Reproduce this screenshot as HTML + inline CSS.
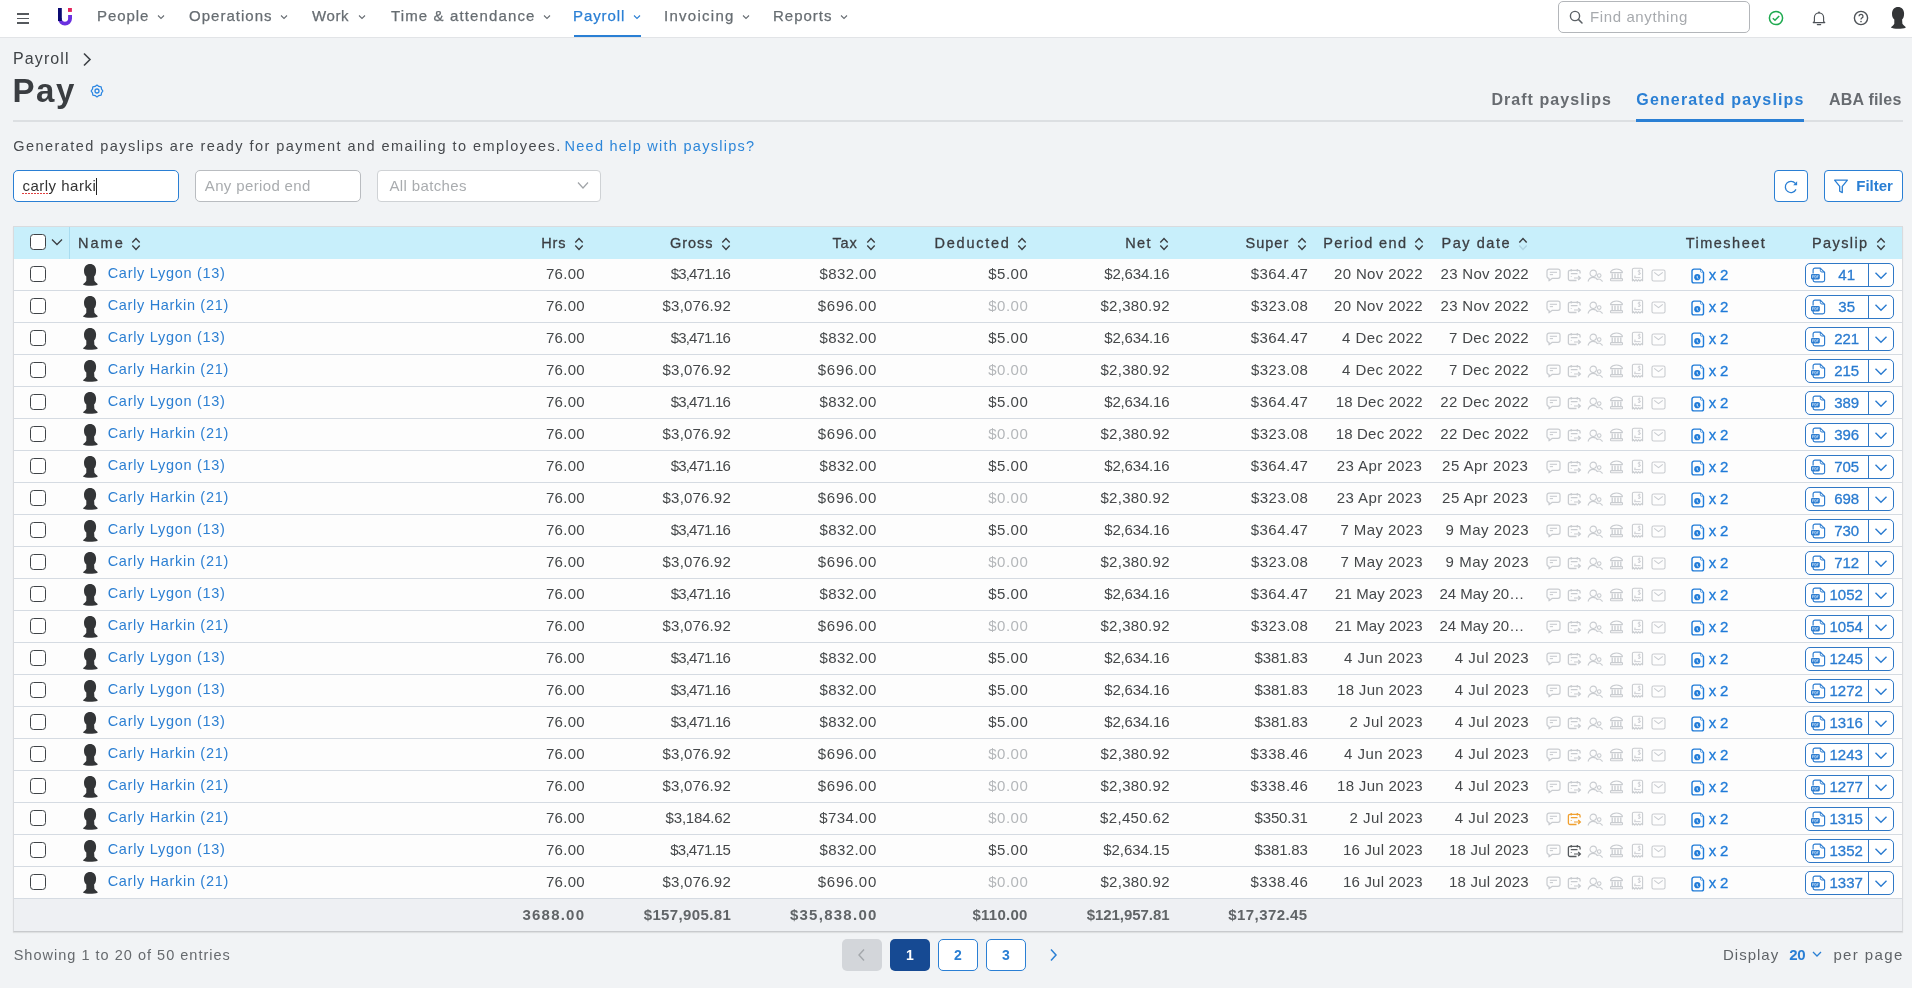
<!DOCTYPE html>
<html><head><meta charset="utf-8"><style>
html,body{margin:0;padding:0;}
body{width:1912px;height:988px;overflow:hidden;position:relative;background:#f1f3f5;font-family:"Liberation Sans", sans-serif;}
.t{position:absolute;white-space:nowrap;}
svg{display:block}
</style></head><body>
<div style="position:absolute;left:0px;top:0px;width:1912px;height:37px;background:#ffffff;border-bottom:1px solid #e2e4e7"></div>
<div style="position:absolute;left:17px;top:13.2px;width:12px;height:1.4px;background:#55595d"></div>
<div style="position:absolute;left:17px;top:17.7px;width:12px;height:1.4px;background:#55595d"></div>
<div style="position:absolute;left:17px;top:22.2px;width:12px;height:1.4px;background:#55595d"></div>
<svg style="position:absolute;left:56px;top:6px;" width="18" height="22" viewBox="0 0 18 22" fill="none">
<path d="M2 12 V12.6 A7 7 0 0 0 16 12.6 V9 H12.1 V12.6 A3.1 3.1 0 0 1 5.8 12.6 V12 Z" fill="#6a30e0"/>
<rect x="2" y="2" width="3.8" height="13" fill="#0b0a72"/>
<rect x="12" y="2" width="3.9" height="3.9" fill="#e4245c"/>
</svg>
<svg style="position:absolute;left:157px;top:14px;" width="8" height="6" viewBox="0 0 8 6" fill="none"><path d="M1 1.5 L4 4.5 L7 1.5" stroke="#676d72" stroke-width="1.1" fill="none"/></svg>
<svg style="position:absolute;left:280px;top:14px;" width="8" height="6" viewBox="0 0 8 6" fill="none"><path d="M1 1.5 L4 4.5 L7 1.5" stroke="#676d72" stroke-width="1.1" fill="none"/></svg>
<svg style="position:absolute;left:358px;top:14px;" width="8" height="6" viewBox="0 0 8 6" fill="none"><path d="M1 1.5 L4 4.5 L7 1.5" stroke="#676d72" stroke-width="1.1" fill="none"/></svg>
<svg style="position:absolute;left:543px;top:14px;" width="8" height="6" viewBox="0 0 8 6" fill="none"><path d="M1 1.5 L4 4.5 L7 1.5" stroke="#676d72" stroke-width="1.1" fill="none"/></svg>
<svg style="position:absolute;left:633px;top:14px;" width="8" height="6" viewBox="0 0 8 6" fill="none"><path d="M1 1.5 L4 4.5 L7 1.5" stroke="#2a7fd4" stroke-width="1.1" fill="none"/></svg>
<svg style="position:absolute;left:742px;top:14px;" width="8" height="6" viewBox="0 0 8 6" fill="none"><path d="M1 1.5 L4 4.5 L7 1.5" stroke="#676d72" stroke-width="1.1" fill="none"/></svg>
<svg style="position:absolute;left:840px;top:14px;" width="8" height="6" viewBox="0 0 8 6" fill="none"><path d="M1 1.5 L4 4.5 L7 1.5" stroke="#676d72" stroke-width="1.1" fill="none"/></svg>
<div style="position:absolute;left:574px;top:35px;width:67px;height:2px;background:#2a7fd4"></div>
<div style="position:absolute;left:1558px;top:1px;width:190px;height:30px;border:1px solid #b3b6ba;border-radius:5px;background:#fff"></div>
<svg style="position:absolute;left:1569px;top:10px;" width="15" height="15" viewBox="0 0 15 15" fill="none"><circle cx="6" cy="6" r="4.6" stroke="#5c6166" stroke-width="1.4"/><path d="M9.4 9.4 L13 13" stroke="#5c6166" stroke-width="1.5" stroke-linecap="round"/></svg>
<svg style="position:absolute;left:1767px;top:9px;" width="18" height="18" viewBox="0 0 18 18" fill="none"><circle cx="9" cy="9" r="6.6" stroke="#1eaa4f" stroke-width="1.5"/><path d="M5.8 9.2 L8 11.3 L12.2 6.9" stroke="#1eaa4f" stroke-width="1.5" fill="none"/></svg>
<svg style="position:absolute;left:1810px;top:9px;" width="18" height="18" viewBox="0 0 18 18" fill="none"><path d="M3.2 13.6 L4.4 12.3 V8.4 A4.6 4.6 0 0 1 13.6 8.4 V12.3 L14.8 13.6 Z" stroke="#4d5257" stroke-width="1.15" stroke-linejoin="round"/><circle cx="9" cy="3.3" r="0.9" fill="#4d5257"/><path d="M7.3 15.6 H10.7" stroke="#4d5257" stroke-width="1.1" stroke-linecap="round"/></svg>
<svg style="position:absolute;left:1852px;top:9px;" width="18" height="18" viewBox="0 0 18 18" fill="none"><circle cx="9" cy="9" r="6.6" stroke="#4d5257" stroke-width="1.4"/><path d="M7 7.3 A2 2 0 1 1 9.6 9.2 C9.1 9.5 9 9.8 9 10.5" stroke="#4d5257" stroke-width="1.3" fill="none"/><circle cx="9" cy="12.6" r="0.8" fill="#4d5257"/></svg>
<svg style="position:absolute;left:80px;top:51px;" width="14" height="16" viewBox="0 0 14 16" fill="none"><path d="M4 2.5 L10 8.5 L4 14.5" stroke="#3e4246" stroke-width="1.6" fill="none"/></svg>
<svg style="position:absolute;left:89px;top:83px;" width="16" height="16" viewBox="0 0 16 16" fill="none"><path d="M8.00 2.10 L9.88 3.47 L12.17 3.83 L12.53 6.12 L13.90 8.00 L12.53 9.88 L12.17 12.17 L9.88 12.53 L8.00 13.90 L6.12 12.53 L3.83 12.17 L3.47 9.88 L2.10 8.00 L3.47 6.12 L3.83 3.83 L6.12 3.47 Z" stroke="#2b86e2" stroke-width="1.25" stroke-linejoin="round" fill="none"/><circle cx="8" cy="8" r="2" stroke="#2b86e2" stroke-width="1.3"/></svg>
<div style="position:absolute;left:13px;top:120px;width:1890px;height:2px;background:#dcdfe2"></div>
<div style="position:absolute;left:1636px;top:119px;width:168px;height:3px;background:#2a7fd4"></div>
<div style="position:absolute;left:13px;top:170px;width:164px;height:30px;border:1px solid #2a7fd4;border-radius:5px;background:#fff"></div>
<div style="position:absolute;left:96px;top:178px;width:1px;height:17px;background:#222"></div>
<div style="position:absolute;left:22px;top:193px;width:1.5px;height:1.2px;background:#e04040"></div>
<div style="position:absolute;left:25px;top:193px;width:1.5px;height:1.2px;background:#e04040"></div>
<div style="position:absolute;left:28px;top:193px;width:1.5px;height:1.2px;background:#e04040"></div>
<div style="position:absolute;left:31px;top:193px;width:1.5px;height:1.2px;background:#e04040"></div>
<div style="position:absolute;left:34px;top:193px;width:1.5px;height:1.2px;background:#e04040"></div>
<div style="position:absolute;left:37px;top:193px;width:1.5px;height:1.2px;background:#e04040"></div>
<div style="position:absolute;left:40px;top:193px;width:1.5px;height:1.2px;background:#e04040"></div>
<div style="position:absolute;left:43px;top:193px;width:1.5px;height:1.2px;background:#e04040"></div>
<div style="position:absolute;left:46px;top:193px;width:1.5px;height:1.2px;background:#e04040"></div>
<div style="position:absolute;left:49px;top:193px;width:1.5px;height:1.2px;background:#e04040"></div>
<div style="position:absolute;left:195px;top:170px;width:164px;height:30px;border:1px solid #b9bcc0;border-radius:5px;background:#fff"></div>
<div style="position:absolute;left:377px;top:170px;width:222px;height:30px;border:1px solid #cfd2d5;border-radius:4px;background:#fff"></div>
<svg style="position:absolute;left:576px;top:180px;" width="14" height="12" viewBox="0 0 14 12" fill="none"><path d="M2 2.5 L7 8 L12 2.5" stroke="#a0a4a8" stroke-width="1.2" fill="none"/></svg>
<div style="position:absolute;left:1774px;top:170px;width:32px;height:30px;border:1px solid #2a7fd4;border-radius:4px;background:#fff"></div>
<svg style="position:absolute;left:1782px;top:178px;" width="18" height="18" viewBox="0 0 18 18" fill="none"><path d="M13.29 5.40 A5.6 5.6 0 1 0 13.98 11.37" stroke="#2a7fd4" stroke-width="1.3" fill="none"/><path d="M15.1 3.3 V7.2 H11.2 Z" fill="#2a7fd4"/></svg>
<div style="position:absolute;left:1824px;top:170px;width:77px;height:30px;border:1px solid #2a7fd4;border-radius:4px;background:#fff"></div>
<svg style="position:absolute;left:1832px;top:178px;" width="18" height="17" viewBox="0 0 18 17" fill="none"><path d="M2.6 2.2 H15.4 L10.3 8.4 V14.6 L7.7 13.2 V8.4 Z" stroke="#2a7fd4" stroke-width="1.3" stroke-linejoin="round" fill="none"/></svg>
<div style="position:absolute;left:13px;top:226px;width:1888px;height:704px;border:1px solid #d9dbde;border-bottom-color:#c8cacd;background:#fdfdfd;box-shadow:0 1px 1px rgba(0,0,0,0.08)"></div>
<div style="position:absolute;left:14px;top:227px;width:1888px;height:32px;background:#c8effb"></div>
<div style="position:absolute;left:69px;top:227px;width:1px;height:32px;background:#a8dcf0"></div>
<div style="position:absolute;left:30px;top:234px;width:13.5px;height:13.5px;border:1.3px solid #3f4347;border-radius:3.5px;background:#fff"></div>
<svg style="position:absolute;left:50px;top:237px;" width="14" height="10" viewBox="0 0 14 10" fill="none"><path d="M2 2.5 L7 7.5 L12 2.5" stroke="#3b3e42" stroke-width="1.3" fill="none"/></svg>
<svg style="position:absolute;left:130.9px;top:237px;" width="10" height="14" viewBox="0 0 10 14" fill="none"><path d="M1.3 5.4 L5 1.6 L8.7 5.4" stroke="#3b3e42" stroke-width="1.4" fill="none"/><path d="M1.3 8.6 L5 12.4 L8.7 8.6" stroke="#3b3e42" stroke-width="1.4" fill="none"/></svg>
<svg style="position:absolute;left:573.9px;top:237px;" width="10" height="14" viewBox="0 0 10 14" fill="none"><path d="M1.3 5.4 L5 1.6 L8.7 5.4" stroke="#3b3e42" stroke-width="1.4" fill="none"/><path d="M1.3 8.6 L5 12.4 L8.7 8.6" stroke="#3b3e42" stroke-width="1.4" fill="none"/></svg>
<svg style="position:absolute;left:720.6px;top:237px;" width="10" height="14" viewBox="0 0 10 14" fill="none"><path d="M1.3 5.4 L5 1.6 L8.7 5.4" stroke="#3b3e42" stroke-width="1.4" fill="none"/><path d="M1.3 8.6 L5 12.4 L8.7 8.6" stroke="#3b3e42" stroke-width="1.4" fill="none"/></svg>
<svg style="position:absolute;left:866px;top:237px;" width="10" height="14" viewBox="0 0 10 14" fill="none"><path d="M1.3 5.4 L5 1.6 L8.7 5.4" stroke="#3b3e42" stroke-width="1.4" fill="none"/><path d="M1.3 8.6 L5 12.4 L8.7 8.6" stroke="#3b3e42" stroke-width="1.4" fill="none"/></svg>
<svg style="position:absolute;left:1017px;top:237px;" width="10" height="14" viewBox="0 0 10 14" fill="none"><path d="M1.3 5.4 L5 1.6 L8.7 5.4" stroke="#3b3e42" stroke-width="1.4" fill="none"/><path d="M1.3 8.6 L5 12.4 L8.7 8.6" stroke="#3b3e42" stroke-width="1.4" fill="none"/></svg>
<svg style="position:absolute;left:1158.9px;top:237px;" width="10" height="14" viewBox="0 0 10 14" fill="none"><path d="M1.3 5.4 L5 1.6 L8.7 5.4" stroke="#3b3e42" stroke-width="1.4" fill="none"/><path d="M1.3 8.6 L5 12.4 L8.7 8.6" stroke="#3b3e42" stroke-width="1.4" fill="none"/></svg>
<svg style="position:absolute;left:1296.6px;top:237px;" width="10" height="14" viewBox="0 0 10 14" fill="none"><path d="M1.3 5.4 L5 1.6 L8.7 5.4" stroke="#3b3e42" stroke-width="1.4" fill="none"/><path d="M1.3 8.6 L5 12.4 L8.7 8.6" stroke="#3b3e42" stroke-width="1.4" fill="none"/></svg>
<svg style="position:absolute;left:1414px;top:237px;" width="10" height="14" viewBox="0 0 10 14" fill="none"><path d="M1.3 5.4 L5 1.6 L8.7 5.4" stroke="#3b3e42" stroke-width="1.4" fill="none"/><path d="M1.3 8.6 L5 12.4 L8.7 8.6" stroke="#3b3e42" stroke-width="1.4" fill="none"/></svg>
<svg style="position:absolute;left:1517.7px;top:237px;" width="10" height="14" viewBox="0 0 10 14" fill="none"><path d="M1.3 5.4 L5 1.6 L8.7 5.4" stroke="#3b3e42" stroke-width="1.4" fill="none"/><path d="M1.3 8.6 L5 12.4 L8.7 8.6" stroke="#aed3e2" stroke-width="1.4" fill="none"/></svg>
<svg style="position:absolute;left:1875.9px;top:237px;" width="10" height="14" viewBox="0 0 10 14" fill="none"><path d="M1.3 5.4 L5 1.6 L8.7 5.4" stroke="#3b3e42" stroke-width="1.4" fill="none"/><path d="M1.3 8.6 L5 12.4 L8.7 8.6" stroke="#3b3e42" stroke-width="1.4" fill="none"/></svg>
<svg style="position:absolute;left:1889.8px;top:5.5px;" width="17" height="25" viewBox="0 0 17 25" fill="none"><path d="M8 1 C4.6 1 2 3.4 2 7.8 C2 10.5 2.8 12.5 4.3 13.6 L4.3 17.8 C3.4 19.4 1.4 20.6 0.9 21.6 C3.5 23.2 12.2 23.4 15.9 21.4 C15.2 20.4 13.3 19.4 12.4 17.8 L12.1 13.4 C13.4 12.4 14.1 10.4 14.1 7.8 C14.1 3.4 11.6 1 8 1 Z" fill="#333537"/></svg>
<div style="position:absolute;left:14px;top:290px;width:1888px;height:1px;background:#d5dbe2"></div>
<div style="position:absolute;left:30px;top:266px;width:13.5px;height:13.5px;border:1.3px solid #3f4347;border-radius:3.5px;background:#fff"></div>
<svg style="position:absolute;left:82px;top:263px;" width="17" height="25" viewBox="0 0 17 25" fill="none"><path d="M8 1 C4.6 1 2 3.4 2 7.8 C2 10.5 2.8 12.5 4.3 13.6 L4.3 17.8 C3.4 19.4 1.4 20.6 0.9 21.6 C3.5 23.2 12.2 23.4 15.9 21.4 C15.2 20.4 13.3 19.4 12.4 17.8 L12.1 13.4 C13.4 12.4 14.1 10.4 14.1 7.8 C14.1 3.4 11.6 1 8 1 Z" fill="#333537"/></svg>
<svg style="position:absolute;left:1545.5px;top:268px;" width="15" height="14" viewBox="0 0 15 14" fill="none"><path d="M3 1.2 H12 A2 2 0 0 1 14 3.2 V8.3 A2 2 0 0 1 12 10.3 H6.3 L3 12.8 V10.3 A2 2 0 0 1 1 8.3 V3.2 A2 2 0 0 1 3 1.2 Z" stroke="#c9ccd0" stroke-width="1.2" stroke-linejoin="round"/><path d="M3.8 4.3 H11" stroke="#c9ccd0" stroke-width="1.1"/><path d="M3.8 6.6 H7" stroke="#c9ccd0" stroke-width="1.1"/></svg>
<svg style="position:absolute;left:1566.5px;top:268px;" width="15" height="14" viewBox="0 0 15 14" fill="none"><path d="M9.5 12.5 H3 A1.6 1.6 0 0 1 1.4 10.9 V3.9 A1.6 1.6 0 0 1 3 2.3 H11.5 A1.6 1.6 0 0 1 13.1 3.9 V5.5" stroke="#c9ccd0" stroke-width="1.3"/><path d="M4.2 1 V3.5 M10.3 1 V3.5" stroke="#c9ccd0" stroke-width="1.2"/><path d="M3.8 5.6 H10.5 M3.8 8.5 H4.6" stroke="#c9ccd0" stroke-width="1.1"/><path d="M7 10 H13.2 M11.2 8 L13.4 10 L11.2 12" stroke="#c9ccd0" stroke-width="1.2" fill="none"/></svg>
<svg style="position:absolute;left:1586.5px;top:268.5px;" width="17" height="14" viewBox="0 0 17 14" fill="none"><circle cx="6.2" cy="4.3" r="3.2" stroke="#c9ccd0" stroke-width="1.05"/><path d="M1 12.5 C2 9.3 4 8.4 6 8.4 C8 8.4 9.8 9.3 10.6 11" stroke="#c9ccd0" stroke-width="1.1"/><circle cx="12.2" cy="6.6" r="1.8" stroke="#c9ccd0" stroke-width="1.1"/><path d="M10.4 10.4 C11.5 9.9 13.2 9.9 14.4 11.4 L15.6 12.5" stroke="#c9ccd0" stroke-width="1.1"/></svg>
<svg style="position:absolute;left:1608.5px;top:268px;" width="15" height="14" viewBox="0 0 15 14" fill="none"><path d="M1.6 3.8 C2.5 2.3 4.6 1 7.5 1 C10.4 1 12.5 2.3 13.4 3.8 V4.6 H1.6 Z" stroke="#c9ccd0" stroke-width="1.1" stroke-linejoin="round"/><path d="M3.2 5.4 V10 M6 5.4 V10 M9 5.4 V10 M11.8 5.4 V10" stroke="#c9ccd0" stroke-width="1.3"/><rect x="1.5" y="10.6" width="12" height="2.1" rx="0.8" stroke="#c9ccd0" stroke-width="1.1"/></svg>
<svg style="position:absolute;left:1630.5px;top:266.5px;" width="13" height="16" viewBox="0 0 13 16" fill="none"><path d="M1.4 13.8 V2.8 A1.6 1.6 0 0 1 3 1.2 H10 A1.6 1.6 0 0 1 11.6 2.8 V13.8 L10.3 12.6 L9 14.2 L7.6 12.6 L6.3 14.2 L5 12.6 L3.6 14.2 L2.5 12.6 Z" stroke="#c9ccd0" stroke-width="1.1" stroke-linejoin="round"/><path d="M9.4 3.7 C8.2 2.9 7.1 3.5 7.2 4.4 C7.4 5.3 9.6 5.4 9.5 6.5 C9.4 7.5 8 7.7 7 7" stroke="#c9ccd0" stroke-width="0.9"/><path d="M8.3 2.6 V8" stroke="#c9ccd0" stroke-width="0.7"/><path d="M3.1 9.2 H4.8 M3.1 10.6 H9.6" stroke="#c9ccd0" stroke-width="0.9"/></svg>
<svg style="position:absolute;left:1650.5px;top:268.5px;" width="15" height="13" viewBox="0 0 15 13" fill="none"><rect x="1" y="1" width="13" height="11" rx="1.6" stroke="#c9ccd0" stroke-width="1.1"/><path d="M3.2 3.4 L7.5 6.6 L11.8 3.4" stroke="#c9ccd0" stroke-width="1.1" fill="none"/></svg>
<svg style="position:absolute;left:1691px;top:268px;" width="14" height="16" viewBox="0 0 14 16" fill="none"><path d="M9 1.1 H3 A2 2 0 0 0 1 3.1 V12.9 A2 2 0 0 0 3 14.9 H10.5 A2 2 0 0 0 12.5 12.9 V4.6 Z" stroke="#1f7bd8" stroke-width="1.4" stroke-linejoin="round"/><circle cx="10.6" cy="3.2" r="1.1" fill="#fff" stroke="#1f7bd8" stroke-width="0.7"/><circle cx="6.3" cy="9.2" r="3.1" fill="#1f7bd8"/><path d="M6.2 7.8 V9.7 L7.4 10.6" stroke="#fff" stroke-width="0.9"/></svg>
<div style="position:absolute;left:1805px;top:263px;width:87px;height:22px;border:1px solid #2f78c6;border-radius:5px;background:#fff"></div>
<div style="position:absolute;left:1868px;top:263px;width:1px;height:24px;background:#2f78c6"></div>
<svg style="position:absolute;left:1810px;top:267px;" width="16" height="16" viewBox="0 0 16 16" fill="none"><path d="M3.1 6.5 V3 A1.9 1.9 0 0 1 5 1.1 H10.3 L14.6 5.3 V12.9 A1.9 1.9 0 0 1 12.7 14.8 H5 A1.9 1.9 0 0 1 3.1 12.9 V12" stroke="#2a7bd0" stroke-width="1.15" stroke-linejoin="round"/><path d="M10.3 1.1 V3.4 A1.6 1.6 0 0 0 11.9 5 H14.6" stroke="#2a7bd0" stroke-width="1"/><rect x="1" y="7" width="8.8" height="5.4" rx="1.3" fill="#2a7bd0"/><path d="M2.5 11 V8.4 H3.6 A0.7 0.7 0 0 1 3.6 9.8 H2.5 M4.9 8.4 V11 H5.5 A1.1 1.3 0 0 0 5.5 8.4 Z M7.3 11 V8.4 H8.6 M7.3 9.6 H8.3" stroke="#dff0ff" stroke-width="0.55" fill="none"/></svg>
<svg style="position:absolute;left:1874px;top:271px;" width="14" height="10" viewBox="0 0 14 10" fill="none"><path d="M1.5 1.8 L7 7.2 L12.5 1.8" stroke="#2a7bd0" stroke-width="1.4" fill="none"/></svg>
<div style="position:absolute;left:14px;top:322px;width:1888px;height:1px;background:#d5dbe2"></div>
<div style="position:absolute;left:30px;top:298px;width:13.5px;height:13.5px;border:1.3px solid #3f4347;border-radius:3.5px;background:#fff"></div>
<svg style="position:absolute;left:82px;top:295px;" width="17" height="25" viewBox="0 0 17 25" fill="none"><path d="M8 1 C4.6 1 2 3.4 2 7.8 C2 10.5 2.8 12.5 4.3 13.6 L4.3 17.8 C3.4 19.4 1.4 20.6 0.9 21.6 C3.5 23.2 12.2 23.4 15.9 21.4 C15.2 20.4 13.3 19.4 12.4 17.8 L12.1 13.4 C13.4 12.4 14.1 10.4 14.1 7.8 C14.1 3.4 11.6 1 8 1 Z" fill="#333537"/></svg>
<svg style="position:absolute;left:1545.5px;top:300px;" width="15" height="14" viewBox="0 0 15 14" fill="none"><path d="M3 1.2 H12 A2 2 0 0 1 14 3.2 V8.3 A2 2 0 0 1 12 10.3 H6.3 L3 12.8 V10.3 A2 2 0 0 1 1 8.3 V3.2 A2 2 0 0 1 3 1.2 Z" stroke="#c9ccd0" stroke-width="1.2" stroke-linejoin="round"/><path d="M3.8 4.3 H11" stroke="#c9ccd0" stroke-width="1.1"/><path d="M3.8 6.6 H7" stroke="#c9ccd0" stroke-width="1.1"/></svg>
<svg style="position:absolute;left:1566.5px;top:300px;" width="15" height="14" viewBox="0 0 15 14" fill="none"><path d="M9.5 12.5 H3 A1.6 1.6 0 0 1 1.4 10.9 V3.9 A1.6 1.6 0 0 1 3 2.3 H11.5 A1.6 1.6 0 0 1 13.1 3.9 V5.5" stroke="#c9ccd0" stroke-width="1.3"/><path d="M4.2 1 V3.5 M10.3 1 V3.5" stroke="#c9ccd0" stroke-width="1.2"/><path d="M3.8 5.6 H10.5 M3.8 8.5 H4.6" stroke="#c9ccd0" stroke-width="1.1"/><path d="M7 10 H13.2 M11.2 8 L13.4 10 L11.2 12" stroke="#c9ccd0" stroke-width="1.2" fill="none"/></svg>
<svg style="position:absolute;left:1586.5px;top:300.5px;" width="17" height="14" viewBox="0 0 17 14" fill="none"><circle cx="6.2" cy="4.3" r="3.2" stroke="#c9ccd0" stroke-width="1.05"/><path d="M1 12.5 C2 9.3 4 8.4 6 8.4 C8 8.4 9.8 9.3 10.6 11" stroke="#c9ccd0" stroke-width="1.1"/><circle cx="12.2" cy="6.6" r="1.8" stroke="#c9ccd0" stroke-width="1.1"/><path d="M10.4 10.4 C11.5 9.9 13.2 9.9 14.4 11.4 L15.6 12.5" stroke="#c9ccd0" stroke-width="1.1"/></svg>
<svg style="position:absolute;left:1608.5px;top:300px;" width="15" height="14" viewBox="0 0 15 14" fill="none"><path d="M1.6 3.8 C2.5 2.3 4.6 1 7.5 1 C10.4 1 12.5 2.3 13.4 3.8 V4.6 H1.6 Z" stroke="#c9ccd0" stroke-width="1.1" stroke-linejoin="round"/><path d="M3.2 5.4 V10 M6 5.4 V10 M9 5.4 V10 M11.8 5.4 V10" stroke="#c9ccd0" stroke-width="1.3"/><rect x="1.5" y="10.6" width="12" height="2.1" rx="0.8" stroke="#c9ccd0" stroke-width="1.1"/></svg>
<svg style="position:absolute;left:1630.5px;top:298.5px;" width="13" height="16" viewBox="0 0 13 16" fill="none"><path d="M1.4 13.8 V2.8 A1.6 1.6 0 0 1 3 1.2 H10 A1.6 1.6 0 0 1 11.6 2.8 V13.8 L10.3 12.6 L9 14.2 L7.6 12.6 L6.3 14.2 L5 12.6 L3.6 14.2 L2.5 12.6 Z" stroke="#c9ccd0" stroke-width="1.1" stroke-linejoin="round"/><path d="M9.4 3.7 C8.2 2.9 7.1 3.5 7.2 4.4 C7.4 5.3 9.6 5.4 9.5 6.5 C9.4 7.5 8 7.7 7 7" stroke="#c9ccd0" stroke-width="0.9"/><path d="M8.3 2.6 V8" stroke="#c9ccd0" stroke-width="0.7"/><path d="M3.1 9.2 H4.8 M3.1 10.6 H9.6" stroke="#c9ccd0" stroke-width="0.9"/></svg>
<svg style="position:absolute;left:1650.5px;top:300.5px;" width="15" height="13" viewBox="0 0 15 13" fill="none"><rect x="1" y="1" width="13" height="11" rx="1.6" stroke="#c9ccd0" stroke-width="1.1"/><path d="M3.2 3.4 L7.5 6.6 L11.8 3.4" stroke="#c9ccd0" stroke-width="1.1" fill="none"/></svg>
<svg style="position:absolute;left:1691px;top:300px;" width="14" height="16" viewBox="0 0 14 16" fill="none"><path d="M9 1.1 H3 A2 2 0 0 0 1 3.1 V12.9 A2 2 0 0 0 3 14.9 H10.5 A2 2 0 0 0 12.5 12.9 V4.6 Z" stroke="#1f7bd8" stroke-width="1.4" stroke-linejoin="round"/><circle cx="10.6" cy="3.2" r="1.1" fill="#fff" stroke="#1f7bd8" stroke-width="0.7"/><circle cx="6.3" cy="9.2" r="3.1" fill="#1f7bd8"/><path d="M6.2 7.8 V9.7 L7.4 10.6" stroke="#fff" stroke-width="0.9"/></svg>
<div style="position:absolute;left:1805px;top:295px;width:87px;height:22px;border:1px solid #2f78c6;border-radius:5px;background:#fff"></div>
<div style="position:absolute;left:1868px;top:295px;width:1px;height:24px;background:#2f78c6"></div>
<svg style="position:absolute;left:1810px;top:299px;" width="16" height="16" viewBox="0 0 16 16" fill="none"><path d="M3.1 6.5 V3 A1.9 1.9 0 0 1 5 1.1 H10.3 L14.6 5.3 V12.9 A1.9 1.9 0 0 1 12.7 14.8 H5 A1.9 1.9 0 0 1 3.1 12.9 V12" stroke="#2a7bd0" stroke-width="1.15" stroke-linejoin="round"/><path d="M10.3 1.1 V3.4 A1.6 1.6 0 0 0 11.9 5 H14.6" stroke="#2a7bd0" stroke-width="1"/><rect x="1" y="7" width="8.8" height="5.4" rx="1.3" fill="#2a7bd0"/><path d="M2.5 11 V8.4 H3.6 A0.7 0.7 0 0 1 3.6 9.8 H2.5 M4.9 8.4 V11 H5.5 A1.1 1.3 0 0 0 5.5 8.4 Z M7.3 11 V8.4 H8.6 M7.3 9.6 H8.3" stroke="#dff0ff" stroke-width="0.55" fill="none"/></svg>
<svg style="position:absolute;left:1874px;top:303px;" width="14" height="10" viewBox="0 0 14 10" fill="none"><path d="M1.5 1.8 L7 7.2 L12.5 1.8" stroke="#2a7bd0" stroke-width="1.4" fill="none"/></svg>
<div style="position:absolute;left:14px;top:354px;width:1888px;height:1px;background:#d5dbe2"></div>
<div style="position:absolute;left:30px;top:330px;width:13.5px;height:13.5px;border:1.3px solid #3f4347;border-radius:3.5px;background:#fff"></div>
<svg style="position:absolute;left:82px;top:327px;" width="17" height="25" viewBox="0 0 17 25" fill="none"><path d="M8 1 C4.6 1 2 3.4 2 7.8 C2 10.5 2.8 12.5 4.3 13.6 L4.3 17.8 C3.4 19.4 1.4 20.6 0.9 21.6 C3.5 23.2 12.2 23.4 15.9 21.4 C15.2 20.4 13.3 19.4 12.4 17.8 L12.1 13.4 C13.4 12.4 14.1 10.4 14.1 7.8 C14.1 3.4 11.6 1 8 1 Z" fill="#333537"/></svg>
<svg style="position:absolute;left:1545.5px;top:332px;" width="15" height="14" viewBox="0 0 15 14" fill="none"><path d="M3 1.2 H12 A2 2 0 0 1 14 3.2 V8.3 A2 2 0 0 1 12 10.3 H6.3 L3 12.8 V10.3 A2 2 0 0 1 1 8.3 V3.2 A2 2 0 0 1 3 1.2 Z" stroke="#c9ccd0" stroke-width="1.2" stroke-linejoin="round"/><path d="M3.8 4.3 H11" stroke="#c9ccd0" stroke-width="1.1"/><path d="M3.8 6.6 H7" stroke="#c9ccd0" stroke-width="1.1"/></svg>
<svg style="position:absolute;left:1566.5px;top:332px;" width="15" height="14" viewBox="0 0 15 14" fill="none"><path d="M9.5 12.5 H3 A1.6 1.6 0 0 1 1.4 10.9 V3.9 A1.6 1.6 0 0 1 3 2.3 H11.5 A1.6 1.6 0 0 1 13.1 3.9 V5.5" stroke="#c9ccd0" stroke-width="1.3"/><path d="M4.2 1 V3.5 M10.3 1 V3.5" stroke="#c9ccd0" stroke-width="1.2"/><path d="M3.8 5.6 H10.5 M3.8 8.5 H4.6" stroke="#c9ccd0" stroke-width="1.1"/><path d="M7 10 H13.2 M11.2 8 L13.4 10 L11.2 12" stroke="#c9ccd0" stroke-width="1.2" fill="none"/></svg>
<svg style="position:absolute;left:1586.5px;top:332.5px;" width="17" height="14" viewBox="0 0 17 14" fill="none"><circle cx="6.2" cy="4.3" r="3.2" stroke="#c9ccd0" stroke-width="1.05"/><path d="M1 12.5 C2 9.3 4 8.4 6 8.4 C8 8.4 9.8 9.3 10.6 11" stroke="#c9ccd0" stroke-width="1.1"/><circle cx="12.2" cy="6.6" r="1.8" stroke="#c9ccd0" stroke-width="1.1"/><path d="M10.4 10.4 C11.5 9.9 13.2 9.9 14.4 11.4 L15.6 12.5" stroke="#c9ccd0" stroke-width="1.1"/></svg>
<svg style="position:absolute;left:1608.5px;top:332px;" width="15" height="14" viewBox="0 0 15 14" fill="none"><path d="M1.6 3.8 C2.5 2.3 4.6 1 7.5 1 C10.4 1 12.5 2.3 13.4 3.8 V4.6 H1.6 Z" stroke="#c9ccd0" stroke-width="1.1" stroke-linejoin="round"/><path d="M3.2 5.4 V10 M6 5.4 V10 M9 5.4 V10 M11.8 5.4 V10" stroke="#c9ccd0" stroke-width="1.3"/><rect x="1.5" y="10.6" width="12" height="2.1" rx="0.8" stroke="#c9ccd0" stroke-width="1.1"/></svg>
<svg style="position:absolute;left:1630.5px;top:330.5px;" width="13" height="16" viewBox="0 0 13 16" fill="none"><path d="M1.4 13.8 V2.8 A1.6 1.6 0 0 1 3 1.2 H10 A1.6 1.6 0 0 1 11.6 2.8 V13.8 L10.3 12.6 L9 14.2 L7.6 12.6 L6.3 14.2 L5 12.6 L3.6 14.2 L2.5 12.6 Z" stroke="#c9ccd0" stroke-width="1.1" stroke-linejoin="round"/><path d="M9.4 3.7 C8.2 2.9 7.1 3.5 7.2 4.4 C7.4 5.3 9.6 5.4 9.5 6.5 C9.4 7.5 8 7.7 7 7" stroke="#c9ccd0" stroke-width="0.9"/><path d="M8.3 2.6 V8" stroke="#c9ccd0" stroke-width="0.7"/><path d="M3.1 9.2 H4.8 M3.1 10.6 H9.6" stroke="#c9ccd0" stroke-width="0.9"/></svg>
<svg style="position:absolute;left:1650.5px;top:332.5px;" width="15" height="13" viewBox="0 0 15 13" fill="none"><rect x="1" y="1" width="13" height="11" rx="1.6" stroke="#c9ccd0" stroke-width="1.1"/><path d="M3.2 3.4 L7.5 6.6 L11.8 3.4" stroke="#c9ccd0" stroke-width="1.1" fill="none"/></svg>
<svg style="position:absolute;left:1691px;top:332px;" width="14" height="16" viewBox="0 0 14 16" fill="none"><path d="M9 1.1 H3 A2 2 0 0 0 1 3.1 V12.9 A2 2 0 0 0 3 14.9 H10.5 A2 2 0 0 0 12.5 12.9 V4.6 Z" stroke="#1f7bd8" stroke-width="1.4" stroke-linejoin="round"/><circle cx="10.6" cy="3.2" r="1.1" fill="#fff" stroke="#1f7bd8" stroke-width="0.7"/><circle cx="6.3" cy="9.2" r="3.1" fill="#1f7bd8"/><path d="M6.2 7.8 V9.7 L7.4 10.6" stroke="#fff" stroke-width="0.9"/></svg>
<div style="position:absolute;left:1805px;top:327px;width:87px;height:22px;border:1px solid #2f78c6;border-radius:5px;background:#fff"></div>
<div style="position:absolute;left:1868px;top:327px;width:1px;height:24px;background:#2f78c6"></div>
<svg style="position:absolute;left:1810px;top:331px;" width="16" height="16" viewBox="0 0 16 16" fill="none"><path d="M3.1 6.5 V3 A1.9 1.9 0 0 1 5 1.1 H10.3 L14.6 5.3 V12.9 A1.9 1.9 0 0 1 12.7 14.8 H5 A1.9 1.9 0 0 1 3.1 12.9 V12" stroke="#2a7bd0" stroke-width="1.15" stroke-linejoin="round"/><path d="M10.3 1.1 V3.4 A1.6 1.6 0 0 0 11.9 5 H14.6" stroke="#2a7bd0" stroke-width="1"/><rect x="1" y="7" width="8.8" height="5.4" rx="1.3" fill="#2a7bd0"/><path d="M2.5 11 V8.4 H3.6 A0.7 0.7 0 0 1 3.6 9.8 H2.5 M4.9 8.4 V11 H5.5 A1.1 1.3 0 0 0 5.5 8.4 Z M7.3 11 V8.4 H8.6 M7.3 9.6 H8.3" stroke="#dff0ff" stroke-width="0.55" fill="none"/></svg>
<svg style="position:absolute;left:1874px;top:335px;" width="14" height="10" viewBox="0 0 14 10" fill="none"><path d="M1.5 1.8 L7 7.2 L12.5 1.8" stroke="#2a7bd0" stroke-width="1.4" fill="none"/></svg>
<div style="position:absolute;left:14px;top:386px;width:1888px;height:1px;background:#d5dbe2"></div>
<div style="position:absolute;left:30px;top:362px;width:13.5px;height:13.5px;border:1.3px solid #3f4347;border-radius:3.5px;background:#fff"></div>
<svg style="position:absolute;left:82px;top:359px;" width="17" height="25" viewBox="0 0 17 25" fill="none"><path d="M8 1 C4.6 1 2 3.4 2 7.8 C2 10.5 2.8 12.5 4.3 13.6 L4.3 17.8 C3.4 19.4 1.4 20.6 0.9 21.6 C3.5 23.2 12.2 23.4 15.9 21.4 C15.2 20.4 13.3 19.4 12.4 17.8 L12.1 13.4 C13.4 12.4 14.1 10.4 14.1 7.8 C14.1 3.4 11.6 1 8 1 Z" fill="#333537"/></svg>
<svg style="position:absolute;left:1545.5px;top:364px;" width="15" height="14" viewBox="0 0 15 14" fill="none"><path d="M3 1.2 H12 A2 2 0 0 1 14 3.2 V8.3 A2 2 0 0 1 12 10.3 H6.3 L3 12.8 V10.3 A2 2 0 0 1 1 8.3 V3.2 A2 2 0 0 1 3 1.2 Z" stroke="#c9ccd0" stroke-width="1.2" stroke-linejoin="round"/><path d="M3.8 4.3 H11" stroke="#c9ccd0" stroke-width="1.1"/><path d="M3.8 6.6 H7" stroke="#c9ccd0" stroke-width="1.1"/></svg>
<svg style="position:absolute;left:1566.5px;top:364px;" width="15" height="14" viewBox="0 0 15 14" fill="none"><path d="M9.5 12.5 H3 A1.6 1.6 0 0 1 1.4 10.9 V3.9 A1.6 1.6 0 0 1 3 2.3 H11.5 A1.6 1.6 0 0 1 13.1 3.9 V5.5" stroke="#c9ccd0" stroke-width="1.3"/><path d="M4.2 1 V3.5 M10.3 1 V3.5" stroke="#c9ccd0" stroke-width="1.2"/><path d="M3.8 5.6 H10.5 M3.8 8.5 H4.6" stroke="#c9ccd0" stroke-width="1.1"/><path d="M7 10 H13.2 M11.2 8 L13.4 10 L11.2 12" stroke="#c9ccd0" stroke-width="1.2" fill="none"/></svg>
<svg style="position:absolute;left:1586.5px;top:364.5px;" width="17" height="14" viewBox="0 0 17 14" fill="none"><circle cx="6.2" cy="4.3" r="3.2" stroke="#c9ccd0" stroke-width="1.05"/><path d="M1 12.5 C2 9.3 4 8.4 6 8.4 C8 8.4 9.8 9.3 10.6 11" stroke="#c9ccd0" stroke-width="1.1"/><circle cx="12.2" cy="6.6" r="1.8" stroke="#c9ccd0" stroke-width="1.1"/><path d="M10.4 10.4 C11.5 9.9 13.2 9.9 14.4 11.4 L15.6 12.5" stroke="#c9ccd0" stroke-width="1.1"/></svg>
<svg style="position:absolute;left:1608.5px;top:364px;" width="15" height="14" viewBox="0 0 15 14" fill="none"><path d="M1.6 3.8 C2.5 2.3 4.6 1 7.5 1 C10.4 1 12.5 2.3 13.4 3.8 V4.6 H1.6 Z" stroke="#c9ccd0" stroke-width="1.1" stroke-linejoin="round"/><path d="M3.2 5.4 V10 M6 5.4 V10 M9 5.4 V10 M11.8 5.4 V10" stroke="#c9ccd0" stroke-width="1.3"/><rect x="1.5" y="10.6" width="12" height="2.1" rx="0.8" stroke="#c9ccd0" stroke-width="1.1"/></svg>
<svg style="position:absolute;left:1630.5px;top:362.5px;" width="13" height="16" viewBox="0 0 13 16" fill="none"><path d="M1.4 13.8 V2.8 A1.6 1.6 0 0 1 3 1.2 H10 A1.6 1.6 0 0 1 11.6 2.8 V13.8 L10.3 12.6 L9 14.2 L7.6 12.6 L6.3 14.2 L5 12.6 L3.6 14.2 L2.5 12.6 Z" stroke="#c9ccd0" stroke-width="1.1" stroke-linejoin="round"/><path d="M9.4 3.7 C8.2 2.9 7.1 3.5 7.2 4.4 C7.4 5.3 9.6 5.4 9.5 6.5 C9.4 7.5 8 7.7 7 7" stroke="#c9ccd0" stroke-width="0.9"/><path d="M8.3 2.6 V8" stroke="#c9ccd0" stroke-width="0.7"/><path d="M3.1 9.2 H4.8 M3.1 10.6 H9.6" stroke="#c9ccd0" stroke-width="0.9"/></svg>
<svg style="position:absolute;left:1650.5px;top:364.5px;" width="15" height="13" viewBox="0 0 15 13" fill="none"><rect x="1" y="1" width="13" height="11" rx="1.6" stroke="#c9ccd0" stroke-width="1.1"/><path d="M3.2 3.4 L7.5 6.6 L11.8 3.4" stroke="#c9ccd0" stroke-width="1.1" fill="none"/></svg>
<svg style="position:absolute;left:1691px;top:364px;" width="14" height="16" viewBox="0 0 14 16" fill="none"><path d="M9 1.1 H3 A2 2 0 0 0 1 3.1 V12.9 A2 2 0 0 0 3 14.9 H10.5 A2 2 0 0 0 12.5 12.9 V4.6 Z" stroke="#1f7bd8" stroke-width="1.4" stroke-linejoin="round"/><circle cx="10.6" cy="3.2" r="1.1" fill="#fff" stroke="#1f7bd8" stroke-width="0.7"/><circle cx="6.3" cy="9.2" r="3.1" fill="#1f7bd8"/><path d="M6.2 7.8 V9.7 L7.4 10.6" stroke="#fff" stroke-width="0.9"/></svg>
<div style="position:absolute;left:1805px;top:359px;width:87px;height:22px;border:1px solid #2f78c6;border-radius:5px;background:#fff"></div>
<div style="position:absolute;left:1868px;top:359px;width:1px;height:24px;background:#2f78c6"></div>
<svg style="position:absolute;left:1810px;top:363px;" width="16" height="16" viewBox="0 0 16 16" fill="none"><path d="M3.1 6.5 V3 A1.9 1.9 0 0 1 5 1.1 H10.3 L14.6 5.3 V12.9 A1.9 1.9 0 0 1 12.7 14.8 H5 A1.9 1.9 0 0 1 3.1 12.9 V12" stroke="#2a7bd0" stroke-width="1.15" stroke-linejoin="round"/><path d="M10.3 1.1 V3.4 A1.6 1.6 0 0 0 11.9 5 H14.6" stroke="#2a7bd0" stroke-width="1"/><rect x="1" y="7" width="8.8" height="5.4" rx="1.3" fill="#2a7bd0"/><path d="M2.5 11 V8.4 H3.6 A0.7 0.7 0 0 1 3.6 9.8 H2.5 M4.9 8.4 V11 H5.5 A1.1 1.3 0 0 0 5.5 8.4 Z M7.3 11 V8.4 H8.6 M7.3 9.6 H8.3" stroke="#dff0ff" stroke-width="0.55" fill="none"/></svg>
<svg style="position:absolute;left:1874px;top:367px;" width="14" height="10" viewBox="0 0 14 10" fill="none"><path d="M1.5 1.8 L7 7.2 L12.5 1.8" stroke="#2a7bd0" stroke-width="1.4" fill="none"/></svg>
<div style="position:absolute;left:14px;top:418px;width:1888px;height:1px;background:#d5dbe2"></div>
<div style="position:absolute;left:30px;top:394px;width:13.5px;height:13.5px;border:1.3px solid #3f4347;border-radius:3.5px;background:#fff"></div>
<svg style="position:absolute;left:82px;top:391px;" width="17" height="25" viewBox="0 0 17 25" fill="none"><path d="M8 1 C4.6 1 2 3.4 2 7.8 C2 10.5 2.8 12.5 4.3 13.6 L4.3 17.8 C3.4 19.4 1.4 20.6 0.9 21.6 C3.5 23.2 12.2 23.4 15.9 21.4 C15.2 20.4 13.3 19.4 12.4 17.8 L12.1 13.4 C13.4 12.4 14.1 10.4 14.1 7.8 C14.1 3.4 11.6 1 8 1 Z" fill="#333537"/></svg>
<svg style="position:absolute;left:1545.5px;top:396px;" width="15" height="14" viewBox="0 0 15 14" fill="none"><path d="M3 1.2 H12 A2 2 0 0 1 14 3.2 V8.3 A2 2 0 0 1 12 10.3 H6.3 L3 12.8 V10.3 A2 2 0 0 1 1 8.3 V3.2 A2 2 0 0 1 3 1.2 Z" stroke="#c9ccd0" stroke-width="1.2" stroke-linejoin="round"/><path d="M3.8 4.3 H11" stroke="#c9ccd0" stroke-width="1.1"/><path d="M3.8 6.6 H7" stroke="#c9ccd0" stroke-width="1.1"/></svg>
<svg style="position:absolute;left:1566.5px;top:396px;" width="15" height="14" viewBox="0 0 15 14" fill="none"><path d="M9.5 12.5 H3 A1.6 1.6 0 0 1 1.4 10.9 V3.9 A1.6 1.6 0 0 1 3 2.3 H11.5 A1.6 1.6 0 0 1 13.1 3.9 V5.5" stroke="#c9ccd0" stroke-width="1.3"/><path d="M4.2 1 V3.5 M10.3 1 V3.5" stroke="#c9ccd0" stroke-width="1.2"/><path d="M3.8 5.6 H10.5 M3.8 8.5 H4.6" stroke="#c9ccd0" stroke-width="1.1"/><path d="M7 10 H13.2 M11.2 8 L13.4 10 L11.2 12" stroke="#c9ccd0" stroke-width="1.2" fill="none"/></svg>
<svg style="position:absolute;left:1586.5px;top:396.5px;" width="17" height="14" viewBox="0 0 17 14" fill="none"><circle cx="6.2" cy="4.3" r="3.2" stroke="#c9ccd0" stroke-width="1.05"/><path d="M1 12.5 C2 9.3 4 8.4 6 8.4 C8 8.4 9.8 9.3 10.6 11" stroke="#c9ccd0" stroke-width="1.1"/><circle cx="12.2" cy="6.6" r="1.8" stroke="#c9ccd0" stroke-width="1.1"/><path d="M10.4 10.4 C11.5 9.9 13.2 9.9 14.4 11.4 L15.6 12.5" stroke="#c9ccd0" stroke-width="1.1"/></svg>
<svg style="position:absolute;left:1608.5px;top:396px;" width="15" height="14" viewBox="0 0 15 14" fill="none"><path d="M1.6 3.8 C2.5 2.3 4.6 1 7.5 1 C10.4 1 12.5 2.3 13.4 3.8 V4.6 H1.6 Z" stroke="#c9ccd0" stroke-width="1.1" stroke-linejoin="round"/><path d="M3.2 5.4 V10 M6 5.4 V10 M9 5.4 V10 M11.8 5.4 V10" stroke="#c9ccd0" stroke-width="1.3"/><rect x="1.5" y="10.6" width="12" height="2.1" rx="0.8" stroke="#c9ccd0" stroke-width="1.1"/></svg>
<svg style="position:absolute;left:1630.5px;top:394.5px;" width="13" height="16" viewBox="0 0 13 16" fill="none"><path d="M1.4 13.8 V2.8 A1.6 1.6 0 0 1 3 1.2 H10 A1.6 1.6 0 0 1 11.6 2.8 V13.8 L10.3 12.6 L9 14.2 L7.6 12.6 L6.3 14.2 L5 12.6 L3.6 14.2 L2.5 12.6 Z" stroke="#c9ccd0" stroke-width="1.1" stroke-linejoin="round"/><path d="M9.4 3.7 C8.2 2.9 7.1 3.5 7.2 4.4 C7.4 5.3 9.6 5.4 9.5 6.5 C9.4 7.5 8 7.7 7 7" stroke="#c9ccd0" stroke-width="0.9"/><path d="M8.3 2.6 V8" stroke="#c9ccd0" stroke-width="0.7"/><path d="M3.1 9.2 H4.8 M3.1 10.6 H9.6" stroke="#c9ccd0" stroke-width="0.9"/></svg>
<svg style="position:absolute;left:1650.5px;top:396.5px;" width="15" height="13" viewBox="0 0 15 13" fill="none"><rect x="1" y="1" width="13" height="11" rx="1.6" stroke="#c9ccd0" stroke-width="1.1"/><path d="M3.2 3.4 L7.5 6.6 L11.8 3.4" stroke="#c9ccd0" stroke-width="1.1" fill="none"/></svg>
<svg style="position:absolute;left:1691px;top:396px;" width="14" height="16" viewBox="0 0 14 16" fill="none"><path d="M9 1.1 H3 A2 2 0 0 0 1 3.1 V12.9 A2 2 0 0 0 3 14.9 H10.5 A2 2 0 0 0 12.5 12.9 V4.6 Z" stroke="#1f7bd8" stroke-width="1.4" stroke-linejoin="round"/><circle cx="10.6" cy="3.2" r="1.1" fill="#fff" stroke="#1f7bd8" stroke-width="0.7"/><circle cx="6.3" cy="9.2" r="3.1" fill="#1f7bd8"/><path d="M6.2 7.8 V9.7 L7.4 10.6" stroke="#fff" stroke-width="0.9"/></svg>
<div style="position:absolute;left:1805px;top:391px;width:87px;height:22px;border:1px solid #2f78c6;border-radius:5px;background:#fff"></div>
<div style="position:absolute;left:1868px;top:391px;width:1px;height:24px;background:#2f78c6"></div>
<svg style="position:absolute;left:1810px;top:395px;" width="16" height="16" viewBox="0 0 16 16" fill="none"><path d="M3.1 6.5 V3 A1.9 1.9 0 0 1 5 1.1 H10.3 L14.6 5.3 V12.9 A1.9 1.9 0 0 1 12.7 14.8 H5 A1.9 1.9 0 0 1 3.1 12.9 V12" stroke="#2a7bd0" stroke-width="1.15" stroke-linejoin="round"/><path d="M10.3 1.1 V3.4 A1.6 1.6 0 0 0 11.9 5 H14.6" stroke="#2a7bd0" stroke-width="1"/><rect x="1" y="7" width="8.8" height="5.4" rx="1.3" fill="#2a7bd0"/><path d="M2.5 11 V8.4 H3.6 A0.7 0.7 0 0 1 3.6 9.8 H2.5 M4.9 8.4 V11 H5.5 A1.1 1.3 0 0 0 5.5 8.4 Z M7.3 11 V8.4 H8.6 M7.3 9.6 H8.3" stroke="#dff0ff" stroke-width="0.55" fill="none"/></svg>
<svg style="position:absolute;left:1874px;top:399px;" width="14" height="10" viewBox="0 0 14 10" fill="none"><path d="M1.5 1.8 L7 7.2 L12.5 1.8" stroke="#2a7bd0" stroke-width="1.4" fill="none"/></svg>
<div style="position:absolute;left:14px;top:450px;width:1888px;height:1px;background:#d5dbe2"></div>
<div style="position:absolute;left:30px;top:426px;width:13.5px;height:13.5px;border:1.3px solid #3f4347;border-radius:3.5px;background:#fff"></div>
<svg style="position:absolute;left:82px;top:423px;" width="17" height="25" viewBox="0 0 17 25" fill="none"><path d="M8 1 C4.6 1 2 3.4 2 7.8 C2 10.5 2.8 12.5 4.3 13.6 L4.3 17.8 C3.4 19.4 1.4 20.6 0.9 21.6 C3.5 23.2 12.2 23.4 15.9 21.4 C15.2 20.4 13.3 19.4 12.4 17.8 L12.1 13.4 C13.4 12.4 14.1 10.4 14.1 7.8 C14.1 3.4 11.6 1 8 1 Z" fill="#333537"/></svg>
<svg style="position:absolute;left:1545.5px;top:428px;" width="15" height="14" viewBox="0 0 15 14" fill="none"><path d="M3 1.2 H12 A2 2 0 0 1 14 3.2 V8.3 A2 2 0 0 1 12 10.3 H6.3 L3 12.8 V10.3 A2 2 0 0 1 1 8.3 V3.2 A2 2 0 0 1 3 1.2 Z" stroke="#c9ccd0" stroke-width="1.2" stroke-linejoin="round"/><path d="M3.8 4.3 H11" stroke="#c9ccd0" stroke-width="1.1"/><path d="M3.8 6.6 H7" stroke="#c9ccd0" stroke-width="1.1"/></svg>
<svg style="position:absolute;left:1566.5px;top:428px;" width="15" height="14" viewBox="0 0 15 14" fill="none"><path d="M9.5 12.5 H3 A1.6 1.6 0 0 1 1.4 10.9 V3.9 A1.6 1.6 0 0 1 3 2.3 H11.5 A1.6 1.6 0 0 1 13.1 3.9 V5.5" stroke="#c9ccd0" stroke-width="1.3"/><path d="M4.2 1 V3.5 M10.3 1 V3.5" stroke="#c9ccd0" stroke-width="1.2"/><path d="M3.8 5.6 H10.5 M3.8 8.5 H4.6" stroke="#c9ccd0" stroke-width="1.1"/><path d="M7 10 H13.2 M11.2 8 L13.4 10 L11.2 12" stroke="#c9ccd0" stroke-width="1.2" fill="none"/></svg>
<svg style="position:absolute;left:1586.5px;top:428.5px;" width="17" height="14" viewBox="0 0 17 14" fill="none"><circle cx="6.2" cy="4.3" r="3.2" stroke="#c9ccd0" stroke-width="1.05"/><path d="M1 12.5 C2 9.3 4 8.4 6 8.4 C8 8.4 9.8 9.3 10.6 11" stroke="#c9ccd0" stroke-width="1.1"/><circle cx="12.2" cy="6.6" r="1.8" stroke="#c9ccd0" stroke-width="1.1"/><path d="M10.4 10.4 C11.5 9.9 13.2 9.9 14.4 11.4 L15.6 12.5" stroke="#c9ccd0" stroke-width="1.1"/></svg>
<svg style="position:absolute;left:1608.5px;top:428px;" width="15" height="14" viewBox="0 0 15 14" fill="none"><path d="M1.6 3.8 C2.5 2.3 4.6 1 7.5 1 C10.4 1 12.5 2.3 13.4 3.8 V4.6 H1.6 Z" stroke="#c9ccd0" stroke-width="1.1" stroke-linejoin="round"/><path d="M3.2 5.4 V10 M6 5.4 V10 M9 5.4 V10 M11.8 5.4 V10" stroke="#c9ccd0" stroke-width="1.3"/><rect x="1.5" y="10.6" width="12" height="2.1" rx="0.8" stroke="#c9ccd0" stroke-width="1.1"/></svg>
<svg style="position:absolute;left:1630.5px;top:426.5px;" width="13" height="16" viewBox="0 0 13 16" fill="none"><path d="M1.4 13.8 V2.8 A1.6 1.6 0 0 1 3 1.2 H10 A1.6 1.6 0 0 1 11.6 2.8 V13.8 L10.3 12.6 L9 14.2 L7.6 12.6 L6.3 14.2 L5 12.6 L3.6 14.2 L2.5 12.6 Z" stroke="#c9ccd0" stroke-width="1.1" stroke-linejoin="round"/><path d="M9.4 3.7 C8.2 2.9 7.1 3.5 7.2 4.4 C7.4 5.3 9.6 5.4 9.5 6.5 C9.4 7.5 8 7.7 7 7" stroke="#c9ccd0" stroke-width="0.9"/><path d="M8.3 2.6 V8" stroke="#c9ccd0" stroke-width="0.7"/><path d="M3.1 9.2 H4.8 M3.1 10.6 H9.6" stroke="#c9ccd0" stroke-width="0.9"/></svg>
<svg style="position:absolute;left:1650.5px;top:428.5px;" width="15" height="13" viewBox="0 0 15 13" fill="none"><rect x="1" y="1" width="13" height="11" rx="1.6" stroke="#c9ccd0" stroke-width="1.1"/><path d="M3.2 3.4 L7.5 6.6 L11.8 3.4" stroke="#c9ccd0" stroke-width="1.1" fill="none"/></svg>
<svg style="position:absolute;left:1691px;top:428px;" width="14" height="16" viewBox="0 0 14 16" fill="none"><path d="M9 1.1 H3 A2 2 0 0 0 1 3.1 V12.9 A2 2 0 0 0 3 14.9 H10.5 A2 2 0 0 0 12.5 12.9 V4.6 Z" stroke="#1f7bd8" stroke-width="1.4" stroke-linejoin="round"/><circle cx="10.6" cy="3.2" r="1.1" fill="#fff" stroke="#1f7bd8" stroke-width="0.7"/><circle cx="6.3" cy="9.2" r="3.1" fill="#1f7bd8"/><path d="M6.2 7.8 V9.7 L7.4 10.6" stroke="#fff" stroke-width="0.9"/></svg>
<div style="position:absolute;left:1805px;top:423px;width:87px;height:22px;border:1px solid #2f78c6;border-radius:5px;background:#fff"></div>
<div style="position:absolute;left:1868px;top:423px;width:1px;height:24px;background:#2f78c6"></div>
<svg style="position:absolute;left:1810px;top:427px;" width="16" height="16" viewBox="0 0 16 16" fill="none"><path d="M3.1 6.5 V3 A1.9 1.9 0 0 1 5 1.1 H10.3 L14.6 5.3 V12.9 A1.9 1.9 0 0 1 12.7 14.8 H5 A1.9 1.9 0 0 1 3.1 12.9 V12" stroke="#2a7bd0" stroke-width="1.15" stroke-linejoin="round"/><path d="M10.3 1.1 V3.4 A1.6 1.6 0 0 0 11.9 5 H14.6" stroke="#2a7bd0" stroke-width="1"/><rect x="1" y="7" width="8.8" height="5.4" rx="1.3" fill="#2a7bd0"/><path d="M2.5 11 V8.4 H3.6 A0.7 0.7 0 0 1 3.6 9.8 H2.5 M4.9 8.4 V11 H5.5 A1.1 1.3 0 0 0 5.5 8.4 Z M7.3 11 V8.4 H8.6 M7.3 9.6 H8.3" stroke="#dff0ff" stroke-width="0.55" fill="none"/></svg>
<svg style="position:absolute;left:1874px;top:431px;" width="14" height="10" viewBox="0 0 14 10" fill="none"><path d="M1.5 1.8 L7 7.2 L12.5 1.8" stroke="#2a7bd0" stroke-width="1.4" fill="none"/></svg>
<div style="position:absolute;left:14px;top:482px;width:1888px;height:1px;background:#d5dbe2"></div>
<div style="position:absolute;left:30px;top:458px;width:13.5px;height:13.5px;border:1.3px solid #3f4347;border-radius:3.5px;background:#fff"></div>
<svg style="position:absolute;left:82px;top:455px;" width="17" height="25" viewBox="0 0 17 25" fill="none"><path d="M8 1 C4.6 1 2 3.4 2 7.8 C2 10.5 2.8 12.5 4.3 13.6 L4.3 17.8 C3.4 19.4 1.4 20.6 0.9 21.6 C3.5 23.2 12.2 23.4 15.9 21.4 C15.2 20.4 13.3 19.4 12.4 17.8 L12.1 13.4 C13.4 12.4 14.1 10.4 14.1 7.8 C14.1 3.4 11.6 1 8 1 Z" fill="#333537"/></svg>
<svg style="position:absolute;left:1545.5px;top:460px;" width="15" height="14" viewBox="0 0 15 14" fill="none"><path d="M3 1.2 H12 A2 2 0 0 1 14 3.2 V8.3 A2 2 0 0 1 12 10.3 H6.3 L3 12.8 V10.3 A2 2 0 0 1 1 8.3 V3.2 A2 2 0 0 1 3 1.2 Z" stroke="#c9ccd0" stroke-width="1.2" stroke-linejoin="round"/><path d="M3.8 4.3 H11" stroke="#c9ccd0" stroke-width="1.1"/><path d="M3.8 6.6 H7" stroke="#c9ccd0" stroke-width="1.1"/></svg>
<svg style="position:absolute;left:1566.5px;top:460px;" width="15" height="14" viewBox="0 0 15 14" fill="none"><path d="M9.5 12.5 H3 A1.6 1.6 0 0 1 1.4 10.9 V3.9 A1.6 1.6 0 0 1 3 2.3 H11.5 A1.6 1.6 0 0 1 13.1 3.9 V5.5" stroke="#c9ccd0" stroke-width="1.3"/><path d="M4.2 1 V3.5 M10.3 1 V3.5" stroke="#c9ccd0" stroke-width="1.2"/><path d="M3.8 5.6 H10.5 M3.8 8.5 H4.6" stroke="#c9ccd0" stroke-width="1.1"/><path d="M7 10 H13.2 M11.2 8 L13.4 10 L11.2 12" stroke="#c9ccd0" stroke-width="1.2" fill="none"/></svg>
<svg style="position:absolute;left:1586.5px;top:460.5px;" width="17" height="14" viewBox="0 0 17 14" fill="none"><circle cx="6.2" cy="4.3" r="3.2" stroke="#c9ccd0" stroke-width="1.05"/><path d="M1 12.5 C2 9.3 4 8.4 6 8.4 C8 8.4 9.8 9.3 10.6 11" stroke="#c9ccd0" stroke-width="1.1"/><circle cx="12.2" cy="6.6" r="1.8" stroke="#c9ccd0" stroke-width="1.1"/><path d="M10.4 10.4 C11.5 9.9 13.2 9.9 14.4 11.4 L15.6 12.5" stroke="#c9ccd0" stroke-width="1.1"/></svg>
<svg style="position:absolute;left:1608.5px;top:460px;" width="15" height="14" viewBox="0 0 15 14" fill="none"><path d="M1.6 3.8 C2.5 2.3 4.6 1 7.5 1 C10.4 1 12.5 2.3 13.4 3.8 V4.6 H1.6 Z" stroke="#c9ccd0" stroke-width="1.1" stroke-linejoin="round"/><path d="M3.2 5.4 V10 M6 5.4 V10 M9 5.4 V10 M11.8 5.4 V10" stroke="#c9ccd0" stroke-width="1.3"/><rect x="1.5" y="10.6" width="12" height="2.1" rx="0.8" stroke="#c9ccd0" stroke-width="1.1"/></svg>
<svg style="position:absolute;left:1630.5px;top:458.5px;" width="13" height="16" viewBox="0 0 13 16" fill="none"><path d="M1.4 13.8 V2.8 A1.6 1.6 0 0 1 3 1.2 H10 A1.6 1.6 0 0 1 11.6 2.8 V13.8 L10.3 12.6 L9 14.2 L7.6 12.6 L6.3 14.2 L5 12.6 L3.6 14.2 L2.5 12.6 Z" stroke="#c9ccd0" stroke-width="1.1" stroke-linejoin="round"/><path d="M9.4 3.7 C8.2 2.9 7.1 3.5 7.2 4.4 C7.4 5.3 9.6 5.4 9.5 6.5 C9.4 7.5 8 7.7 7 7" stroke="#c9ccd0" stroke-width="0.9"/><path d="M8.3 2.6 V8" stroke="#c9ccd0" stroke-width="0.7"/><path d="M3.1 9.2 H4.8 M3.1 10.6 H9.6" stroke="#c9ccd0" stroke-width="0.9"/></svg>
<svg style="position:absolute;left:1650.5px;top:460.5px;" width="15" height="13" viewBox="0 0 15 13" fill="none"><rect x="1" y="1" width="13" height="11" rx="1.6" stroke="#c9ccd0" stroke-width="1.1"/><path d="M3.2 3.4 L7.5 6.6 L11.8 3.4" stroke="#c9ccd0" stroke-width="1.1" fill="none"/></svg>
<svg style="position:absolute;left:1691px;top:460px;" width="14" height="16" viewBox="0 0 14 16" fill="none"><path d="M9 1.1 H3 A2 2 0 0 0 1 3.1 V12.9 A2 2 0 0 0 3 14.9 H10.5 A2 2 0 0 0 12.5 12.9 V4.6 Z" stroke="#1f7bd8" stroke-width="1.4" stroke-linejoin="round"/><circle cx="10.6" cy="3.2" r="1.1" fill="#fff" stroke="#1f7bd8" stroke-width="0.7"/><circle cx="6.3" cy="9.2" r="3.1" fill="#1f7bd8"/><path d="M6.2 7.8 V9.7 L7.4 10.6" stroke="#fff" stroke-width="0.9"/></svg>
<div style="position:absolute;left:1805px;top:455px;width:87px;height:22px;border:1px solid #2f78c6;border-radius:5px;background:#fff"></div>
<div style="position:absolute;left:1868px;top:455px;width:1px;height:24px;background:#2f78c6"></div>
<svg style="position:absolute;left:1810px;top:459px;" width="16" height="16" viewBox="0 0 16 16" fill="none"><path d="M3.1 6.5 V3 A1.9 1.9 0 0 1 5 1.1 H10.3 L14.6 5.3 V12.9 A1.9 1.9 0 0 1 12.7 14.8 H5 A1.9 1.9 0 0 1 3.1 12.9 V12" stroke="#2a7bd0" stroke-width="1.15" stroke-linejoin="round"/><path d="M10.3 1.1 V3.4 A1.6 1.6 0 0 0 11.9 5 H14.6" stroke="#2a7bd0" stroke-width="1"/><rect x="1" y="7" width="8.8" height="5.4" rx="1.3" fill="#2a7bd0"/><path d="M2.5 11 V8.4 H3.6 A0.7 0.7 0 0 1 3.6 9.8 H2.5 M4.9 8.4 V11 H5.5 A1.1 1.3 0 0 0 5.5 8.4 Z M7.3 11 V8.4 H8.6 M7.3 9.6 H8.3" stroke="#dff0ff" stroke-width="0.55" fill="none"/></svg>
<svg style="position:absolute;left:1874px;top:463px;" width="14" height="10" viewBox="0 0 14 10" fill="none"><path d="M1.5 1.8 L7 7.2 L12.5 1.8" stroke="#2a7bd0" stroke-width="1.4" fill="none"/></svg>
<div style="position:absolute;left:14px;top:514px;width:1888px;height:1px;background:#d5dbe2"></div>
<div style="position:absolute;left:30px;top:490px;width:13.5px;height:13.5px;border:1.3px solid #3f4347;border-radius:3.5px;background:#fff"></div>
<svg style="position:absolute;left:82px;top:487px;" width="17" height="25" viewBox="0 0 17 25" fill="none"><path d="M8 1 C4.6 1 2 3.4 2 7.8 C2 10.5 2.8 12.5 4.3 13.6 L4.3 17.8 C3.4 19.4 1.4 20.6 0.9 21.6 C3.5 23.2 12.2 23.4 15.9 21.4 C15.2 20.4 13.3 19.4 12.4 17.8 L12.1 13.4 C13.4 12.4 14.1 10.4 14.1 7.8 C14.1 3.4 11.6 1 8 1 Z" fill="#333537"/></svg>
<svg style="position:absolute;left:1545.5px;top:492px;" width="15" height="14" viewBox="0 0 15 14" fill="none"><path d="M3 1.2 H12 A2 2 0 0 1 14 3.2 V8.3 A2 2 0 0 1 12 10.3 H6.3 L3 12.8 V10.3 A2 2 0 0 1 1 8.3 V3.2 A2 2 0 0 1 3 1.2 Z" stroke="#c9ccd0" stroke-width="1.2" stroke-linejoin="round"/><path d="M3.8 4.3 H11" stroke="#c9ccd0" stroke-width="1.1"/><path d="M3.8 6.6 H7" stroke="#c9ccd0" stroke-width="1.1"/></svg>
<svg style="position:absolute;left:1566.5px;top:492px;" width="15" height="14" viewBox="0 0 15 14" fill="none"><path d="M9.5 12.5 H3 A1.6 1.6 0 0 1 1.4 10.9 V3.9 A1.6 1.6 0 0 1 3 2.3 H11.5 A1.6 1.6 0 0 1 13.1 3.9 V5.5" stroke="#c9ccd0" stroke-width="1.3"/><path d="M4.2 1 V3.5 M10.3 1 V3.5" stroke="#c9ccd0" stroke-width="1.2"/><path d="M3.8 5.6 H10.5 M3.8 8.5 H4.6" stroke="#c9ccd0" stroke-width="1.1"/><path d="M7 10 H13.2 M11.2 8 L13.4 10 L11.2 12" stroke="#c9ccd0" stroke-width="1.2" fill="none"/></svg>
<svg style="position:absolute;left:1586.5px;top:492.5px;" width="17" height="14" viewBox="0 0 17 14" fill="none"><circle cx="6.2" cy="4.3" r="3.2" stroke="#c9ccd0" stroke-width="1.05"/><path d="M1 12.5 C2 9.3 4 8.4 6 8.4 C8 8.4 9.8 9.3 10.6 11" stroke="#c9ccd0" stroke-width="1.1"/><circle cx="12.2" cy="6.6" r="1.8" stroke="#c9ccd0" stroke-width="1.1"/><path d="M10.4 10.4 C11.5 9.9 13.2 9.9 14.4 11.4 L15.6 12.5" stroke="#c9ccd0" stroke-width="1.1"/></svg>
<svg style="position:absolute;left:1608.5px;top:492px;" width="15" height="14" viewBox="0 0 15 14" fill="none"><path d="M1.6 3.8 C2.5 2.3 4.6 1 7.5 1 C10.4 1 12.5 2.3 13.4 3.8 V4.6 H1.6 Z" stroke="#c9ccd0" stroke-width="1.1" stroke-linejoin="round"/><path d="M3.2 5.4 V10 M6 5.4 V10 M9 5.4 V10 M11.8 5.4 V10" stroke="#c9ccd0" stroke-width="1.3"/><rect x="1.5" y="10.6" width="12" height="2.1" rx="0.8" stroke="#c9ccd0" stroke-width="1.1"/></svg>
<svg style="position:absolute;left:1630.5px;top:490.5px;" width="13" height="16" viewBox="0 0 13 16" fill="none"><path d="M1.4 13.8 V2.8 A1.6 1.6 0 0 1 3 1.2 H10 A1.6 1.6 0 0 1 11.6 2.8 V13.8 L10.3 12.6 L9 14.2 L7.6 12.6 L6.3 14.2 L5 12.6 L3.6 14.2 L2.5 12.6 Z" stroke="#c9ccd0" stroke-width="1.1" stroke-linejoin="round"/><path d="M9.4 3.7 C8.2 2.9 7.1 3.5 7.2 4.4 C7.4 5.3 9.6 5.4 9.5 6.5 C9.4 7.5 8 7.7 7 7" stroke="#c9ccd0" stroke-width="0.9"/><path d="M8.3 2.6 V8" stroke="#c9ccd0" stroke-width="0.7"/><path d="M3.1 9.2 H4.8 M3.1 10.6 H9.6" stroke="#c9ccd0" stroke-width="0.9"/></svg>
<svg style="position:absolute;left:1650.5px;top:492.5px;" width="15" height="13" viewBox="0 0 15 13" fill="none"><rect x="1" y="1" width="13" height="11" rx="1.6" stroke="#c9ccd0" stroke-width="1.1"/><path d="M3.2 3.4 L7.5 6.6 L11.8 3.4" stroke="#c9ccd0" stroke-width="1.1" fill="none"/></svg>
<svg style="position:absolute;left:1691px;top:492px;" width="14" height="16" viewBox="0 0 14 16" fill="none"><path d="M9 1.1 H3 A2 2 0 0 0 1 3.1 V12.9 A2 2 0 0 0 3 14.9 H10.5 A2 2 0 0 0 12.5 12.9 V4.6 Z" stroke="#1f7bd8" stroke-width="1.4" stroke-linejoin="round"/><circle cx="10.6" cy="3.2" r="1.1" fill="#fff" stroke="#1f7bd8" stroke-width="0.7"/><circle cx="6.3" cy="9.2" r="3.1" fill="#1f7bd8"/><path d="M6.2 7.8 V9.7 L7.4 10.6" stroke="#fff" stroke-width="0.9"/></svg>
<div style="position:absolute;left:1805px;top:487px;width:87px;height:22px;border:1px solid #2f78c6;border-radius:5px;background:#fff"></div>
<div style="position:absolute;left:1868px;top:487px;width:1px;height:24px;background:#2f78c6"></div>
<svg style="position:absolute;left:1810px;top:491px;" width="16" height="16" viewBox="0 0 16 16" fill="none"><path d="M3.1 6.5 V3 A1.9 1.9 0 0 1 5 1.1 H10.3 L14.6 5.3 V12.9 A1.9 1.9 0 0 1 12.7 14.8 H5 A1.9 1.9 0 0 1 3.1 12.9 V12" stroke="#2a7bd0" stroke-width="1.15" stroke-linejoin="round"/><path d="M10.3 1.1 V3.4 A1.6 1.6 0 0 0 11.9 5 H14.6" stroke="#2a7bd0" stroke-width="1"/><rect x="1" y="7" width="8.8" height="5.4" rx="1.3" fill="#2a7bd0"/><path d="M2.5 11 V8.4 H3.6 A0.7 0.7 0 0 1 3.6 9.8 H2.5 M4.9 8.4 V11 H5.5 A1.1 1.3 0 0 0 5.5 8.4 Z M7.3 11 V8.4 H8.6 M7.3 9.6 H8.3" stroke="#dff0ff" stroke-width="0.55" fill="none"/></svg>
<svg style="position:absolute;left:1874px;top:495px;" width="14" height="10" viewBox="0 0 14 10" fill="none"><path d="M1.5 1.8 L7 7.2 L12.5 1.8" stroke="#2a7bd0" stroke-width="1.4" fill="none"/></svg>
<div style="position:absolute;left:14px;top:546px;width:1888px;height:1px;background:#d5dbe2"></div>
<div style="position:absolute;left:30px;top:522px;width:13.5px;height:13.5px;border:1.3px solid #3f4347;border-radius:3.5px;background:#fff"></div>
<svg style="position:absolute;left:82px;top:519px;" width="17" height="25" viewBox="0 0 17 25" fill="none"><path d="M8 1 C4.6 1 2 3.4 2 7.8 C2 10.5 2.8 12.5 4.3 13.6 L4.3 17.8 C3.4 19.4 1.4 20.6 0.9 21.6 C3.5 23.2 12.2 23.4 15.9 21.4 C15.2 20.4 13.3 19.4 12.4 17.8 L12.1 13.4 C13.4 12.4 14.1 10.4 14.1 7.8 C14.1 3.4 11.6 1 8 1 Z" fill="#333537"/></svg>
<svg style="position:absolute;left:1545.5px;top:524px;" width="15" height="14" viewBox="0 0 15 14" fill="none"><path d="M3 1.2 H12 A2 2 0 0 1 14 3.2 V8.3 A2 2 0 0 1 12 10.3 H6.3 L3 12.8 V10.3 A2 2 0 0 1 1 8.3 V3.2 A2 2 0 0 1 3 1.2 Z" stroke="#c9ccd0" stroke-width="1.2" stroke-linejoin="round"/><path d="M3.8 4.3 H11" stroke="#c9ccd0" stroke-width="1.1"/><path d="M3.8 6.6 H7" stroke="#c9ccd0" stroke-width="1.1"/></svg>
<svg style="position:absolute;left:1566.5px;top:524px;" width="15" height="14" viewBox="0 0 15 14" fill="none"><path d="M9.5 12.5 H3 A1.6 1.6 0 0 1 1.4 10.9 V3.9 A1.6 1.6 0 0 1 3 2.3 H11.5 A1.6 1.6 0 0 1 13.1 3.9 V5.5" stroke="#c9ccd0" stroke-width="1.3"/><path d="M4.2 1 V3.5 M10.3 1 V3.5" stroke="#c9ccd0" stroke-width="1.2"/><path d="M3.8 5.6 H10.5 M3.8 8.5 H4.6" stroke="#c9ccd0" stroke-width="1.1"/><path d="M7 10 H13.2 M11.2 8 L13.4 10 L11.2 12" stroke="#c9ccd0" stroke-width="1.2" fill="none"/></svg>
<svg style="position:absolute;left:1586.5px;top:524.5px;" width="17" height="14" viewBox="0 0 17 14" fill="none"><circle cx="6.2" cy="4.3" r="3.2" stroke="#c9ccd0" stroke-width="1.05"/><path d="M1 12.5 C2 9.3 4 8.4 6 8.4 C8 8.4 9.8 9.3 10.6 11" stroke="#c9ccd0" stroke-width="1.1"/><circle cx="12.2" cy="6.6" r="1.8" stroke="#c9ccd0" stroke-width="1.1"/><path d="M10.4 10.4 C11.5 9.9 13.2 9.9 14.4 11.4 L15.6 12.5" stroke="#c9ccd0" stroke-width="1.1"/></svg>
<svg style="position:absolute;left:1608.5px;top:524px;" width="15" height="14" viewBox="0 0 15 14" fill="none"><path d="M1.6 3.8 C2.5 2.3 4.6 1 7.5 1 C10.4 1 12.5 2.3 13.4 3.8 V4.6 H1.6 Z" stroke="#c9ccd0" stroke-width="1.1" stroke-linejoin="round"/><path d="M3.2 5.4 V10 M6 5.4 V10 M9 5.4 V10 M11.8 5.4 V10" stroke="#c9ccd0" stroke-width="1.3"/><rect x="1.5" y="10.6" width="12" height="2.1" rx="0.8" stroke="#c9ccd0" stroke-width="1.1"/></svg>
<svg style="position:absolute;left:1630.5px;top:522.5px;" width="13" height="16" viewBox="0 0 13 16" fill="none"><path d="M1.4 13.8 V2.8 A1.6 1.6 0 0 1 3 1.2 H10 A1.6 1.6 0 0 1 11.6 2.8 V13.8 L10.3 12.6 L9 14.2 L7.6 12.6 L6.3 14.2 L5 12.6 L3.6 14.2 L2.5 12.6 Z" stroke="#c9ccd0" stroke-width="1.1" stroke-linejoin="round"/><path d="M9.4 3.7 C8.2 2.9 7.1 3.5 7.2 4.4 C7.4 5.3 9.6 5.4 9.5 6.5 C9.4 7.5 8 7.7 7 7" stroke="#c9ccd0" stroke-width="0.9"/><path d="M8.3 2.6 V8" stroke="#c9ccd0" stroke-width="0.7"/><path d="M3.1 9.2 H4.8 M3.1 10.6 H9.6" stroke="#c9ccd0" stroke-width="0.9"/></svg>
<svg style="position:absolute;left:1650.5px;top:524.5px;" width="15" height="13" viewBox="0 0 15 13" fill="none"><rect x="1" y="1" width="13" height="11" rx="1.6" stroke="#c9ccd0" stroke-width="1.1"/><path d="M3.2 3.4 L7.5 6.6 L11.8 3.4" stroke="#c9ccd0" stroke-width="1.1" fill="none"/></svg>
<svg style="position:absolute;left:1691px;top:524px;" width="14" height="16" viewBox="0 0 14 16" fill="none"><path d="M9 1.1 H3 A2 2 0 0 0 1 3.1 V12.9 A2 2 0 0 0 3 14.9 H10.5 A2 2 0 0 0 12.5 12.9 V4.6 Z" stroke="#1f7bd8" stroke-width="1.4" stroke-linejoin="round"/><circle cx="10.6" cy="3.2" r="1.1" fill="#fff" stroke="#1f7bd8" stroke-width="0.7"/><circle cx="6.3" cy="9.2" r="3.1" fill="#1f7bd8"/><path d="M6.2 7.8 V9.7 L7.4 10.6" stroke="#fff" stroke-width="0.9"/></svg>
<div style="position:absolute;left:1805px;top:519px;width:87px;height:22px;border:1px solid #2f78c6;border-radius:5px;background:#fff"></div>
<div style="position:absolute;left:1868px;top:519px;width:1px;height:24px;background:#2f78c6"></div>
<svg style="position:absolute;left:1810px;top:523px;" width="16" height="16" viewBox="0 0 16 16" fill="none"><path d="M3.1 6.5 V3 A1.9 1.9 0 0 1 5 1.1 H10.3 L14.6 5.3 V12.9 A1.9 1.9 0 0 1 12.7 14.8 H5 A1.9 1.9 0 0 1 3.1 12.9 V12" stroke="#2a7bd0" stroke-width="1.15" stroke-linejoin="round"/><path d="M10.3 1.1 V3.4 A1.6 1.6 0 0 0 11.9 5 H14.6" stroke="#2a7bd0" stroke-width="1"/><rect x="1" y="7" width="8.8" height="5.4" rx="1.3" fill="#2a7bd0"/><path d="M2.5 11 V8.4 H3.6 A0.7 0.7 0 0 1 3.6 9.8 H2.5 M4.9 8.4 V11 H5.5 A1.1 1.3 0 0 0 5.5 8.4 Z M7.3 11 V8.4 H8.6 M7.3 9.6 H8.3" stroke="#dff0ff" stroke-width="0.55" fill="none"/></svg>
<svg style="position:absolute;left:1874px;top:527px;" width="14" height="10" viewBox="0 0 14 10" fill="none"><path d="M1.5 1.8 L7 7.2 L12.5 1.8" stroke="#2a7bd0" stroke-width="1.4" fill="none"/></svg>
<div style="position:absolute;left:14px;top:578px;width:1888px;height:1px;background:#d5dbe2"></div>
<div style="position:absolute;left:30px;top:554px;width:13.5px;height:13.5px;border:1.3px solid #3f4347;border-radius:3.5px;background:#fff"></div>
<svg style="position:absolute;left:82px;top:551px;" width="17" height="25" viewBox="0 0 17 25" fill="none"><path d="M8 1 C4.6 1 2 3.4 2 7.8 C2 10.5 2.8 12.5 4.3 13.6 L4.3 17.8 C3.4 19.4 1.4 20.6 0.9 21.6 C3.5 23.2 12.2 23.4 15.9 21.4 C15.2 20.4 13.3 19.4 12.4 17.8 L12.1 13.4 C13.4 12.4 14.1 10.4 14.1 7.8 C14.1 3.4 11.6 1 8 1 Z" fill="#333537"/></svg>
<svg style="position:absolute;left:1545.5px;top:556px;" width="15" height="14" viewBox="0 0 15 14" fill="none"><path d="M3 1.2 H12 A2 2 0 0 1 14 3.2 V8.3 A2 2 0 0 1 12 10.3 H6.3 L3 12.8 V10.3 A2 2 0 0 1 1 8.3 V3.2 A2 2 0 0 1 3 1.2 Z" stroke="#c9ccd0" stroke-width="1.2" stroke-linejoin="round"/><path d="M3.8 4.3 H11" stroke="#c9ccd0" stroke-width="1.1"/><path d="M3.8 6.6 H7" stroke="#c9ccd0" stroke-width="1.1"/></svg>
<svg style="position:absolute;left:1566.5px;top:556px;" width="15" height="14" viewBox="0 0 15 14" fill="none"><path d="M9.5 12.5 H3 A1.6 1.6 0 0 1 1.4 10.9 V3.9 A1.6 1.6 0 0 1 3 2.3 H11.5 A1.6 1.6 0 0 1 13.1 3.9 V5.5" stroke="#c9ccd0" stroke-width="1.3"/><path d="M4.2 1 V3.5 M10.3 1 V3.5" stroke="#c9ccd0" stroke-width="1.2"/><path d="M3.8 5.6 H10.5 M3.8 8.5 H4.6" stroke="#c9ccd0" stroke-width="1.1"/><path d="M7 10 H13.2 M11.2 8 L13.4 10 L11.2 12" stroke="#c9ccd0" stroke-width="1.2" fill="none"/></svg>
<svg style="position:absolute;left:1586.5px;top:556.5px;" width="17" height="14" viewBox="0 0 17 14" fill="none"><circle cx="6.2" cy="4.3" r="3.2" stroke="#c9ccd0" stroke-width="1.05"/><path d="M1 12.5 C2 9.3 4 8.4 6 8.4 C8 8.4 9.8 9.3 10.6 11" stroke="#c9ccd0" stroke-width="1.1"/><circle cx="12.2" cy="6.6" r="1.8" stroke="#c9ccd0" stroke-width="1.1"/><path d="M10.4 10.4 C11.5 9.9 13.2 9.9 14.4 11.4 L15.6 12.5" stroke="#c9ccd0" stroke-width="1.1"/></svg>
<svg style="position:absolute;left:1608.5px;top:556px;" width="15" height="14" viewBox="0 0 15 14" fill="none"><path d="M1.6 3.8 C2.5 2.3 4.6 1 7.5 1 C10.4 1 12.5 2.3 13.4 3.8 V4.6 H1.6 Z" stroke="#c9ccd0" stroke-width="1.1" stroke-linejoin="round"/><path d="M3.2 5.4 V10 M6 5.4 V10 M9 5.4 V10 M11.8 5.4 V10" stroke="#c9ccd0" stroke-width="1.3"/><rect x="1.5" y="10.6" width="12" height="2.1" rx="0.8" stroke="#c9ccd0" stroke-width="1.1"/></svg>
<svg style="position:absolute;left:1630.5px;top:554.5px;" width="13" height="16" viewBox="0 0 13 16" fill="none"><path d="M1.4 13.8 V2.8 A1.6 1.6 0 0 1 3 1.2 H10 A1.6 1.6 0 0 1 11.6 2.8 V13.8 L10.3 12.6 L9 14.2 L7.6 12.6 L6.3 14.2 L5 12.6 L3.6 14.2 L2.5 12.6 Z" stroke="#c9ccd0" stroke-width="1.1" stroke-linejoin="round"/><path d="M9.4 3.7 C8.2 2.9 7.1 3.5 7.2 4.4 C7.4 5.3 9.6 5.4 9.5 6.5 C9.4 7.5 8 7.7 7 7" stroke="#c9ccd0" stroke-width="0.9"/><path d="M8.3 2.6 V8" stroke="#c9ccd0" stroke-width="0.7"/><path d="M3.1 9.2 H4.8 M3.1 10.6 H9.6" stroke="#c9ccd0" stroke-width="0.9"/></svg>
<svg style="position:absolute;left:1650.5px;top:556.5px;" width="15" height="13" viewBox="0 0 15 13" fill="none"><rect x="1" y="1" width="13" height="11" rx="1.6" stroke="#c9ccd0" stroke-width="1.1"/><path d="M3.2 3.4 L7.5 6.6 L11.8 3.4" stroke="#c9ccd0" stroke-width="1.1" fill="none"/></svg>
<svg style="position:absolute;left:1691px;top:556px;" width="14" height="16" viewBox="0 0 14 16" fill="none"><path d="M9 1.1 H3 A2 2 0 0 0 1 3.1 V12.9 A2 2 0 0 0 3 14.9 H10.5 A2 2 0 0 0 12.5 12.9 V4.6 Z" stroke="#1f7bd8" stroke-width="1.4" stroke-linejoin="round"/><circle cx="10.6" cy="3.2" r="1.1" fill="#fff" stroke="#1f7bd8" stroke-width="0.7"/><circle cx="6.3" cy="9.2" r="3.1" fill="#1f7bd8"/><path d="M6.2 7.8 V9.7 L7.4 10.6" stroke="#fff" stroke-width="0.9"/></svg>
<div style="position:absolute;left:1805px;top:551px;width:87px;height:22px;border:1px solid #2f78c6;border-radius:5px;background:#fff"></div>
<div style="position:absolute;left:1868px;top:551px;width:1px;height:24px;background:#2f78c6"></div>
<svg style="position:absolute;left:1810px;top:555px;" width="16" height="16" viewBox="0 0 16 16" fill="none"><path d="M3.1 6.5 V3 A1.9 1.9 0 0 1 5 1.1 H10.3 L14.6 5.3 V12.9 A1.9 1.9 0 0 1 12.7 14.8 H5 A1.9 1.9 0 0 1 3.1 12.9 V12" stroke="#2a7bd0" stroke-width="1.15" stroke-linejoin="round"/><path d="M10.3 1.1 V3.4 A1.6 1.6 0 0 0 11.9 5 H14.6" stroke="#2a7bd0" stroke-width="1"/><rect x="1" y="7" width="8.8" height="5.4" rx="1.3" fill="#2a7bd0"/><path d="M2.5 11 V8.4 H3.6 A0.7 0.7 0 0 1 3.6 9.8 H2.5 M4.9 8.4 V11 H5.5 A1.1 1.3 0 0 0 5.5 8.4 Z M7.3 11 V8.4 H8.6 M7.3 9.6 H8.3" stroke="#dff0ff" stroke-width="0.55" fill="none"/></svg>
<svg style="position:absolute;left:1874px;top:559px;" width="14" height="10" viewBox="0 0 14 10" fill="none"><path d="M1.5 1.8 L7 7.2 L12.5 1.8" stroke="#2a7bd0" stroke-width="1.4" fill="none"/></svg>
<div style="position:absolute;left:14px;top:610px;width:1888px;height:1px;background:#d5dbe2"></div>
<div style="position:absolute;left:30px;top:586px;width:13.5px;height:13.5px;border:1.3px solid #3f4347;border-radius:3.5px;background:#fff"></div>
<svg style="position:absolute;left:82px;top:583px;" width="17" height="25" viewBox="0 0 17 25" fill="none"><path d="M8 1 C4.6 1 2 3.4 2 7.8 C2 10.5 2.8 12.5 4.3 13.6 L4.3 17.8 C3.4 19.4 1.4 20.6 0.9 21.6 C3.5 23.2 12.2 23.4 15.9 21.4 C15.2 20.4 13.3 19.4 12.4 17.8 L12.1 13.4 C13.4 12.4 14.1 10.4 14.1 7.8 C14.1 3.4 11.6 1 8 1 Z" fill="#333537"/></svg>
<svg style="position:absolute;left:1545.5px;top:588px;" width="15" height="14" viewBox="0 0 15 14" fill="none"><path d="M3 1.2 H12 A2 2 0 0 1 14 3.2 V8.3 A2 2 0 0 1 12 10.3 H6.3 L3 12.8 V10.3 A2 2 0 0 1 1 8.3 V3.2 A2 2 0 0 1 3 1.2 Z" stroke="#c9ccd0" stroke-width="1.2" stroke-linejoin="round"/><path d="M3.8 4.3 H11" stroke="#c9ccd0" stroke-width="1.1"/><path d="M3.8 6.6 H7" stroke="#c9ccd0" stroke-width="1.1"/></svg>
<svg style="position:absolute;left:1566.5px;top:588px;" width="15" height="14" viewBox="0 0 15 14" fill="none"><path d="M9.5 12.5 H3 A1.6 1.6 0 0 1 1.4 10.9 V3.9 A1.6 1.6 0 0 1 3 2.3 H11.5 A1.6 1.6 0 0 1 13.1 3.9 V5.5" stroke="#c9ccd0" stroke-width="1.3"/><path d="M4.2 1 V3.5 M10.3 1 V3.5" stroke="#c9ccd0" stroke-width="1.2"/><path d="M3.8 5.6 H10.5 M3.8 8.5 H4.6" stroke="#c9ccd0" stroke-width="1.1"/><path d="M7 10 H13.2 M11.2 8 L13.4 10 L11.2 12" stroke="#c9ccd0" stroke-width="1.2" fill="none"/></svg>
<svg style="position:absolute;left:1586.5px;top:588.5px;" width="17" height="14" viewBox="0 0 17 14" fill="none"><circle cx="6.2" cy="4.3" r="3.2" stroke="#c9ccd0" stroke-width="1.05"/><path d="M1 12.5 C2 9.3 4 8.4 6 8.4 C8 8.4 9.8 9.3 10.6 11" stroke="#c9ccd0" stroke-width="1.1"/><circle cx="12.2" cy="6.6" r="1.8" stroke="#c9ccd0" stroke-width="1.1"/><path d="M10.4 10.4 C11.5 9.9 13.2 9.9 14.4 11.4 L15.6 12.5" stroke="#c9ccd0" stroke-width="1.1"/></svg>
<svg style="position:absolute;left:1608.5px;top:588px;" width="15" height="14" viewBox="0 0 15 14" fill="none"><path d="M1.6 3.8 C2.5 2.3 4.6 1 7.5 1 C10.4 1 12.5 2.3 13.4 3.8 V4.6 H1.6 Z" stroke="#c9ccd0" stroke-width="1.1" stroke-linejoin="round"/><path d="M3.2 5.4 V10 M6 5.4 V10 M9 5.4 V10 M11.8 5.4 V10" stroke="#c9ccd0" stroke-width="1.3"/><rect x="1.5" y="10.6" width="12" height="2.1" rx="0.8" stroke="#c9ccd0" stroke-width="1.1"/></svg>
<svg style="position:absolute;left:1630.5px;top:586.5px;" width="13" height="16" viewBox="0 0 13 16" fill="none"><path d="M1.4 13.8 V2.8 A1.6 1.6 0 0 1 3 1.2 H10 A1.6 1.6 0 0 1 11.6 2.8 V13.8 L10.3 12.6 L9 14.2 L7.6 12.6 L6.3 14.2 L5 12.6 L3.6 14.2 L2.5 12.6 Z" stroke="#c9ccd0" stroke-width="1.1" stroke-linejoin="round"/><path d="M9.4 3.7 C8.2 2.9 7.1 3.5 7.2 4.4 C7.4 5.3 9.6 5.4 9.5 6.5 C9.4 7.5 8 7.7 7 7" stroke="#c9ccd0" stroke-width="0.9"/><path d="M8.3 2.6 V8" stroke="#c9ccd0" stroke-width="0.7"/><path d="M3.1 9.2 H4.8 M3.1 10.6 H9.6" stroke="#c9ccd0" stroke-width="0.9"/></svg>
<svg style="position:absolute;left:1650.5px;top:588.5px;" width="15" height="13" viewBox="0 0 15 13" fill="none"><rect x="1" y="1" width="13" height="11" rx="1.6" stroke="#c9ccd0" stroke-width="1.1"/><path d="M3.2 3.4 L7.5 6.6 L11.8 3.4" stroke="#c9ccd0" stroke-width="1.1" fill="none"/></svg>
<svg style="position:absolute;left:1691px;top:588px;" width="14" height="16" viewBox="0 0 14 16" fill="none"><path d="M9 1.1 H3 A2 2 0 0 0 1 3.1 V12.9 A2 2 0 0 0 3 14.9 H10.5 A2 2 0 0 0 12.5 12.9 V4.6 Z" stroke="#1f7bd8" stroke-width="1.4" stroke-linejoin="round"/><circle cx="10.6" cy="3.2" r="1.1" fill="#fff" stroke="#1f7bd8" stroke-width="0.7"/><circle cx="6.3" cy="9.2" r="3.1" fill="#1f7bd8"/><path d="M6.2 7.8 V9.7 L7.4 10.6" stroke="#fff" stroke-width="0.9"/></svg>
<div style="position:absolute;left:1805px;top:583px;width:87px;height:22px;border:1px solid #2f78c6;border-radius:5px;background:#fff"></div>
<div style="position:absolute;left:1868px;top:583px;width:1px;height:24px;background:#2f78c6"></div>
<svg style="position:absolute;left:1810px;top:587px;" width="16" height="16" viewBox="0 0 16 16" fill="none"><path d="M3.1 6.5 V3 A1.9 1.9 0 0 1 5 1.1 H10.3 L14.6 5.3 V12.9 A1.9 1.9 0 0 1 12.7 14.8 H5 A1.9 1.9 0 0 1 3.1 12.9 V12" stroke="#2a7bd0" stroke-width="1.15" stroke-linejoin="round"/><path d="M10.3 1.1 V3.4 A1.6 1.6 0 0 0 11.9 5 H14.6" stroke="#2a7bd0" stroke-width="1"/><rect x="1" y="7" width="8.8" height="5.4" rx="1.3" fill="#2a7bd0"/><path d="M2.5 11 V8.4 H3.6 A0.7 0.7 0 0 1 3.6 9.8 H2.5 M4.9 8.4 V11 H5.5 A1.1 1.3 0 0 0 5.5 8.4 Z M7.3 11 V8.4 H8.6 M7.3 9.6 H8.3" stroke="#dff0ff" stroke-width="0.55" fill="none"/></svg>
<svg style="position:absolute;left:1874px;top:591px;" width="14" height="10" viewBox="0 0 14 10" fill="none"><path d="M1.5 1.8 L7 7.2 L12.5 1.8" stroke="#2a7bd0" stroke-width="1.4" fill="none"/></svg>
<div style="position:absolute;left:14px;top:642px;width:1888px;height:1px;background:#d5dbe2"></div>
<div style="position:absolute;left:30px;top:618px;width:13.5px;height:13.5px;border:1.3px solid #3f4347;border-radius:3.5px;background:#fff"></div>
<svg style="position:absolute;left:82px;top:615px;" width="17" height="25" viewBox="0 0 17 25" fill="none"><path d="M8 1 C4.6 1 2 3.4 2 7.8 C2 10.5 2.8 12.5 4.3 13.6 L4.3 17.8 C3.4 19.4 1.4 20.6 0.9 21.6 C3.5 23.2 12.2 23.4 15.9 21.4 C15.2 20.4 13.3 19.4 12.4 17.8 L12.1 13.4 C13.4 12.4 14.1 10.4 14.1 7.8 C14.1 3.4 11.6 1 8 1 Z" fill="#333537"/></svg>
<svg style="position:absolute;left:1545.5px;top:620px;" width="15" height="14" viewBox="0 0 15 14" fill="none"><path d="M3 1.2 H12 A2 2 0 0 1 14 3.2 V8.3 A2 2 0 0 1 12 10.3 H6.3 L3 12.8 V10.3 A2 2 0 0 1 1 8.3 V3.2 A2 2 0 0 1 3 1.2 Z" stroke="#c9ccd0" stroke-width="1.2" stroke-linejoin="round"/><path d="M3.8 4.3 H11" stroke="#c9ccd0" stroke-width="1.1"/><path d="M3.8 6.6 H7" stroke="#c9ccd0" stroke-width="1.1"/></svg>
<svg style="position:absolute;left:1566.5px;top:620px;" width="15" height="14" viewBox="0 0 15 14" fill="none"><path d="M9.5 12.5 H3 A1.6 1.6 0 0 1 1.4 10.9 V3.9 A1.6 1.6 0 0 1 3 2.3 H11.5 A1.6 1.6 0 0 1 13.1 3.9 V5.5" stroke="#c9ccd0" stroke-width="1.3"/><path d="M4.2 1 V3.5 M10.3 1 V3.5" stroke="#c9ccd0" stroke-width="1.2"/><path d="M3.8 5.6 H10.5 M3.8 8.5 H4.6" stroke="#c9ccd0" stroke-width="1.1"/><path d="M7 10 H13.2 M11.2 8 L13.4 10 L11.2 12" stroke="#c9ccd0" stroke-width="1.2" fill="none"/></svg>
<svg style="position:absolute;left:1586.5px;top:620.5px;" width="17" height="14" viewBox="0 0 17 14" fill="none"><circle cx="6.2" cy="4.3" r="3.2" stroke="#c9ccd0" stroke-width="1.05"/><path d="M1 12.5 C2 9.3 4 8.4 6 8.4 C8 8.4 9.8 9.3 10.6 11" stroke="#c9ccd0" stroke-width="1.1"/><circle cx="12.2" cy="6.6" r="1.8" stroke="#c9ccd0" stroke-width="1.1"/><path d="M10.4 10.4 C11.5 9.9 13.2 9.9 14.4 11.4 L15.6 12.5" stroke="#c9ccd0" stroke-width="1.1"/></svg>
<svg style="position:absolute;left:1608.5px;top:620px;" width="15" height="14" viewBox="0 0 15 14" fill="none"><path d="M1.6 3.8 C2.5 2.3 4.6 1 7.5 1 C10.4 1 12.5 2.3 13.4 3.8 V4.6 H1.6 Z" stroke="#c9ccd0" stroke-width="1.1" stroke-linejoin="round"/><path d="M3.2 5.4 V10 M6 5.4 V10 M9 5.4 V10 M11.8 5.4 V10" stroke="#c9ccd0" stroke-width="1.3"/><rect x="1.5" y="10.6" width="12" height="2.1" rx="0.8" stroke="#c9ccd0" stroke-width="1.1"/></svg>
<svg style="position:absolute;left:1630.5px;top:618.5px;" width="13" height="16" viewBox="0 0 13 16" fill="none"><path d="M1.4 13.8 V2.8 A1.6 1.6 0 0 1 3 1.2 H10 A1.6 1.6 0 0 1 11.6 2.8 V13.8 L10.3 12.6 L9 14.2 L7.6 12.6 L6.3 14.2 L5 12.6 L3.6 14.2 L2.5 12.6 Z" stroke="#c9ccd0" stroke-width="1.1" stroke-linejoin="round"/><path d="M9.4 3.7 C8.2 2.9 7.1 3.5 7.2 4.4 C7.4 5.3 9.6 5.4 9.5 6.5 C9.4 7.5 8 7.7 7 7" stroke="#c9ccd0" stroke-width="0.9"/><path d="M8.3 2.6 V8" stroke="#c9ccd0" stroke-width="0.7"/><path d="M3.1 9.2 H4.8 M3.1 10.6 H9.6" stroke="#c9ccd0" stroke-width="0.9"/></svg>
<svg style="position:absolute;left:1650.5px;top:620.5px;" width="15" height="13" viewBox="0 0 15 13" fill="none"><rect x="1" y="1" width="13" height="11" rx="1.6" stroke="#c9ccd0" stroke-width="1.1"/><path d="M3.2 3.4 L7.5 6.6 L11.8 3.4" stroke="#c9ccd0" stroke-width="1.1" fill="none"/></svg>
<svg style="position:absolute;left:1691px;top:620px;" width="14" height="16" viewBox="0 0 14 16" fill="none"><path d="M9 1.1 H3 A2 2 0 0 0 1 3.1 V12.9 A2 2 0 0 0 3 14.9 H10.5 A2 2 0 0 0 12.5 12.9 V4.6 Z" stroke="#1f7bd8" stroke-width="1.4" stroke-linejoin="round"/><circle cx="10.6" cy="3.2" r="1.1" fill="#fff" stroke="#1f7bd8" stroke-width="0.7"/><circle cx="6.3" cy="9.2" r="3.1" fill="#1f7bd8"/><path d="M6.2 7.8 V9.7 L7.4 10.6" stroke="#fff" stroke-width="0.9"/></svg>
<div style="position:absolute;left:1805px;top:615px;width:87px;height:22px;border:1px solid #2f78c6;border-radius:5px;background:#fff"></div>
<div style="position:absolute;left:1868px;top:615px;width:1px;height:24px;background:#2f78c6"></div>
<svg style="position:absolute;left:1810px;top:619px;" width="16" height="16" viewBox="0 0 16 16" fill="none"><path d="M3.1 6.5 V3 A1.9 1.9 0 0 1 5 1.1 H10.3 L14.6 5.3 V12.9 A1.9 1.9 0 0 1 12.7 14.8 H5 A1.9 1.9 0 0 1 3.1 12.9 V12" stroke="#2a7bd0" stroke-width="1.15" stroke-linejoin="round"/><path d="M10.3 1.1 V3.4 A1.6 1.6 0 0 0 11.9 5 H14.6" stroke="#2a7bd0" stroke-width="1"/><rect x="1" y="7" width="8.8" height="5.4" rx="1.3" fill="#2a7bd0"/><path d="M2.5 11 V8.4 H3.6 A0.7 0.7 0 0 1 3.6 9.8 H2.5 M4.9 8.4 V11 H5.5 A1.1 1.3 0 0 0 5.5 8.4 Z M7.3 11 V8.4 H8.6 M7.3 9.6 H8.3" stroke="#dff0ff" stroke-width="0.55" fill="none"/></svg>
<svg style="position:absolute;left:1874px;top:623px;" width="14" height="10" viewBox="0 0 14 10" fill="none"><path d="M1.5 1.8 L7 7.2 L12.5 1.8" stroke="#2a7bd0" stroke-width="1.4" fill="none"/></svg>
<div style="position:absolute;left:14px;top:674px;width:1888px;height:1px;background:#d5dbe2"></div>
<div style="position:absolute;left:30px;top:650px;width:13.5px;height:13.5px;border:1.3px solid #3f4347;border-radius:3.5px;background:#fff"></div>
<svg style="position:absolute;left:82px;top:647px;" width="17" height="25" viewBox="0 0 17 25" fill="none"><path d="M8 1 C4.6 1 2 3.4 2 7.8 C2 10.5 2.8 12.5 4.3 13.6 L4.3 17.8 C3.4 19.4 1.4 20.6 0.9 21.6 C3.5 23.2 12.2 23.4 15.9 21.4 C15.2 20.4 13.3 19.4 12.4 17.8 L12.1 13.4 C13.4 12.4 14.1 10.4 14.1 7.8 C14.1 3.4 11.6 1 8 1 Z" fill="#333537"/></svg>
<svg style="position:absolute;left:1545.5px;top:652px;" width="15" height="14" viewBox="0 0 15 14" fill="none"><path d="M3 1.2 H12 A2 2 0 0 1 14 3.2 V8.3 A2 2 0 0 1 12 10.3 H6.3 L3 12.8 V10.3 A2 2 0 0 1 1 8.3 V3.2 A2 2 0 0 1 3 1.2 Z" stroke="#c9ccd0" stroke-width="1.2" stroke-linejoin="round"/><path d="M3.8 4.3 H11" stroke="#c9ccd0" stroke-width="1.1"/><path d="M3.8 6.6 H7" stroke="#c9ccd0" stroke-width="1.1"/></svg>
<svg style="position:absolute;left:1566.5px;top:652px;" width="15" height="14" viewBox="0 0 15 14" fill="none"><path d="M9.5 12.5 H3 A1.6 1.6 0 0 1 1.4 10.9 V3.9 A1.6 1.6 0 0 1 3 2.3 H11.5 A1.6 1.6 0 0 1 13.1 3.9 V5.5" stroke="#c9ccd0" stroke-width="1.3"/><path d="M4.2 1 V3.5 M10.3 1 V3.5" stroke="#c9ccd0" stroke-width="1.2"/><path d="M3.8 5.6 H10.5 M3.8 8.5 H4.6" stroke="#c9ccd0" stroke-width="1.1"/><path d="M7 10 H13.2 M11.2 8 L13.4 10 L11.2 12" stroke="#c9ccd0" stroke-width="1.2" fill="none"/></svg>
<svg style="position:absolute;left:1586.5px;top:652.5px;" width="17" height="14" viewBox="0 0 17 14" fill="none"><circle cx="6.2" cy="4.3" r="3.2" stroke="#c9ccd0" stroke-width="1.05"/><path d="M1 12.5 C2 9.3 4 8.4 6 8.4 C8 8.4 9.8 9.3 10.6 11" stroke="#c9ccd0" stroke-width="1.1"/><circle cx="12.2" cy="6.6" r="1.8" stroke="#c9ccd0" stroke-width="1.1"/><path d="M10.4 10.4 C11.5 9.9 13.2 9.9 14.4 11.4 L15.6 12.5" stroke="#c9ccd0" stroke-width="1.1"/></svg>
<svg style="position:absolute;left:1608.5px;top:652px;" width="15" height="14" viewBox="0 0 15 14" fill="none"><path d="M1.6 3.8 C2.5 2.3 4.6 1 7.5 1 C10.4 1 12.5 2.3 13.4 3.8 V4.6 H1.6 Z" stroke="#c9ccd0" stroke-width="1.1" stroke-linejoin="round"/><path d="M3.2 5.4 V10 M6 5.4 V10 M9 5.4 V10 M11.8 5.4 V10" stroke="#c9ccd0" stroke-width="1.3"/><rect x="1.5" y="10.6" width="12" height="2.1" rx="0.8" stroke="#c9ccd0" stroke-width="1.1"/></svg>
<svg style="position:absolute;left:1630.5px;top:650.5px;" width="13" height="16" viewBox="0 0 13 16" fill="none"><path d="M1.4 13.8 V2.8 A1.6 1.6 0 0 1 3 1.2 H10 A1.6 1.6 0 0 1 11.6 2.8 V13.8 L10.3 12.6 L9 14.2 L7.6 12.6 L6.3 14.2 L5 12.6 L3.6 14.2 L2.5 12.6 Z" stroke="#c9ccd0" stroke-width="1.1" stroke-linejoin="round"/><path d="M9.4 3.7 C8.2 2.9 7.1 3.5 7.2 4.4 C7.4 5.3 9.6 5.4 9.5 6.5 C9.4 7.5 8 7.7 7 7" stroke="#c9ccd0" stroke-width="0.9"/><path d="M8.3 2.6 V8" stroke="#c9ccd0" stroke-width="0.7"/><path d="M3.1 9.2 H4.8 M3.1 10.6 H9.6" stroke="#c9ccd0" stroke-width="0.9"/></svg>
<svg style="position:absolute;left:1650.5px;top:652.5px;" width="15" height="13" viewBox="0 0 15 13" fill="none"><rect x="1" y="1" width="13" height="11" rx="1.6" stroke="#c9ccd0" stroke-width="1.1"/><path d="M3.2 3.4 L7.5 6.6 L11.8 3.4" stroke="#c9ccd0" stroke-width="1.1" fill="none"/></svg>
<svg style="position:absolute;left:1691px;top:652px;" width="14" height="16" viewBox="0 0 14 16" fill="none"><path d="M9 1.1 H3 A2 2 0 0 0 1 3.1 V12.9 A2 2 0 0 0 3 14.9 H10.5 A2 2 0 0 0 12.5 12.9 V4.6 Z" stroke="#1f7bd8" stroke-width="1.4" stroke-linejoin="round"/><circle cx="10.6" cy="3.2" r="1.1" fill="#fff" stroke="#1f7bd8" stroke-width="0.7"/><circle cx="6.3" cy="9.2" r="3.1" fill="#1f7bd8"/><path d="M6.2 7.8 V9.7 L7.4 10.6" stroke="#fff" stroke-width="0.9"/></svg>
<div style="position:absolute;left:1805px;top:647px;width:87px;height:22px;border:1px solid #2f78c6;border-radius:5px;background:#fff"></div>
<div style="position:absolute;left:1868px;top:647px;width:1px;height:24px;background:#2f78c6"></div>
<svg style="position:absolute;left:1810px;top:651px;" width="16" height="16" viewBox="0 0 16 16" fill="none"><path d="M3.1 6.5 V3 A1.9 1.9 0 0 1 5 1.1 H10.3 L14.6 5.3 V12.9 A1.9 1.9 0 0 1 12.7 14.8 H5 A1.9 1.9 0 0 1 3.1 12.9 V12" stroke="#2a7bd0" stroke-width="1.15" stroke-linejoin="round"/><path d="M10.3 1.1 V3.4 A1.6 1.6 0 0 0 11.9 5 H14.6" stroke="#2a7bd0" stroke-width="1"/><rect x="1" y="7" width="8.8" height="5.4" rx="1.3" fill="#2a7bd0"/><path d="M2.5 11 V8.4 H3.6 A0.7 0.7 0 0 1 3.6 9.8 H2.5 M4.9 8.4 V11 H5.5 A1.1 1.3 0 0 0 5.5 8.4 Z M7.3 11 V8.4 H8.6 M7.3 9.6 H8.3" stroke="#dff0ff" stroke-width="0.55" fill="none"/></svg>
<svg style="position:absolute;left:1874px;top:655px;" width="14" height="10" viewBox="0 0 14 10" fill="none"><path d="M1.5 1.8 L7 7.2 L12.5 1.8" stroke="#2a7bd0" stroke-width="1.4" fill="none"/></svg>
<div style="position:absolute;left:14px;top:706px;width:1888px;height:1px;background:#d5dbe2"></div>
<div style="position:absolute;left:30px;top:682px;width:13.5px;height:13.5px;border:1.3px solid #3f4347;border-radius:3.5px;background:#fff"></div>
<svg style="position:absolute;left:82px;top:679px;" width="17" height="25" viewBox="0 0 17 25" fill="none"><path d="M8 1 C4.6 1 2 3.4 2 7.8 C2 10.5 2.8 12.5 4.3 13.6 L4.3 17.8 C3.4 19.4 1.4 20.6 0.9 21.6 C3.5 23.2 12.2 23.4 15.9 21.4 C15.2 20.4 13.3 19.4 12.4 17.8 L12.1 13.4 C13.4 12.4 14.1 10.4 14.1 7.8 C14.1 3.4 11.6 1 8 1 Z" fill="#333537"/></svg>
<svg style="position:absolute;left:1545.5px;top:684px;" width="15" height="14" viewBox="0 0 15 14" fill="none"><path d="M3 1.2 H12 A2 2 0 0 1 14 3.2 V8.3 A2 2 0 0 1 12 10.3 H6.3 L3 12.8 V10.3 A2 2 0 0 1 1 8.3 V3.2 A2 2 0 0 1 3 1.2 Z" stroke="#c9ccd0" stroke-width="1.2" stroke-linejoin="round"/><path d="M3.8 4.3 H11" stroke="#c9ccd0" stroke-width="1.1"/><path d="M3.8 6.6 H7" stroke="#c9ccd0" stroke-width="1.1"/></svg>
<svg style="position:absolute;left:1566.5px;top:684px;" width="15" height="14" viewBox="0 0 15 14" fill="none"><path d="M9.5 12.5 H3 A1.6 1.6 0 0 1 1.4 10.9 V3.9 A1.6 1.6 0 0 1 3 2.3 H11.5 A1.6 1.6 0 0 1 13.1 3.9 V5.5" stroke="#c9ccd0" stroke-width="1.3"/><path d="M4.2 1 V3.5 M10.3 1 V3.5" stroke="#c9ccd0" stroke-width="1.2"/><path d="M3.8 5.6 H10.5 M3.8 8.5 H4.6" stroke="#c9ccd0" stroke-width="1.1"/><path d="M7 10 H13.2 M11.2 8 L13.4 10 L11.2 12" stroke="#c9ccd0" stroke-width="1.2" fill="none"/></svg>
<svg style="position:absolute;left:1586.5px;top:684.5px;" width="17" height="14" viewBox="0 0 17 14" fill="none"><circle cx="6.2" cy="4.3" r="3.2" stroke="#c9ccd0" stroke-width="1.05"/><path d="M1 12.5 C2 9.3 4 8.4 6 8.4 C8 8.4 9.8 9.3 10.6 11" stroke="#c9ccd0" stroke-width="1.1"/><circle cx="12.2" cy="6.6" r="1.8" stroke="#c9ccd0" stroke-width="1.1"/><path d="M10.4 10.4 C11.5 9.9 13.2 9.9 14.4 11.4 L15.6 12.5" stroke="#c9ccd0" stroke-width="1.1"/></svg>
<svg style="position:absolute;left:1608.5px;top:684px;" width="15" height="14" viewBox="0 0 15 14" fill="none"><path d="M1.6 3.8 C2.5 2.3 4.6 1 7.5 1 C10.4 1 12.5 2.3 13.4 3.8 V4.6 H1.6 Z" stroke="#c9ccd0" stroke-width="1.1" stroke-linejoin="round"/><path d="M3.2 5.4 V10 M6 5.4 V10 M9 5.4 V10 M11.8 5.4 V10" stroke="#c9ccd0" stroke-width="1.3"/><rect x="1.5" y="10.6" width="12" height="2.1" rx="0.8" stroke="#c9ccd0" stroke-width="1.1"/></svg>
<svg style="position:absolute;left:1630.5px;top:682.5px;" width="13" height="16" viewBox="0 0 13 16" fill="none"><path d="M1.4 13.8 V2.8 A1.6 1.6 0 0 1 3 1.2 H10 A1.6 1.6 0 0 1 11.6 2.8 V13.8 L10.3 12.6 L9 14.2 L7.6 12.6 L6.3 14.2 L5 12.6 L3.6 14.2 L2.5 12.6 Z" stroke="#c9ccd0" stroke-width="1.1" stroke-linejoin="round"/><path d="M9.4 3.7 C8.2 2.9 7.1 3.5 7.2 4.4 C7.4 5.3 9.6 5.4 9.5 6.5 C9.4 7.5 8 7.7 7 7" stroke="#c9ccd0" stroke-width="0.9"/><path d="M8.3 2.6 V8" stroke="#c9ccd0" stroke-width="0.7"/><path d="M3.1 9.2 H4.8 M3.1 10.6 H9.6" stroke="#c9ccd0" stroke-width="0.9"/></svg>
<svg style="position:absolute;left:1650.5px;top:684.5px;" width="15" height="13" viewBox="0 0 15 13" fill="none"><rect x="1" y="1" width="13" height="11" rx="1.6" stroke="#c9ccd0" stroke-width="1.1"/><path d="M3.2 3.4 L7.5 6.6 L11.8 3.4" stroke="#c9ccd0" stroke-width="1.1" fill="none"/></svg>
<svg style="position:absolute;left:1691px;top:684px;" width="14" height="16" viewBox="0 0 14 16" fill="none"><path d="M9 1.1 H3 A2 2 0 0 0 1 3.1 V12.9 A2 2 0 0 0 3 14.9 H10.5 A2 2 0 0 0 12.5 12.9 V4.6 Z" stroke="#1f7bd8" stroke-width="1.4" stroke-linejoin="round"/><circle cx="10.6" cy="3.2" r="1.1" fill="#fff" stroke="#1f7bd8" stroke-width="0.7"/><circle cx="6.3" cy="9.2" r="3.1" fill="#1f7bd8"/><path d="M6.2 7.8 V9.7 L7.4 10.6" stroke="#fff" stroke-width="0.9"/></svg>
<div style="position:absolute;left:1805px;top:679px;width:87px;height:22px;border:1px solid #2f78c6;border-radius:5px;background:#fff"></div>
<div style="position:absolute;left:1868px;top:679px;width:1px;height:24px;background:#2f78c6"></div>
<svg style="position:absolute;left:1810px;top:683px;" width="16" height="16" viewBox="0 0 16 16" fill="none"><path d="M3.1 6.5 V3 A1.9 1.9 0 0 1 5 1.1 H10.3 L14.6 5.3 V12.9 A1.9 1.9 0 0 1 12.7 14.8 H5 A1.9 1.9 0 0 1 3.1 12.9 V12" stroke="#2a7bd0" stroke-width="1.15" stroke-linejoin="round"/><path d="M10.3 1.1 V3.4 A1.6 1.6 0 0 0 11.9 5 H14.6" stroke="#2a7bd0" stroke-width="1"/><rect x="1" y="7" width="8.8" height="5.4" rx="1.3" fill="#2a7bd0"/><path d="M2.5 11 V8.4 H3.6 A0.7 0.7 0 0 1 3.6 9.8 H2.5 M4.9 8.4 V11 H5.5 A1.1 1.3 0 0 0 5.5 8.4 Z M7.3 11 V8.4 H8.6 M7.3 9.6 H8.3" stroke="#dff0ff" stroke-width="0.55" fill="none"/></svg>
<svg style="position:absolute;left:1874px;top:687px;" width="14" height="10" viewBox="0 0 14 10" fill="none"><path d="M1.5 1.8 L7 7.2 L12.5 1.8" stroke="#2a7bd0" stroke-width="1.4" fill="none"/></svg>
<div style="position:absolute;left:14px;top:738px;width:1888px;height:1px;background:#d5dbe2"></div>
<div style="position:absolute;left:30px;top:714px;width:13.5px;height:13.5px;border:1.3px solid #3f4347;border-radius:3.5px;background:#fff"></div>
<svg style="position:absolute;left:82px;top:711px;" width="17" height="25" viewBox="0 0 17 25" fill="none"><path d="M8 1 C4.6 1 2 3.4 2 7.8 C2 10.5 2.8 12.5 4.3 13.6 L4.3 17.8 C3.4 19.4 1.4 20.6 0.9 21.6 C3.5 23.2 12.2 23.4 15.9 21.4 C15.2 20.4 13.3 19.4 12.4 17.8 L12.1 13.4 C13.4 12.4 14.1 10.4 14.1 7.8 C14.1 3.4 11.6 1 8 1 Z" fill="#333537"/></svg>
<svg style="position:absolute;left:1545.5px;top:716px;" width="15" height="14" viewBox="0 0 15 14" fill="none"><path d="M3 1.2 H12 A2 2 0 0 1 14 3.2 V8.3 A2 2 0 0 1 12 10.3 H6.3 L3 12.8 V10.3 A2 2 0 0 1 1 8.3 V3.2 A2 2 0 0 1 3 1.2 Z" stroke="#c9ccd0" stroke-width="1.2" stroke-linejoin="round"/><path d="M3.8 4.3 H11" stroke="#c9ccd0" stroke-width="1.1"/><path d="M3.8 6.6 H7" stroke="#c9ccd0" stroke-width="1.1"/></svg>
<svg style="position:absolute;left:1566.5px;top:716px;" width="15" height="14" viewBox="0 0 15 14" fill="none"><path d="M9.5 12.5 H3 A1.6 1.6 0 0 1 1.4 10.9 V3.9 A1.6 1.6 0 0 1 3 2.3 H11.5 A1.6 1.6 0 0 1 13.1 3.9 V5.5" stroke="#c9ccd0" stroke-width="1.3"/><path d="M4.2 1 V3.5 M10.3 1 V3.5" stroke="#c9ccd0" stroke-width="1.2"/><path d="M3.8 5.6 H10.5 M3.8 8.5 H4.6" stroke="#c9ccd0" stroke-width="1.1"/><path d="M7 10 H13.2 M11.2 8 L13.4 10 L11.2 12" stroke="#c9ccd0" stroke-width="1.2" fill="none"/></svg>
<svg style="position:absolute;left:1586.5px;top:716.5px;" width="17" height="14" viewBox="0 0 17 14" fill="none"><circle cx="6.2" cy="4.3" r="3.2" stroke="#c9ccd0" stroke-width="1.05"/><path d="M1 12.5 C2 9.3 4 8.4 6 8.4 C8 8.4 9.8 9.3 10.6 11" stroke="#c9ccd0" stroke-width="1.1"/><circle cx="12.2" cy="6.6" r="1.8" stroke="#c9ccd0" stroke-width="1.1"/><path d="M10.4 10.4 C11.5 9.9 13.2 9.9 14.4 11.4 L15.6 12.5" stroke="#c9ccd0" stroke-width="1.1"/></svg>
<svg style="position:absolute;left:1608.5px;top:716px;" width="15" height="14" viewBox="0 0 15 14" fill="none"><path d="M1.6 3.8 C2.5 2.3 4.6 1 7.5 1 C10.4 1 12.5 2.3 13.4 3.8 V4.6 H1.6 Z" stroke="#c9ccd0" stroke-width="1.1" stroke-linejoin="round"/><path d="M3.2 5.4 V10 M6 5.4 V10 M9 5.4 V10 M11.8 5.4 V10" stroke="#c9ccd0" stroke-width="1.3"/><rect x="1.5" y="10.6" width="12" height="2.1" rx="0.8" stroke="#c9ccd0" stroke-width="1.1"/></svg>
<svg style="position:absolute;left:1630.5px;top:714.5px;" width="13" height="16" viewBox="0 0 13 16" fill="none"><path d="M1.4 13.8 V2.8 A1.6 1.6 0 0 1 3 1.2 H10 A1.6 1.6 0 0 1 11.6 2.8 V13.8 L10.3 12.6 L9 14.2 L7.6 12.6 L6.3 14.2 L5 12.6 L3.6 14.2 L2.5 12.6 Z" stroke="#c9ccd0" stroke-width="1.1" stroke-linejoin="round"/><path d="M9.4 3.7 C8.2 2.9 7.1 3.5 7.2 4.4 C7.4 5.3 9.6 5.4 9.5 6.5 C9.4 7.5 8 7.7 7 7" stroke="#c9ccd0" stroke-width="0.9"/><path d="M8.3 2.6 V8" stroke="#c9ccd0" stroke-width="0.7"/><path d="M3.1 9.2 H4.8 M3.1 10.6 H9.6" stroke="#c9ccd0" stroke-width="0.9"/></svg>
<svg style="position:absolute;left:1650.5px;top:716.5px;" width="15" height="13" viewBox="0 0 15 13" fill="none"><rect x="1" y="1" width="13" height="11" rx="1.6" stroke="#c9ccd0" stroke-width="1.1"/><path d="M3.2 3.4 L7.5 6.6 L11.8 3.4" stroke="#c9ccd0" stroke-width="1.1" fill="none"/></svg>
<svg style="position:absolute;left:1691px;top:716px;" width="14" height="16" viewBox="0 0 14 16" fill="none"><path d="M9 1.1 H3 A2 2 0 0 0 1 3.1 V12.9 A2 2 0 0 0 3 14.9 H10.5 A2 2 0 0 0 12.5 12.9 V4.6 Z" stroke="#1f7bd8" stroke-width="1.4" stroke-linejoin="round"/><circle cx="10.6" cy="3.2" r="1.1" fill="#fff" stroke="#1f7bd8" stroke-width="0.7"/><circle cx="6.3" cy="9.2" r="3.1" fill="#1f7bd8"/><path d="M6.2 7.8 V9.7 L7.4 10.6" stroke="#fff" stroke-width="0.9"/></svg>
<div style="position:absolute;left:1805px;top:711px;width:87px;height:22px;border:1px solid #2f78c6;border-radius:5px;background:#fff"></div>
<div style="position:absolute;left:1868px;top:711px;width:1px;height:24px;background:#2f78c6"></div>
<svg style="position:absolute;left:1810px;top:715px;" width="16" height="16" viewBox="0 0 16 16" fill="none"><path d="M3.1 6.5 V3 A1.9 1.9 0 0 1 5 1.1 H10.3 L14.6 5.3 V12.9 A1.9 1.9 0 0 1 12.7 14.8 H5 A1.9 1.9 0 0 1 3.1 12.9 V12" stroke="#2a7bd0" stroke-width="1.15" stroke-linejoin="round"/><path d="M10.3 1.1 V3.4 A1.6 1.6 0 0 0 11.9 5 H14.6" stroke="#2a7bd0" stroke-width="1"/><rect x="1" y="7" width="8.8" height="5.4" rx="1.3" fill="#2a7bd0"/><path d="M2.5 11 V8.4 H3.6 A0.7 0.7 0 0 1 3.6 9.8 H2.5 M4.9 8.4 V11 H5.5 A1.1 1.3 0 0 0 5.5 8.4 Z M7.3 11 V8.4 H8.6 M7.3 9.6 H8.3" stroke="#dff0ff" stroke-width="0.55" fill="none"/></svg>
<svg style="position:absolute;left:1874px;top:719px;" width="14" height="10" viewBox="0 0 14 10" fill="none"><path d="M1.5 1.8 L7 7.2 L12.5 1.8" stroke="#2a7bd0" stroke-width="1.4" fill="none"/></svg>
<div style="position:absolute;left:14px;top:770px;width:1888px;height:1px;background:#d5dbe2"></div>
<div style="position:absolute;left:30px;top:746px;width:13.5px;height:13.5px;border:1.3px solid #3f4347;border-radius:3.5px;background:#fff"></div>
<svg style="position:absolute;left:82px;top:743px;" width="17" height="25" viewBox="0 0 17 25" fill="none"><path d="M8 1 C4.6 1 2 3.4 2 7.8 C2 10.5 2.8 12.5 4.3 13.6 L4.3 17.8 C3.4 19.4 1.4 20.6 0.9 21.6 C3.5 23.2 12.2 23.4 15.9 21.4 C15.2 20.4 13.3 19.4 12.4 17.8 L12.1 13.4 C13.4 12.4 14.1 10.4 14.1 7.8 C14.1 3.4 11.6 1 8 1 Z" fill="#333537"/></svg>
<svg style="position:absolute;left:1545.5px;top:748px;" width="15" height="14" viewBox="0 0 15 14" fill="none"><path d="M3 1.2 H12 A2 2 0 0 1 14 3.2 V8.3 A2 2 0 0 1 12 10.3 H6.3 L3 12.8 V10.3 A2 2 0 0 1 1 8.3 V3.2 A2 2 0 0 1 3 1.2 Z" stroke="#c9ccd0" stroke-width="1.2" stroke-linejoin="round"/><path d="M3.8 4.3 H11" stroke="#c9ccd0" stroke-width="1.1"/><path d="M3.8 6.6 H7" stroke="#c9ccd0" stroke-width="1.1"/></svg>
<svg style="position:absolute;left:1566.5px;top:748px;" width="15" height="14" viewBox="0 0 15 14" fill="none"><path d="M9.5 12.5 H3 A1.6 1.6 0 0 1 1.4 10.9 V3.9 A1.6 1.6 0 0 1 3 2.3 H11.5 A1.6 1.6 0 0 1 13.1 3.9 V5.5" stroke="#c9ccd0" stroke-width="1.3"/><path d="M4.2 1 V3.5 M10.3 1 V3.5" stroke="#c9ccd0" stroke-width="1.2"/><path d="M3.8 5.6 H10.5 M3.8 8.5 H4.6" stroke="#c9ccd0" stroke-width="1.1"/><path d="M7 10 H13.2 M11.2 8 L13.4 10 L11.2 12" stroke="#c9ccd0" stroke-width="1.2" fill="none"/></svg>
<svg style="position:absolute;left:1586.5px;top:748.5px;" width="17" height="14" viewBox="0 0 17 14" fill="none"><circle cx="6.2" cy="4.3" r="3.2" stroke="#c9ccd0" stroke-width="1.05"/><path d="M1 12.5 C2 9.3 4 8.4 6 8.4 C8 8.4 9.8 9.3 10.6 11" stroke="#c9ccd0" stroke-width="1.1"/><circle cx="12.2" cy="6.6" r="1.8" stroke="#c9ccd0" stroke-width="1.1"/><path d="M10.4 10.4 C11.5 9.9 13.2 9.9 14.4 11.4 L15.6 12.5" stroke="#c9ccd0" stroke-width="1.1"/></svg>
<svg style="position:absolute;left:1608.5px;top:748px;" width="15" height="14" viewBox="0 0 15 14" fill="none"><path d="M1.6 3.8 C2.5 2.3 4.6 1 7.5 1 C10.4 1 12.5 2.3 13.4 3.8 V4.6 H1.6 Z" stroke="#c9ccd0" stroke-width="1.1" stroke-linejoin="round"/><path d="M3.2 5.4 V10 M6 5.4 V10 M9 5.4 V10 M11.8 5.4 V10" stroke="#c9ccd0" stroke-width="1.3"/><rect x="1.5" y="10.6" width="12" height="2.1" rx="0.8" stroke="#c9ccd0" stroke-width="1.1"/></svg>
<svg style="position:absolute;left:1630.5px;top:746.5px;" width="13" height="16" viewBox="0 0 13 16" fill="none"><path d="M1.4 13.8 V2.8 A1.6 1.6 0 0 1 3 1.2 H10 A1.6 1.6 0 0 1 11.6 2.8 V13.8 L10.3 12.6 L9 14.2 L7.6 12.6 L6.3 14.2 L5 12.6 L3.6 14.2 L2.5 12.6 Z" stroke="#c9ccd0" stroke-width="1.1" stroke-linejoin="round"/><path d="M9.4 3.7 C8.2 2.9 7.1 3.5 7.2 4.4 C7.4 5.3 9.6 5.4 9.5 6.5 C9.4 7.5 8 7.7 7 7" stroke="#c9ccd0" stroke-width="0.9"/><path d="M8.3 2.6 V8" stroke="#c9ccd0" stroke-width="0.7"/><path d="M3.1 9.2 H4.8 M3.1 10.6 H9.6" stroke="#c9ccd0" stroke-width="0.9"/></svg>
<svg style="position:absolute;left:1650.5px;top:748.5px;" width="15" height="13" viewBox="0 0 15 13" fill="none"><rect x="1" y="1" width="13" height="11" rx="1.6" stroke="#c9ccd0" stroke-width="1.1"/><path d="M3.2 3.4 L7.5 6.6 L11.8 3.4" stroke="#c9ccd0" stroke-width="1.1" fill="none"/></svg>
<svg style="position:absolute;left:1691px;top:748px;" width="14" height="16" viewBox="0 0 14 16" fill="none"><path d="M9 1.1 H3 A2 2 0 0 0 1 3.1 V12.9 A2 2 0 0 0 3 14.9 H10.5 A2 2 0 0 0 12.5 12.9 V4.6 Z" stroke="#1f7bd8" stroke-width="1.4" stroke-linejoin="round"/><circle cx="10.6" cy="3.2" r="1.1" fill="#fff" stroke="#1f7bd8" stroke-width="0.7"/><circle cx="6.3" cy="9.2" r="3.1" fill="#1f7bd8"/><path d="M6.2 7.8 V9.7 L7.4 10.6" stroke="#fff" stroke-width="0.9"/></svg>
<div style="position:absolute;left:1805px;top:743px;width:87px;height:22px;border:1px solid #2f78c6;border-radius:5px;background:#fff"></div>
<div style="position:absolute;left:1868px;top:743px;width:1px;height:24px;background:#2f78c6"></div>
<svg style="position:absolute;left:1810px;top:747px;" width="16" height="16" viewBox="0 0 16 16" fill="none"><path d="M3.1 6.5 V3 A1.9 1.9 0 0 1 5 1.1 H10.3 L14.6 5.3 V12.9 A1.9 1.9 0 0 1 12.7 14.8 H5 A1.9 1.9 0 0 1 3.1 12.9 V12" stroke="#2a7bd0" stroke-width="1.15" stroke-linejoin="round"/><path d="M10.3 1.1 V3.4 A1.6 1.6 0 0 0 11.9 5 H14.6" stroke="#2a7bd0" stroke-width="1"/><rect x="1" y="7" width="8.8" height="5.4" rx="1.3" fill="#2a7bd0"/><path d="M2.5 11 V8.4 H3.6 A0.7 0.7 0 0 1 3.6 9.8 H2.5 M4.9 8.4 V11 H5.5 A1.1 1.3 0 0 0 5.5 8.4 Z M7.3 11 V8.4 H8.6 M7.3 9.6 H8.3" stroke="#dff0ff" stroke-width="0.55" fill="none"/></svg>
<svg style="position:absolute;left:1874px;top:751px;" width="14" height="10" viewBox="0 0 14 10" fill="none"><path d="M1.5 1.8 L7 7.2 L12.5 1.8" stroke="#2a7bd0" stroke-width="1.4" fill="none"/></svg>
<div style="position:absolute;left:14px;top:802px;width:1888px;height:1px;background:#d5dbe2"></div>
<div style="position:absolute;left:30px;top:778px;width:13.5px;height:13.5px;border:1.3px solid #3f4347;border-radius:3.5px;background:#fff"></div>
<svg style="position:absolute;left:82px;top:775px;" width="17" height="25" viewBox="0 0 17 25" fill="none"><path d="M8 1 C4.6 1 2 3.4 2 7.8 C2 10.5 2.8 12.5 4.3 13.6 L4.3 17.8 C3.4 19.4 1.4 20.6 0.9 21.6 C3.5 23.2 12.2 23.4 15.9 21.4 C15.2 20.4 13.3 19.4 12.4 17.8 L12.1 13.4 C13.4 12.4 14.1 10.4 14.1 7.8 C14.1 3.4 11.6 1 8 1 Z" fill="#333537"/></svg>
<svg style="position:absolute;left:1545.5px;top:780px;" width="15" height="14" viewBox="0 0 15 14" fill="none"><path d="M3 1.2 H12 A2 2 0 0 1 14 3.2 V8.3 A2 2 0 0 1 12 10.3 H6.3 L3 12.8 V10.3 A2 2 0 0 1 1 8.3 V3.2 A2 2 0 0 1 3 1.2 Z" stroke="#c9ccd0" stroke-width="1.2" stroke-linejoin="round"/><path d="M3.8 4.3 H11" stroke="#c9ccd0" stroke-width="1.1"/><path d="M3.8 6.6 H7" stroke="#c9ccd0" stroke-width="1.1"/></svg>
<svg style="position:absolute;left:1566.5px;top:780px;" width="15" height="14" viewBox="0 0 15 14" fill="none"><path d="M9.5 12.5 H3 A1.6 1.6 0 0 1 1.4 10.9 V3.9 A1.6 1.6 0 0 1 3 2.3 H11.5 A1.6 1.6 0 0 1 13.1 3.9 V5.5" stroke="#c9ccd0" stroke-width="1.3"/><path d="M4.2 1 V3.5 M10.3 1 V3.5" stroke="#c9ccd0" stroke-width="1.2"/><path d="M3.8 5.6 H10.5 M3.8 8.5 H4.6" stroke="#c9ccd0" stroke-width="1.1"/><path d="M7 10 H13.2 M11.2 8 L13.4 10 L11.2 12" stroke="#c9ccd0" stroke-width="1.2" fill="none"/></svg>
<svg style="position:absolute;left:1586.5px;top:780.5px;" width="17" height="14" viewBox="0 0 17 14" fill="none"><circle cx="6.2" cy="4.3" r="3.2" stroke="#c9ccd0" stroke-width="1.05"/><path d="M1 12.5 C2 9.3 4 8.4 6 8.4 C8 8.4 9.8 9.3 10.6 11" stroke="#c9ccd0" stroke-width="1.1"/><circle cx="12.2" cy="6.6" r="1.8" stroke="#c9ccd0" stroke-width="1.1"/><path d="M10.4 10.4 C11.5 9.9 13.2 9.9 14.4 11.4 L15.6 12.5" stroke="#c9ccd0" stroke-width="1.1"/></svg>
<svg style="position:absolute;left:1608.5px;top:780px;" width="15" height="14" viewBox="0 0 15 14" fill="none"><path d="M1.6 3.8 C2.5 2.3 4.6 1 7.5 1 C10.4 1 12.5 2.3 13.4 3.8 V4.6 H1.6 Z" stroke="#c9ccd0" stroke-width="1.1" stroke-linejoin="round"/><path d="M3.2 5.4 V10 M6 5.4 V10 M9 5.4 V10 M11.8 5.4 V10" stroke="#c9ccd0" stroke-width="1.3"/><rect x="1.5" y="10.6" width="12" height="2.1" rx="0.8" stroke="#c9ccd0" stroke-width="1.1"/></svg>
<svg style="position:absolute;left:1630.5px;top:778.5px;" width="13" height="16" viewBox="0 0 13 16" fill="none"><path d="M1.4 13.8 V2.8 A1.6 1.6 0 0 1 3 1.2 H10 A1.6 1.6 0 0 1 11.6 2.8 V13.8 L10.3 12.6 L9 14.2 L7.6 12.6 L6.3 14.2 L5 12.6 L3.6 14.2 L2.5 12.6 Z" stroke="#c9ccd0" stroke-width="1.1" stroke-linejoin="round"/><path d="M9.4 3.7 C8.2 2.9 7.1 3.5 7.2 4.4 C7.4 5.3 9.6 5.4 9.5 6.5 C9.4 7.5 8 7.7 7 7" stroke="#c9ccd0" stroke-width="0.9"/><path d="M8.3 2.6 V8" stroke="#c9ccd0" stroke-width="0.7"/><path d="M3.1 9.2 H4.8 M3.1 10.6 H9.6" stroke="#c9ccd0" stroke-width="0.9"/></svg>
<svg style="position:absolute;left:1650.5px;top:780.5px;" width="15" height="13" viewBox="0 0 15 13" fill="none"><rect x="1" y="1" width="13" height="11" rx="1.6" stroke="#c9ccd0" stroke-width="1.1"/><path d="M3.2 3.4 L7.5 6.6 L11.8 3.4" stroke="#c9ccd0" stroke-width="1.1" fill="none"/></svg>
<svg style="position:absolute;left:1691px;top:780px;" width="14" height="16" viewBox="0 0 14 16" fill="none"><path d="M9 1.1 H3 A2 2 0 0 0 1 3.1 V12.9 A2 2 0 0 0 3 14.9 H10.5 A2 2 0 0 0 12.5 12.9 V4.6 Z" stroke="#1f7bd8" stroke-width="1.4" stroke-linejoin="round"/><circle cx="10.6" cy="3.2" r="1.1" fill="#fff" stroke="#1f7bd8" stroke-width="0.7"/><circle cx="6.3" cy="9.2" r="3.1" fill="#1f7bd8"/><path d="M6.2 7.8 V9.7 L7.4 10.6" stroke="#fff" stroke-width="0.9"/></svg>
<div style="position:absolute;left:1805px;top:775px;width:87px;height:22px;border:1px solid #2f78c6;border-radius:5px;background:#fff"></div>
<div style="position:absolute;left:1868px;top:775px;width:1px;height:24px;background:#2f78c6"></div>
<svg style="position:absolute;left:1810px;top:779px;" width="16" height="16" viewBox="0 0 16 16" fill="none"><path d="M3.1 6.5 V3 A1.9 1.9 0 0 1 5 1.1 H10.3 L14.6 5.3 V12.9 A1.9 1.9 0 0 1 12.7 14.8 H5 A1.9 1.9 0 0 1 3.1 12.9 V12" stroke="#2a7bd0" stroke-width="1.15" stroke-linejoin="round"/><path d="M10.3 1.1 V3.4 A1.6 1.6 0 0 0 11.9 5 H14.6" stroke="#2a7bd0" stroke-width="1"/><rect x="1" y="7" width="8.8" height="5.4" rx="1.3" fill="#2a7bd0"/><path d="M2.5 11 V8.4 H3.6 A0.7 0.7 0 0 1 3.6 9.8 H2.5 M4.9 8.4 V11 H5.5 A1.1 1.3 0 0 0 5.5 8.4 Z M7.3 11 V8.4 H8.6 M7.3 9.6 H8.3" stroke="#dff0ff" stroke-width="0.55" fill="none"/></svg>
<svg style="position:absolute;left:1874px;top:783px;" width="14" height="10" viewBox="0 0 14 10" fill="none"><path d="M1.5 1.8 L7 7.2 L12.5 1.8" stroke="#2a7bd0" stroke-width="1.4" fill="none"/></svg>
<div style="position:absolute;left:14px;top:834px;width:1888px;height:1px;background:#d5dbe2"></div>
<div style="position:absolute;left:30px;top:810px;width:13.5px;height:13.5px;border:1.3px solid #3f4347;border-radius:3.5px;background:#fff"></div>
<svg style="position:absolute;left:82px;top:807px;" width="17" height="25" viewBox="0 0 17 25" fill="none"><path d="M8 1 C4.6 1 2 3.4 2 7.8 C2 10.5 2.8 12.5 4.3 13.6 L4.3 17.8 C3.4 19.4 1.4 20.6 0.9 21.6 C3.5 23.2 12.2 23.4 15.9 21.4 C15.2 20.4 13.3 19.4 12.4 17.8 L12.1 13.4 C13.4 12.4 14.1 10.4 14.1 7.8 C14.1 3.4 11.6 1 8 1 Z" fill="#333537"/></svg>
<svg style="position:absolute;left:1545.5px;top:812px;" width="15" height="14" viewBox="0 0 15 14" fill="none"><path d="M3 1.2 H12 A2 2 0 0 1 14 3.2 V8.3 A2 2 0 0 1 12 10.3 H6.3 L3 12.8 V10.3 A2 2 0 0 1 1 8.3 V3.2 A2 2 0 0 1 3 1.2 Z" stroke="#c9ccd0" stroke-width="1.2" stroke-linejoin="round"/><path d="M3.8 4.3 H11" stroke="#c9ccd0" stroke-width="1.1"/><path d="M3.8 6.6 H7" stroke="#c9ccd0" stroke-width="1.1"/></svg>
<svg style="position:absolute;left:1566.5px;top:812px;" width="15" height="14" viewBox="0 0 15 14" fill="none"><path d="M9.5 12.5 H3 A1.6 1.6 0 0 1 1.4 10.9 V3.9 A1.6 1.6 0 0 1 3 2.3 H11.5 A1.6 1.6 0 0 1 13.1 3.9 V5.5" stroke="#f0a030" stroke-width="1.3"/><path d="M4.2 1 V3.5 M10.3 1 V3.5" stroke="#f0a030" stroke-width="1.2"/><path d="M3.8 5.6 H10.5 M3.8 8.5 H4.6" stroke="#f0a030" stroke-width="1.1"/><path d="M7 10 H13.2 M11.2 8 L13.4 10 L11.2 12" stroke="#f0a030" stroke-width="1.2" fill="none"/></svg>
<svg style="position:absolute;left:1586.5px;top:812.5px;" width="17" height="14" viewBox="0 0 17 14" fill="none"><circle cx="6.2" cy="4.3" r="3.2" stroke="#c9ccd0" stroke-width="1.05"/><path d="M1 12.5 C2 9.3 4 8.4 6 8.4 C8 8.4 9.8 9.3 10.6 11" stroke="#c9ccd0" stroke-width="1.1"/><circle cx="12.2" cy="6.6" r="1.8" stroke="#c9ccd0" stroke-width="1.1"/><path d="M10.4 10.4 C11.5 9.9 13.2 9.9 14.4 11.4 L15.6 12.5" stroke="#c9ccd0" stroke-width="1.1"/></svg>
<svg style="position:absolute;left:1608.5px;top:812px;" width="15" height="14" viewBox="0 0 15 14" fill="none"><path d="M1.6 3.8 C2.5 2.3 4.6 1 7.5 1 C10.4 1 12.5 2.3 13.4 3.8 V4.6 H1.6 Z" stroke="#c9ccd0" stroke-width="1.1" stroke-linejoin="round"/><path d="M3.2 5.4 V10 M6 5.4 V10 M9 5.4 V10 M11.8 5.4 V10" stroke="#c9ccd0" stroke-width="1.3"/><rect x="1.5" y="10.6" width="12" height="2.1" rx="0.8" stroke="#c9ccd0" stroke-width="1.1"/></svg>
<svg style="position:absolute;left:1630.5px;top:810.5px;" width="13" height="16" viewBox="0 0 13 16" fill="none"><path d="M1.4 13.8 V2.8 A1.6 1.6 0 0 1 3 1.2 H10 A1.6 1.6 0 0 1 11.6 2.8 V13.8 L10.3 12.6 L9 14.2 L7.6 12.6 L6.3 14.2 L5 12.6 L3.6 14.2 L2.5 12.6 Z" stroke="#c9ccd0" stroke-width="1.1" stroke-linejoin="round"/><path d="M9.4 3.7 C8.2 2.9 7.1 3.5 7.2 4.4 C7.4 5.3 9.6 5.4 9.5 6.5 C9.4 7.5 8 7.7 7 7" stroke="#c9ccd0" stroke-width="0.9"/><path d="M8.3 2.6 V8" stroke="#c9ccd0" stroke-width="0.7"/><path d="M3.1 9.2 H4.8 M3.1 10.6 H9.6" stroke="#c9ccd0" stroke-width="0.9"/></svg>
<svg style="position:absolute;left:1650.5px;top:812.5px;" width="15" height="13" viewBox="0 0 15 13" fill="none"><rect x="1" y="1" width="13" height="11" rx="1.6" stroke="#c9ccd0" stroke-width="1.1"/><path d="M3.2 3.4 L7.5 6.6 L11.8 3.4" stroke="#c9ccd0" stroke-width="1.1" fill="none"/></svg>
<svg style="position:absolute;left:1691px;top:812px;" width="14" height="16" viewBox="0 0 14 16" fill="none"><path d="M9 1.1 H3 A2 2 0 0 0 1 3.1 V12.9 A2 2 0 0 0 3 14.9 H10.5 A2 2 0 0 0 12.5 12.9 V4.6 Z" stroke="#1f7bd8" stroke-width="1.4" stroke-linejoin="round"/><circle cx="10.6" cy="3.2" r="1.1" fill="#fff" stroke="#1f7bd8" stroke-width="0.7"/><circle cx="6.3" cy="9.2" r="3.1" fill="#1f7bd8"/><path d="M6.2 7.8 V9.7 L7.4 10.6" stroke="#fff" stroke-width="0.9"/></svg>
<div style="position:absolute;left:1805px;top:807px;width:87px;height:22px;border:1px solid #2f78c6;border-radius:5px;background:#fff"></div>
<div style="position:absolute;left:1868px;top:807px;width:1px;height:24px;background:#2f78c6"></div>
<svg style="position:absolute;left:1810px;top:811px;" width="16" height="16" viewBox="0 0 16 16" fill="none"><path d="M3.1 6.5 V3 A1.9 1.9 0 0 1 5 1.1 H10.3 L14.6 5.3 V12.9 A1.9 1.9 0 0 1 12.7 14.8 H5 A1.9 1.9 0 0 1 3.1 12.9 V12" stroke="#2a7bd0" stroke-width="1.15" stroke-linejoin="round"/><path d="M10.3 1.1 V3.4 A1.6 1.6 0 0 0 11.9 5 H14.6" stroke="#2a7bd0" stroke-width="1"/><rect x="1" y="7" width="8.8" height="5.4" rx="1.3" fill="#2a7bd0"/><path d="M2.5 11 V8.4 H3.6 A0.7 0.7 0 0 1 3.6 9.8 H2.5 M4.9 8.4 V11 H5.5 A1.1 1.3 0 0 0 5.5 8.4 Z M7.3 11 V8.4 H8.6 M7.3 9.6 H8.3" stroke="#dff0ff" stroke-width="0.55" fill="none"/></svg>
<svg style="position:absolute;left:1874px;top:815px;" width="14" height="10" viewBox="0 0 14 10" fill="none"><path d="M1.5 1.8 L7 7.2 L12.5 1.8" stroke="#2a7bd0" stroke-width="1.4" fill="none"/></svg>
<div style="position:absolute;left:14px;top:866px;width:1888px;height:1px;background:#d5dbe2"></div>
<div style="position:absolute;left:30px;top:842px;width:13.5px;height:13.5px;border:1.3px solid #3f4347;border-radius:3.5px;background:#fff"></div>
<svg style="position:absolute;left:82px;top:839px;" width="17" height="25" viewBox="0 0 17 25" fill="none"><path d="M8 1 C4.6 1 2 3.4 2 7.8 C2 10.5 2.8 12.5 4.3 13.6 L4.3 17.8 C3.4 19.4 1.4 20.6 0.9 21.6 C3.5 23.2 12.2 23.4 15.9 21.4 C15.2 20.4 13.3 19.4 12.4 17.8 L12.1 13.4 C13.4 12.4 14.1 10.4 14.1 7.8 C14.1 3.4 11.6 1 8 1 Z" fill="#333537"/></svg>
<svg style="position:absolute;left:1545.5px;top:844px;" width="15" height="14" viewBox="0 0 15 14" fill="none"><path d="M3 1.2 H12 A2 2 0 0 1 14 3.2 V8.3 A2 2 0 0 1 12 10.3 H6.3 L3 12.8 V10.3 A2 2 0 0 1 1 8.3 V3.2 A2 2 0 0 1 3 1.2 Z" stroke="#c9ccd0" stroke-width="1.2" stroke-linejoin="round"/><path d="M3.8 4.3 H11" stroke="#c9ccd0" stroke-width="1.1"/><path d="M3.8 6.6 H7" stroke="#c9ccd0" stroke-width="1.1"/></svg>
<svg style="position:absolute;left:1566.5px;top:844px;" width="15" height="14" viewBox="0 0 15 14" fill="none"><path d="M9.5 12.5 H3 A1.6 1.6 0 0 1 1.4 10.9 V3.9 A1.6 1.6 0 0 1 3 2.3 H11.5 A1.6 1.6 0 0 1 13.1 3.9 V5.5" stroke="#55595d" stroke-width="1.3"/><path d="M4.2 1 V3.5 M10.3 1 V3.5" stroke="#55595d" stroke-width="1.2"/><path d="M3.8 5.6 H10.5 M3.8 8.5 H4.6" stroke="#55595d" stroke-width="1.1"/><path d="M7 10 H13.2 M11.2 8 L13.4 10 L11.2 12" stroke="#55595d" stroke-width="1.2" fill="none"/></svg>
<svg style="position:absolute;left:1586.5px;top:844.5px;" width="17" height="14" viewBox="0 0 17 14" fill="none"><circle cx="6.2" cy="4.3" r="3.2" stroke="#c9ccd0" stroke-width="1.05"/><path d="M1 12.5 C2 9.3 4 8.4 6 8.4 C8 8.4 9.8 9.3 10.6 11" stroke="#c9ccd0" stroke-width="1.1"/><circle cx="12.2" cy="6.6" r="1.8" stroke="#c9ccd0" stroke-width="1.1"/><path d="M10.4 10.4 C11.5 9.9 13.2 9.9 14.4 11.4 L15.6 12.5" stroke="#c9ccd0" stroke-width="1.1"/></svg>
<svg style="position:absolute;left:1608.5px;top:844px;" width="15" height="14" viewBox="0 0 15 14" fill="none"><path d="M1.6 3.8 C2.5 2.3 4.6 1 7.5 1 C10.4 1 12.5 2.3 13.4 3.8 V4.6 H1.6 Z" stroke="#c9ccd0" stroke-width="1.1" stroke-linejoin="round"/><path d="M3.2 5.4 V10 M6 5.4 V10 M9 5.4 V10 M11.8 5.4 V10" stroke="#c9ccd0" stroke-width="1.3"/><rect x="1.5" y="10.6" width="12" height="2.1" rx="0.8" stroke="#c9ccd0" stroke-width="1.1"/></svg>
<svg style="position:absolute;left:1630.5px;top:842.5px;" width="13" height="16" viewBox="0 0 13 16" fill="none"><path d="M1.4 13.8 V2.8 A1.6 1.6 0 0 1 3 1.2 H10 A1.6 1.6 0 0 1 11.6 2.8 V13.8 L10.3 12.6 L9 14.2 L7.6 12.6 L6.3 14.2 L5 12.6 L3.6 14.2 L2.5 12.6 Z" stroke="#c9ccd0" stroke-width="1.1" stroke-linejoin="round"/><path d="M9.4 3.7 C8.2 2.9 7.1 3.5 7.2 4.4 C7.4 5.3 9.6 5.4 9.5 6.5 C9.4 7.5 8 7.7 7 7" stroke="#c9ccd0" stroke-width="0.9"/><path d="M8.3 2.6 V8" stroke="#c9ccd0" stroke-width="0.7"/><path d="M3.1 9.2 H4.8 M3.1 10.6 H9.6" stroke="#c9ccd0" stroke-width="0.9"/></svg>
<svg style="position:absolute;left:1650.5px;top:844.5px;" width="15" height="13" viewBox="0 0 15 13" fill="none"><rect x="1" y="1" width="13" height="11" rx="1.6" stroke="#c9ccd0" stroke-width="1.1"/><path d="M3.2 3.4 L7.5 6.6 L11.8 3.4" stroke="#c9ccd0" stroke-width="1.1" fill="none"/></svg>
<svg style="position:absolute;left:1691px;top:844px;" width="14" height="16" viewBox="0 0 14 16" fill="none"><path d="M9 1.1 H3 A2 2 0 0 0 1 3.1 V12.9 A2 2 0 0 0 3 14.9 H10.5 A2 2 0 0 0 12.5 12.9 V4.6 Z" stroke="#1f7bd8" stroke-width="1.4" stroke-linejoin="round"/><circle cx="10.6" cy="3.2" r="1.1" fill="#fff" stroke="#1f7bd8" stroke-width="0.7"/><circle cx="6.3" cy="9.2" r="3.1" fill="#1f7bd8"/><path d="M6.2 7.8 V9.7 L7.4 10.6" stroke="#fff" stroke-width="0.9"/></svg>
<div style="position:absolute;left:1805px;top:839px;width:87px;height:22px;border:1px solid #2f78c6;border-radius:5px;background:#fff"></div>
<div style="position:absolute;left:1868px;top:839px;width:1px;height:24px;background:#2f78c6"></div>
<svg style="position:absolute;left:1810px;top:843px;" width="16" height="16" viewBox="0 0 16 16" fill="none"><path d="M3.1 6.5 V3 A1.9 1.9 0 0 1 5 1.1 H10.3 L14.6 5.3 V12.9 A1.9 1.9 0 0 1 12.7 14.8 H5 A1.9 1.9 0 0 1 3.1 12.9 V12" stroke="#2a7bd0" stroke-width="1.15" stroke-linejoin="round"/><path d="M10.3 1.1 V3.4 A1.6 1.6 0 0 0 11.9 5 H14.6" stroke="#2a7bd0" stroke-width="1"/><rect x="1" y="7" width="8.8" height="5.4" rx="1.3" fill="#2a7bd0"/><path d="M2.5 11 V8.4 H3.6 A0.7 0.7 0 0 1 3.6 9.8 H2.5 M4.9 8.4 V11 H5.5 A1.1 1.3 0 0 0 5.5 8.4 Z M7.3 11 V8.4 H8.6 M7.3 9.6 H8.3" stroke="#dff0ff" stroke-width="0.55" fill="none"/></svg>
<svg style="position:absolute;left:1874px;top:847px;" width="14" height="10" viewBox="0 0 14 10" fill="none"><path d="M1.5 1.8 L7 7.2 L12.5 1.8" stroke="#2a7bd0" stroke-width="1.4" fill="none"/></svg>
<div style="position:absolute;left:14px;top:898px;width:1888px;height:1px;background:#d5dbe2"></div>
<div style="position:absolute;left:30px;top:874px;width:13.5px;height:13.5px;border:1.3px solid #3f4347;border-radius:3.5px;background:#fff"></div>
<svg style="position:absolute;left:82px;top:871px;" width="17" height="25" viewBox="0 0 17 25" fill="none"><path d="M8 1 C4.6 1 2 3.4 2 7.8 C2 10.5 2.8 12.5 4.3 13.6 L4.3 17.8 C3.4 19.4 1.4 20.6 0.9 21.6 C3.5 23.2 12.2 23.4 15.9 21.4 C15.2 20.4 13.3 19.4 12.4 17.8 L12.1 13.4 C13.4 12.4 14.1 10.4 14.1 7.8 C14.1 3.4 11.6 1 8 1 Z" fill="#333537"/></svg>
<svg style="position:absolute;left:1545.5px;top:876px;" width="15" height="14" viewBox="0 0 15 14" fill="none"><path d="M3 1.2 H12 A2 2 0 0 1 14 3.2 V8.3 A2 2 0 0 1 12 10.3 H6.3 L3 12.8 V10.3 A2 2 0 0 1 1 8.3 V3.2 A2 2 0 0 1 3 1.2 Z" stroke="#c9ccd0" stroke-width="1.2" stroke-linejoin="round"/><path d="M3.8 4.3 H11" stroke="#c9ccd0" stroke-width="1.1"/><path d="M3.8 6.6 H7" stroke="#c9ccd0" stroke-width="1.1"/></svg>
<svg style="position:absolute;left:1566.5px;top:876px;" width="15" height="14" viewBox="0 0 15 14" fill="none"><path d="M9.5 12.5 H3 A1.6 1.6 0 0 1 1.4 10.9 V3.9 A1.6 1.6 0 0 1 3 2.3 H11.5 A1.6 1.6 0 0 1 13.1 3.9 V5.5" stroke="#c9ccd0" stroke-width="1.3"/><path d="M4.2 1 V3.5 M10.3 1 V3.5" stroke="#c9ccd0" stroke-width="1.2"/><path d="M3.8 5.6 H10.5 M3.8 8.5 H4.6" stroke="#c9ccd0" stroke-width="1.1"/><path d="M7 10 H13.2 M11.2 8 L13.4 10 L11.2 12" stroke="#c9ccd0" stroke-width="1.2" fill="none"/></svg>
<svg style="position:absolute;left:1586.5px;top:876.5px;" width="17" height="14" viewBox="0 0 17 14" fill="none"><circle cx="6.2" cy="4.3" r="3.2" stroke="#c9ccd0" stroke-width="1.05"/><path d="M1 12.5 C2 9.3 4 8.4 6 8.4 C8 8.4 9.8 9.3 10.6 11" stroke="#c9ccd0" stroke-width="1.1"/><circle cx="12.2" cy="6.6" r="1.8" stroke="#c9ccd0" stroke-width="1.1"/><path d="M10.4 10.4 C11.5 9.9 13.2 9.9 14.4 11.4 L15.6 12.5" stroke="#c9ccd0" stroke-width="1.1"/></svg>
<svg style="position:absolute;left:1608.5px;top:876px;" width="15" height="14" viewBox="0 0 15 14" fill="none"><path d="M1.6 3.8 C2.5 2.3 4.6 1 7.5 1 C10.4 1 12.5 2.3 13.4 3.8 V4.6 H1.6 Z" stroke="#c9ccd0" stroke-width="1.1" stroke-linejoin="round"/><path d="M3.2 5.4 V10 M6 5.4 V10 M9 5.4 V10 M11.8 5.4 V10" stroke="#c9ccd0" stroke-width="1.3"/><rect x="1.5" y="10.6" width="12" height="2.1" rx="0.8" stroke="#c9ccd0" stroke-width="1.1"/></svg>
<svg style="position:absolute;left:1630.5px;top:874.5px;" width="13" height="16" viewBox="0 0 13 16" fill="none"><path d="M1.4 13.8 V2.8 A1.6 1.6 0 0 1 3 1.2 H10 A1.6 1.6 0 0 1 11.6 2.8 V13.8 L10.3 12.6 L9 14.2 L7.6 12.6 L6.3 14.2 L5 12.6 L3.6 14.2 L2.5 12.6 Z" stroke="#c9ccd0" stroke-width="1.1" stroke-linejoin="round"/><path d="M9.4 3.7 C8.2 2.9 7.1 3.5 7.2 4.4 C7.4 5.3 9.6 5.4 9.5 6.5 C9.4 7.5 8 7.7 7 7" stroke="#c9ccd0" stroke-width="0.9"/><path d="M8.3 2.6 V8" stroke="#c9ccd0" stroke-width="0.7"/><path d="M3.1 9.2 H4.8 M3.1 10.6 H9.6" stroke="#c9ccd0" stroke-width="0.9"/></svg>
<svg style="position:absolute;left:1650.5px;top:876.5px;" width="15" height="13" viewBox="0 0 15 13" fill="none"><rect x="1" y="1" width="13" height="11" rx="1.6" stroke="#c9ccd0" stroke-width="1.1"/><path d="M3.2 3.4 L7.5 6.6 L11.8 3.4" stroke="#c9ccd0" stroke-width="1.1" fill="none"/></svg>
<svg style="position:absolute;left:1691px;top:876px;" width="14" height="16" viewBox="0 0 14 16" fill="none"><path d="M9 1.1 H3 A2 2 0 0 0 1 3.1 V12.9 A2 2 0 0 0 3 14.9 H10.5 A2 2 0 0 0 12.5 12.9 V4.6 Z" stroke="#1f7bd8" stroke-width="1.4" stroke-linejoin="round"/><circle cx="10.6" cy="3.2" r="1.1" fill="#fff" stroke="#1f7bd8" stroke-width="0.7"/><circle cx="6.3" cy="9.2" r="3.1" fill="#1f7bd8"/><path d="M6.2 7.8 V9.7 L7.4 10.6" stroke="#fff" stroke-width="0.9"/></svg>
<div style="position:absolute;left:1805px;top:871px;width:87px;height:22px;border:1px solid #2f78c6;border-radius:5px;background:#fff"></div>
<div style="position:absolute;left:1868px;top:871px;width:1px;height:24px;background:#2f78c6"></div>
<svg style="position:absolute;left:1810px;top:875px;" width="16" height="16" viewBox="0 0 16 16" fill="none"><path d="M3.1 6.5 V3 A1.9 1.9 0 0 1 5 1.1 H10.3 L14.6 5.3 V12.9 A1.9 1.9 0 0 1 12.7 14.8 H5 A1.9 1.9 0 0 1 3.1 12.9 V12" stroke="#2a7bd0" stroke-width="1.15" stroke-linejoin="round"/><path d="M10.3 1.1 V3.4 A1.6 1.6 0 0 0 11.9 5 H14.6" stroke="#2a7bd0" stroke-width="1"/><rect x="1" y="7" width="8.8" height="5.4" rx="1.3" fill="#2a7bd0"/><path d="M2.5 11 V8.4 H3.6 A0.7 0.7 0 0 1 3.6 9.8 H2.5 M4.9 8.4 V11 H5.5 A1.1 1.3 0 0 0 5.5 8.4 Z M7.3 11 V8.4 H8.6 M7.3 9.6 H8.3" stroke="#dff0ff" stroke-width="0.55" fill="none"/></svg>
<svg style="position:absolute;left:1874px;top:879px;" width="14" height="10" viewBox="0 0 14 10" fill="none"><path d="M1.5 1.8 L7 7.2 L12.5 1.8" stroke="#2a7bd0" stroke-width="1.4" fill="none"/></svg>
<div style="position:absolute;left:14px;top:899px;width:1888px;height:32px;background:#eef0f3"></div>
<div style="position:absolute;left:842px;top:939px;width:40px;height:32px;background:#d3d6da;border-radius:5px"></div>
<svg style="position:absolute;left:855px;top:947px;" width="14" height="16" viewBox="0 0 14 16" fill="none"><path d="M9 2.5 L4 8 L9 13.5" stroke="#a3a7ab" stroke-width="1.4" fill="none"/></svg>
<div style="position:absolute;left:890px;top:939px;width:40px;height:32px;background:#164a93;border-radius:5px"></div>
<div style="position:absolute;left:938px;top:939px;width:38px;height:30px;border:1px solid #2a7fd4;border-radius:5px;background:#fff"></div>
<div style="position:absolute;left:986px;top:939px;width:38px;height:30px;border:1px solid #2a7fd4;border-radius:5px;background:#fff"></div>
<svg style="position:absolute;left:1047px;top:947px;" width="14" height="16" viewBox="0 0 14 16" fill="none"><path d="M4 2.5 L9 8 L4 13.5" stroke="#2a7fd4" stroke-width="1.5" fill="none"/></svg>
<svg style="position:absolute;left:1811px;top:950px;" width="12" height="8" viewBox="0 0 12 8" fill="none"><path d="M2 2 L6 6 L10 2" stroke="#2a7fd4" stroke-width="1.3" fill="none"/></svg>
<div style="position:absolute;left:0;top:0;width:1912px;height:988px;will-change:transform">
<div class="t" style="left:97.00px;top:8.00px;font-size:15px;line-height:15px;font-weight:400;color:#676d72;letter-spacing:0.927px;-webkit-text-stroke:0.25px #676d72">People</div>
<div class="t" style="left:189.00px;top:8.00px;font-size:15px;line-height:15px;font-weight:400;color:#676d72;letter-spacing:1.014px;-webkit-text-stroke:0.25px #676d72">Operations</div>
<div class="t" style="left:312.00px;top:8.00px;font-size:15px;line-height:15px;font-weight:400;color:#676d72;letter-spacing:0.592px;-webkit-text-stroke:0.25px #676d72">Work</div>
<div class="t" style="left:391.00px;top:8.00px;font-size:15px;line-height:15px;font-weight:400;color:#676d72;letter-spacing:1.125px;-webkit-text-stroke:0.25px #676d72">Time &amp; attendance</div>
<div class="t" style="left:573.00px;top:8.00px;font-size:15px;line-height:15px;font-weight:400;color:#2a7fd4;letter-spacing:0.914px;-webkit-text-stroke:0.25px #2a7fd4">Payroll</div>
<div class="t" style="left:664.00px;top:8.00px;font-size:15px;line-height:15px;font-weight:400;color:#676d72;letter-spacing:1.268px;-webkit-text-stroke:0.25px #676d72">Invoicing</div>
<div class="t" style="left:773.00px;top:8.00px;font-size:15px;line-height:15px;font-weight:400;color:#676d72;letter-spacing:0.996px;-webkit-text-stroke:0.25px #676d72">Reports</div>
<div class="t" style="left:1590.00px;top:9.00px;font-size:15px;line-height:15px;font-weight:400;color:#a7aaae;letter-spacing:0.607px;">Find anything</div>
<div class="t" style="left:13.00px;top:51.00px;font-size:16px;line-height:16px;font-weight:400;color:#3e4246;letter-spacing:1.108px;">Payroll</div>
<div class="t" style="left:12.60px;top:74.00px;font-size:33px;line-height:33px;font-weight:700;color:#3a3d41;letter-spacing:1.518px;">Pay</div>
<div class="t" style="left:1491.40px;top:92.00px;font-size:16px;line-height:16px;font-weight:700;color:#676b70;letter-spacing:1.053px;">Draft payslips</div>
<div class="t" style="left:1636.30px;top:92.00px;font-size:16px;line-height:16px;font-weight:700;color:#2a7fd4;letter-spacing:1.146px;">Generated payslips</div>
<div class="t" style="left:1829.00px;top:92.00px;font-size:16px;line-height:16px;font-weight:700;color:#676b70;letter-spacing:0.222px;">ABA files</div>
<div class="t" style="left:13.20px;top:139.00px;font-size:14.5px;line-height:14.5px;font-weight:400;color:#46494d;letter-spacing:1.449px;">Generated payslips are ready for payment and emailing to employees.</div>
<div class="t" style="left:564.50px;top:139.00px;font-size:14.5px;line-height:14.5px;font-weight:400;color:#2d86d9;letter-spacing:1.268px;">Need help with payslips?</div>
<div class="t" style="left:22.50px;top:178.00px;font-size:15px;line-height:15px;font-weight:400;color:#333;letter-spacing:0.488px;">carly harki</div>
<div class="t" style="left:204.80px;top:178.00px;font-size:15px;line-height:15px;font-weight:400;color:#a9acaf;letter-spacing:0.357px;">Any period end</div>
<div class="t" style="left:389.40px;top:178.00px;font-size:15px;line-height:15px;font-weight:400;color:#a9acaf;letter-spacing:0.373px;">All batches</div>
<div class="t" style="left:1856.30px;top:178.00px;font-size:15px;line-height:15px;font-weight:700;color:#2a7fd4;letter-spacing:-0.027px;">Filter</div>
<div class="t" style="left:77.90px;top:236.00px;font-size:14.5px;line-height:14.5px;font-weight:400;color:#3b3e42;letter-spacing:2.062px;-webkit-text-stroke:0.3px #3b3e42">Name</div>
<div class="t" style="left:541.20px;top:236.00px;font-size:14.5px;line-height:14.5px;font-weight:400;color:#3b3e42;letter-spacing:0.850px;-webkit-text-stroke:0.3px #3b3e42">Hrs</div>
<div class="t" style="left:670.00px;top:236.00px;font-size:14.5px;line-height:14.5px;font-weight:400;color:#3b3e42;letter-spacing:0.945px;-webkit-text-stroke:0.3px #3b3e42">Gross</div>
<div class="t" style="left:832.60px;top:236.00px;font-size:14.5px;line-height:14.5px;font-weight:400;color:#3b3e42;letter-spacing:0.743px;-webkit-text-stroke:0.3px #3b3e42">Tax</div>
<div class="t" style="left:934.60px;top:236.00px;font-size:14.5px;line-height:14.5px;font-weight:400;color:#3b3e42;letter-spacing:1.728px;-webkit-text-stroke:0.3px #3b3e42">Deducted</div>
<div class="t" style="left:1125.30px;top:236.00px;font-size:14.5px;line-height:14.5px;font-weight:400;color:#3b3e42;letter-spacing:1.282px;-webkit-text-stroke:0.3px #3b3e42">Net</div>
<div class="t" style="left:1245.60px;top:236.00px;font-size:14.5px;line-height:14.5px;font-weight:400;color:#3b3e42;letter-spacing:0.984px;-webkit-text-stroke:0.3px #3b3e42">Super</div>
<div class="t" style="left:1323.30px;top:236.00px;font-size:14.5px;line-height:14.5px;font-weight:400;color:#3b3e42;letter-spacing:1.403px;-webkit-text-stroke:0.3px #3b3e42">Period end</div>
<div class="t" style="left:1441.50px;top:236.00px;font-size:14.5px;line-height:14.5px;font-weight:400;color:#3b3e42;letter-spacing:1.547px;-webkit-text-stroke:0.3px #3b3e42">Pay date</div>
<div class="t" style="left:1685.70px;top:236.00px;font-size:14.5px;line-height:14.5px;font-weight:400;color:#3b3e42;letter-spacing:1.497px;-webkit-text-stroke:0.3px #3b3e42">Timesheet</div>
<div class="t" style="left:1812.00px;top:236.00px;font-size:14.5px;line-height:14.5px;font-weight:400;color:#3b3e42;letter-spacing:1.387px;-webkit-text-stroke:0.3px #3b3e42">Payslip</div>
<div class="t" style="left:107.70px;top:266.00px;font-size:14.5px;line-height:14.5px;font-weight:400;color:#2c7fd2;letter-spacing:0.705px;">Carly Lygon (13)</div>
<div class="t" style="left:545.90px;top:266.00px;font-size:15px;line-height:15px;font-weight:400;color:#444749;letter-spacing:0.301px;">76.00</div>
<div class="t" style="left:670.80px;top:266.00px;font-size:15px;line-height:15px;font-weight:400;color:#444749;letter-spacing:-0.849px;">$3,471.16</div>
<div class="t" style="left:819.40px;top:266.00px;font-size:15px;line-height:15px;font-weight:400;color:#444749;letter-spacing:0.437px;">$832.00</div>
<div class="t" style="left:988.30px;top:266.00px;font-size:15px;line-height:15px;font-weight:400;color:#444749;letter-spacing:0.476px;">$5.00</div>
<div class="t" style="left:1104.30px;top:266.00px;font-size:15px;line-height:15px;font-weight:400;color:#444749;letter-spacing:-0.186px;">$2,634.16</div>
<div class="t" style="left:1250.70px;top:266.00px;font-size:15px;line-height:15px;font-weight:400;color:#444749;letter-spacing:0.487px;">$364.47</div>
<div class="t" style="left:1334.00px;top:266.00px;font-size:15px;line-height:15px;font-weight:400;color:#444749;letter-spacing:0.358px;">20 Nov 2022</div>
<div class="t" style="left:1440.50px;top:266.00px;font-size:15px;line-height:15px;font-weight:400;color:#444749;letter-spacing:0.308px;">23 Nov 2022</div>
<div class="t" style="left:1708.70px;top:267.00px;font-size:15px;line-height:15px;font-weight:400;color:#1f7bd8;letter-spacing:-0.234px;-webkit-text-stroke:0.3px #1f7bd8">x 2</div>
<div class="t" style="left:1838.33px;top:267.00px;font-size:15px;line-height:15px;font-weight:400;color:#2a7bd0;letter-spacing:0.000px;-webkit-text-stroke:0.3px #2a7bd0">41</div>
<div class="t" style="left:107.70px;top:298.00px;font-size:14.5px;line-height:14.5px;font-weight:400;color:#2c7fd2;letter-spacing:0.684px;">Carly Harkin (21)</div>
<div class="t" style="left:545.90px;top:298.00px;font-size:15px;line-height:15px;font-weight:400;color:#444749;letter-spacing:0.301px;">76.00</div>
<div class="t" style="left:662.60px;top:298.00px;font-size:15px;line-height:15px;font-weight:400;color:#444749;letter-spacing:0.176px;">$3,076.92</div>
<div class="t" style="left:817.80px;top:298.00px;font-size:15px;line-height:15px;font-weight:400;color:#444749;letter-spacing:0.704px;">$696.00</div>
<div class="t" style="left:988.30px;top:298.00px;font-size:15px;line-height:15px;font-weight:400;color:#b4b7ba;letter-spacing:0.476px;">$0.00</div>
<div class="t" style="left:1100.40px;top:298.00px;font-size:15px;line-height:15px;font-weight:400;color:#444749;letter-spacing:0.301px;">$2,380.92</div>
<div class="t" style="left:1251.10px;top:298.00px;font-size:15px;line-height:15px;font-weight:400;color:#444749;letter-spacing:0.420px;">$323.08</div>
<div class="t" style="left:1334.00px;top:298.00px;font-size:15px;line-height:15px;font-weight:400;color:#444749;letter-spacing:0.358px;">20 Nov 2022</div>
<div class="t" style="left:1440.50px;top:298.00px;font-size:15px;line-height:15px;font-weight:400;color:#444749;letter-spacing:0.308px;">23 Nov 2022</div>
<div class="t" style="left:1708.70px;top:299.00px;font-size:15px;line-height:15px;font-weight:400;color:#1f7bd8;letter-spacing:-0.234px;-webkit-text-stroke:0.3px #1f7bd8">x 2</div>
<div class="t" style="left:1838.33px;top:299.00px;font-size:15px;line-height:15px;font-weight:400;color:#2a7bd0;letter-spacing:0.000px;-webkit-text-stroke:0.3px #2a7bd0">35</div>
<div class="t" style="left:107.70px;top:330.00px;font-size:14.5px;line-height:14.5px;font-weight:400;color:#2c7fd2;letter-spacing:0.705px;">Carly Lygon (13)</div>
<div class="t" style="left:545.90px;top:330.00px;font-size:15px;line-height:15px;font-weight:400;color:#444749;letter-spacing:0.301px;">76.00</div>
<div class="t" style="left:670.80px;top:330.00px;font-size:15px;line-height:15px;font-weight:400;color:#444749;letter-spacing:-0.849px;">$3,471.16</div>
<div class="t" style="left:819.40px;top:330.00px;font-size:15px;line-height:15px;font-weight:400;color:#444749;letter-spacing:0.437px;">$832.00</div>
<div class="t" style="left:988.30px;top:330.00px;font-size:15px;line-height:15px;font-weight:400;color:#444749;letter-spacing:0.476px;">$5.00</div>
<div class="t" style="left:1104.30px;top:330.00px;font-size:15px;line-height:15px;font-weight:400;color:#444749;letter-spacing:-0.186px;">$2,634.16</div>
<div class="t" style="left:1250.70px;top:330.00px;font-size:15px;line-height:15px;font-weight:400;color:#444749;letter-spacing:0.487px;">$364.47</div>
<div class="t" style="left:1342.00px;top:330.00px;font-size:15px;line-height:15px;font-weight:400;color:#444749;letter-spacing:0.436px;">4 Dec 2022</div>
<div class="t" style="left:1449.00px;top:330.00px;font-size:15px;line-height:15px;font-weight:400;color:#444749;letter-spacing:0.325px;">7 Dec 2022</div>
<div class="t" style="left:1708.70px;top:331.00px;font-size:15px;line-height:15px;font-weight:400;color:#1f7bd8;letter-spacing:-0.234px;-webkit-text-stroke:0.3px #1f7bd8">x 2</div>
<div class="t" style="left:1834.16px;top:331.00px;font-size:15px;line-height:15px;font-weight:400;color:#2a7bd0;letter-spacing:0.000px;-webkit-text-stroke:0.3px #2a7bd0">221</div>
<div class="t" style="left:107.70px;top:362.00px;font-size:14.5px;line-height:14.5px;font-weight:400;color:#2c7fd2;letter-spacing:0.684px;">Carly Harkin (21)</div>
<div class="t" style="left:545.90px;top:362.00px;font-size:15px;line-height:15px;font-weight:400;color:#444749;letter-spacing:0.301px;">76.00</div>
<div class="t" style="left:662.60px;top:362.00px;font-size:15px;line-height:15px;font-weight:400;color:#444749;letter-spacing:0.176px;">$3,076.92</div>
<div class="t" style="left:817.80px;top:362.00px;font-size:15px;line-height:15px;font-weight:400;color:#444749;letter-spacing:0.704px;">$696.00</div>
<div class="t" style="left:988.30px;top:362.00px;font-size:15px;line-height:15px;font-weight:400;color:#b4b7ba;letter-spacing:0.476px;">$0.00</div>
<div class="t" style="left:1100.40px;top:362.00px;font-size:15px;line-height:15px;font-weight:400;color:#444749;letter-spacing:0.301px;">$2,380.92</div>
<div class="t" style="left:1251.10px;top:362.00px;font-size:15px;line-height:15px;font-weight:400;color:#444749;letter-spacing:0.420px;">$323.08</div>
<div class="t" style="left:1342.00px;top:362.00px;font-size:15px;line-height:15px;font-weight:400;color:#444749;letter-spacing:0.436px;">4 Dec 2022</div>
<div class="t" style="left:1449.00px;top:362.00px;font-size:15px;line-height:15px;font-weight:400;color:#444749;letter-spacing:0.325px;">7 Dec 2022</div>
<div class="t" style="left:1708.70px;top:363.00px;font-size:15px;line-height:15px;font-weight:400;color:#1f7bd8;letter-spacing:-0.234px;-webkit-text-stroke:0.3px #1f7bd8">x 2</div>
<div class="t" style="left:1834.16px;top:363.00px;font-size:15px;line-height:15px;font-weight:400;color:#2a7bd0;letter-spacing:0.000px;-webkit-text-stroke:0.3px #2a7bd0">215</div>
<div class="t" style="left:107.70px;top:394.00px;font-size:14.5px;line-height:14.5px;font-weight:400;color:#2c7fd2;letter-spacing:0.705px;">Carly Lygon (13)</div>
<div class="t" style="left:545.90px;top:394.00px;font-size:15px;line-height:15px;font-weight:400;color:#444749;letter-spacing:0.301px;">76.00</div>
<div class="t" style="left:670.80px;top:394.00px;font-size:15px;line-height:15px;font-weight:400;color:#444749;letter-spacing:-0.849px;">$3,471.16</div>
<div class="t" style="left:819.40px;top:394.00px;font-size:15px;line-height:15px;font-weight:400;color:#444749;letter-spacing:0.437px;">$832.00</div>
<div class="t" style="left:988.30px;top:394.00px;font-size:15px;line-height:15px;font-weight:400;color:#444749;letter-spacing:0.476px;">$5.00</div>
<div class="t" style="left:1104.30px;top:394.00px;font-size:15px;line-height:15px;font-weight:400;color:#444749;letter-spacing:-0.186px;">$2,634.16</div>
<div class="t" style="left:1250.70px;top:394.00px;font-size:15px;line-height:15px;font-weight:400;color:#444749;letter-spacing:0.487px;">$364.47</div>
<div class="t" style="left:1335.70px;top:394.00px;font-size:15px;line-height:15px;font-weight:400;color:#444749;letter-spacing:0.188px;">18 Dec 2022</div>
<div class="t" style="left:1440.30px;top:394.00px;font-size:15px;line-height:15px;font-weight:400;color:#444749;letter-spacing:0.328px;">22 Dec 2022</div>
<div class="t" style="left:1708.70px;top:395.00px;font-size:15px;line-height:15px;font-weight:400;color:#1f7bd8;letter-spacing:-0.234px;-webkit-text-stroke:0.3px #1f7bd8">x 2</div>
<div class="t" style="left:1834.16px;top:395.00px;font-size:15px;line-height:15px;font-weight:400;color:#2a7bd0;letter-spacing:0.000px;-webkit-text-stroke:0.3px #2a7bd0">389</div>
<div class="t" style="left:107.70px;top:426.00px;font-size:14.5px;line-height:14.5px;font-weight:400;color:#2c7fd2;letter-spacing:0.684px;">Carly Harkin (21)</div>
<div class="t" style="left:545.90px;top:426.00px;font-size:15px;line-height:15px;font-weight:400;color:#444749;letter-spacing:0.301px;">76.00</div>
<div class="t" style="left:662.60px;top:426.00px;font-size:15px;line-height:15px;font-weight:400;color:#444749;letter-spacing:0.176px;">$3,076.92</div>
<div class="t" style="left:817.80px;top:426.00px;font-size:15px;line-height:15px;font-weight:400;color:#444749;letter-spacing:0.704px;">$696.00</div>
<div class="t" style="left:988.30px;top:426.00px;font-size:15px;line-height:15px;font-weight:400;color:#b4b7ba;letter-spacing:0.476px;">$0.00</div>
<div class="t" style="left:1100.40px;top:426.00px;font-size:15px;line-height:15px;font-weight:400;color:#444749;letter-spacing:0.301px;">$2,380.92</div>
<div class="t" style="left:1251.10px;top:426.00px;font-size:15px;line-height:15px;font-weight:400;color:#444749;letter-spacing:0.420px;">$323.08</div>
<div class="t" style="left:1335.70px;top:426.00px;font-size:15px;line-height:15px;font-weight:400;color:#444749;letter-spacing:0.188px;">18 Dec 2022</div>
<div class="t" style="left:1440.30px;top:426.00px;font-size:15px;line-height:15px;font-weight:400;color:#444749;letter-spacing:0.328px;">22 Dec 2022</div>
<div class="t" style="left:1708.70px;top:427.00px;font-size:15px;line-height:15px;font-weight:400;color:#1f7bd8;letter-spacing:-0.234px;-webkit-text-stroke:0.3px #1f7bd8">x 2</div>
<div class="t" style="left:1834.16px;top:427.00px;font-size:15px;line-height:15px;font-weight:400;color:#2a7bd0;letter-spacing:0.000px;-webkit-text-stroke:0.3px #2a7bd0">396</div>
<div class="t" style="left:107.70px;top:458.00px;font-size:14.5px;line-height:14.5px;font-weight:400;color:#2c7fd2;letter-spacing:0.705px;">Carly Lygon (13)</div>
<div class="t" style="left:545.90px;top:458.00px;font-size:15px;line-height:15px;font-weight:400;color:#444749;letter-spacing:0.301px;">76.00</div>
<div class="t" style="left:670.80px;top:458.00px;font-size:15px;line-height:15px;font-weight:400;color:#444749;letter-spacing:-0.849px;">$3,471.16</div>
<div class="t" style="left:819.40px;top:458.00px;font-size:15px;line-height:15px;font-weight:400;color:#444749;letter-spacing:0.437px;">$832.00</div>
<div class="t" style="left:988.30px;top:458.00px;font-size:15px;line-height:15px;font-weight:400;color:#444749;letter-spacing:0.476px;">$5.00</div>
<div class="t" style="left:1104.30px;top:458.00px;font-size:15px;line-height:15px;font-weight:400;color:#444749;letter-spacing:-0.186px;">$2,634.16</div>
<div class="t" style="left:1250.70px;top:458.00px;font-size:15px;line-height:15px;font-weight:400;color:#444749;letter-spacing:0.487px;">$364.47</div>
<div class="t" style="left:1336.70px;top:458.00px;font-size:15px;line-height:15px;font-weight:400;color:#444749;letter-spacing:0.421px;">23 Apr 2023</div>
<div class="t" style="left:1442.10px;top:458.00px;font-size:15px;line-height:15px;font-weight:400;color:#444749;letter-spacing:0.481px;">25 Apr 2023</div>
<div class="t" style="left:1708.70px;top:459.00px;font-size:15px;line-height:15px;font-weight:400;color:#1f7bd8;letter-spacing:-0.234px;-webkit-text-stroke:0.3px #1f7bd8">x 2</div>
<div class="t" style="left:1834.16px;top:459.00px;font-size:15px;line-height:15px;font-weight:400;color:#2a7bd0;letter-spacing:0.000px;-webkit-text-stroke:0.3px #2a7bd0">705</div>
<div class="t" style="left:107.70px;top:490.00px;font-size:14.5px;line-height:14.5px;font-weight:400;color:#2c7fd2;letter-spacing:0.684px;">Carly Harkin (21)</div>
<div class="t" style="left:545.90px;top:490.00px;font-size:15px;line-height:15px;font-weight:400;color:#444749;letter-spacing:0.301px;">76.00</div>
<div class="t" style="left:662.60px;top:490.00px;font-size:15px;line-height:15px;font-weight:400;color:#444749;letter-spacing:0.176px;">$3,076.92</div>
<div class="t" style="left:817.80px;top:490.00px;font-size:15px;line-height:15px;font-weight:400;color:#444749;letter-spacing:0.704px;">$696.00</div>
<div class="t" style="left:988.30px;top:490.00px;font-size:15px;line-height:15px;font-weight:400;color:#b4b7ba;letter-spacing:0.476px;">$0.00</div>
<div class="t" style="left:1100.40px;top:490.00px;font-size:15px;line-height:15px;font-weight:400;color:#444749;letter-spacing:0.301px;">$2,380.92</div>
<div class="t" style="left:1251.10px;top:490.00px;font-size:15px;line-height:15px;font-weight:400;color:#444749;letter-spacing:0.420px;">$323.08</div>
<div class="t" style="left:1336.70px;top:490.00px;font-size:15px;line-height:15px;font-weight:400;color:#444749;letter-spacing:0.421px;">23 Apr 2023</div>
<div class="t" style="left:1442.10px;top:490.00px;font-size:15px;line-height:15px;font-weight:400;color:#444749;letter-spacing:0.481px;">25 Apr 2023</div>
<div class="t" style="left:1708.70px;top:491.00px;font-size:15px;line-height:15px;font-weight:400;color:#1f7bd8;letter-spacing:-0.234px;-webkit-text-stroke:0.3px #1f7bd8">x 2</div>
<div class="t" style="left:1834.16px;top:491.00px;font-size:15px;line-height:15px;font-weight:400;color:#2a7bd0;letter-spacing:0.000px;-webkit-text-stroke:0.3px #2a7bd0">698</div>
<div class="t" style="left:107.70px;top:522.00px;font-size:14.5px;line-height:14.5px;font-weight:400;color:#2c7fd2;letter-spacing:0.705px;">Carly Lygon (13)</div>
<div class="t" style="left:545.90px;top:522.00px;font-size:15px;line-height:15px;font-weight:400;color:#444749;letter-spacing:0.301px;">76.00</div>
<div class="t" style="left:670.80px;top:522.00px;font-size:15px;line-height:15px;font-weight:400;color:#444749;letter-spacing:-0.849px;">$3,471.16</div>
<div class="t" style="left:819.40px;top:522.00px;font-size:15px;line-height:15px;font-weight:400;color:#444749;letter-spacing:0.437px;">$832.00</div>
<div class="t" style="left:988.30px;top:522.00px;font-size:15px;line-height:15px;font-weight:400;color:#444749;letter-spacing:0.476px;">$5.00</div>
<div class="t" style="left:1104.30px;top:522.00px;font-size:15px;line-height:15px;font-weight:400;color:#444749;letter-spacing:-0.186px;">$2,634.16</div>
<div class="t" style="left:1250.70px;top:522.00px;font-size:15px;line-height:15px;font-weight:400;color:#444749;letter-spacing:0.487px;">$364.47</div>
<div class="t" style="left:1340.40px;top:522.00px;font-size:15px;line-height:15px;font-weight:400;color:#444749;letter-spacing:0.429px;">7 May 2023</div>
<div class="t" style="left:1445.60px;top:522.00px;font-size:15px;line-height:15px;font-weight:400;color:#444749;letter-spacing:0.518px;">9 May 2023</div>
<div class="t" style="left:1708.70px;top:523.00px;font-size:15px;line-height:15px;font-weight:400;color:#1f7bd8;letter-spacing:-0.234px;-webkit-text-stroke:0.3px #1f7bd8">x 2</div>
<div class="t" style="left:1834.16px;top:523.00px;font-size:15px;line-height:15px;font-weight:400;color:#2a7bd0;letter-spacing:0.000px;-webkit-text-stroke:0.3px #2a7bd0">730</div>
<div class="t" style="left:107.70px;top:554.00px;font-size:14.5px;line-height:14.5px;font-weight:400;color:#2c7fd2;letter-spacing:0.684px;">Carly Harkin (21)</div>
<div class="t" style="left:545.90px;top:554.00px;font-size:15px;line-height:15px;font-weight:400;color:#444749;letter-spacing:0.301px;">76.00</div>
<div class="t" style="left:662.60px;top:554.00px;font-size:15px;line-height:15px;font-weight:400;color:#444749;letter-spacing:0.176px;">$3,076.92</div>
<div class="t" style="left:817.80px;top:554.00px;font-size:15px;line-height:15px;font-weight:400;color:#444749;letter-spacing:0.704px;">$696.00</div>
<div class="t" style="left:988.30px;top:554.00px;font-size:15px;line-height:15px;font-weight:400;color:#b4b7ba;letter-spacing:0.476px;">$0.00</div>
<div class="t" style="left:1100.40px;top:554.00px;font-size:15px;line-height:15px;font-weight:400;color:#444749;letter-spacing:0.301px;">$2,380.92</div>
<div class="t" style="left:1251.10px;top:554.00px;font-size:15px;line-height:15px;font-weight:400;color:#444749;letter-spacing:0.420px;">$323.08</div>
<div class="t" style="left:1340.40px;top:554.00px;font-size:15px;line-height:15px;font-weight:400;color:#444749;letter-spacing:0.429px;">7 May 2023</div>
<div class="t" style="left:1445.60px;top:554.00px;font-size:15px;line-height:15px;font-weight:400;color:#444749;letter-spacing:0.518px;">9 May 2023</div>
<div class="t" style="left:1708.70px;top:555.00px;font-size:15px;line-height:15px;font-weight:400;color:#1f7bd8;letter-spacing:-0.234px;-webkit-text-stroke:0.3px #1f7bd8">x 2</div>
<div class="t" style="left:1834.16px;top:555.00px;font-size:15px;line-height:15px;font-weight:400;color:#2a7bd0;letter-spacing:0.000px;-webkit-text-stroke:0.3px #2a7bd0">712</div>
<div class="t" style="left:107.70px;top:586.00px;font-size:14.5px;line-height:14.5px;font-weight:400;color:#2c7fd2;letter-spacing:0.705px;">Carly Lygon (13)</div>
<div class="t" style="left:545.90px;top:586.00px;font-size:15px;line-height:15px;font-weight:400;color:#444749;letter-spacing:0.301px;">76.00</div>
<div class="t" style="left:670.80px;top:586.00px;font-size:15px;line-height:15px;font-weight:400;color:#444749;letter-spacing:-0.849px;">$3,471.16</div>
<div class="t" style="left:819.40px;top:586.00px;font-size:15px;line-height:15px;font-weight:400;color:#444749;letter-spacing:0.437px;">$832.00</div>
<div class="t" style="left:988.30px;top:586.00px;font-size:15px;line-height:15px;font-weight:400;color:#444749;letter-spacing:0.476px;">$5.00</div>
<div class="t" style="left:1104.30px;top:586.00px;font-size:15px;line-height:15px;font-weight:400;color:#444749;letter-spacing:-0.186px;">$2,634.16</div>
<div class="t" style="left:1250.70px;top:586.00px;font-size:15px;line-height:15px;font-weight:400;color:#444749;letter-spacing:0.487px;">$364.47</div>
<div class="t" style="left:1335.10px;top:586.00px;font-size:15px;line-height:15px;font-weight:400;color:#444749;letter-spacing:0.082px;">21 May 2023</div>
<div class="t" style="left:1439.40px;top:586.00px;font-size:15px;line-height:15px;font-weight:400;color:#444749;letter-spacing:-0.027px;">24 May 20…</div>
<div class="t" style="left:1708.70px;top:587.00px;font-size:15px;line-height:15px;font-weight:400;color:#1f7bd8;letter-spacing:-0.234px;-webkit-text-stroke:0.3px #1f7bd8">x 2</div>
<div class="t" style="left:1829.49px;top:587.00px;font-size:15px;line-height:15px;font-weight:400;color:#2a7bd0;letter-spacing:0.000px;-webkit-text-stroke:0.3px #2a7bd0">1052</div>
<div class="t" style="left:107.70px;top:618.00px;font-size:14.5px;line-height:14.5px;font-weight:400;color:#2c7fd2;letter-spacing:0.684px;">Carly Harkin (21)</div>
<div class="t" style="left:545.90px;top:618.00px;font-size:15px;line-height:15px;font-weight:400;color:#444749;letter-spacing:0.301px;">76.00</div>
<div class="t" style="left:662.60px;top:618.00px;font-size:15px;line-height:15px;font-weight:400;color:#444749;letter-spacing:0.176px;">$3,076.92</div>
<div class="t" style="left:817.80px;top:618.00px;font-size:15px;line-height:15px;font-weight:400;color:#444749;letter-spacing:0.704px;">$696.00</div>
<div class="t" style="left:988.30px;top:618.00px;font-size:15px;line-height:15px;font-weight:400;color:#b4b7ba;letter-spacing:0.476px;">$0.00</div>
<div class="t" style="left:1100.40px;top:618.00px;font-size:15px;line-height:15px;font-weight:400;color:#444749;letter-spacing:0.301px;">$2,380.92</div>
<div class="t" style="left:1251.10px;top:618.00px;font-size:15px;line-height:15px;font-weight:400;color:#444749;letter-spacing:0.420px;">$323.08</div>
<div class="t" style="left:1335.10px;top:618.00px;font-size:15px;line-height:15px;font-weight:400;color:#444749;letter-spacing:0.082px;">21 May 2023</div>
<div class="t" style="left:1439.40px;top:618.00px;font-size:15px;line-height:15px;font-weight:400;color:#444749;letter-spacing:-0.027px;">24 May 20…</div>
<div class="t" style="left:1708.70px;top:619.00px;font-size:15px;line-height:15px;font-weight:400;color:#1f7bd8;letter-spacing:-0.234px;-webkit-text-stroke:0.3px #1f7bd8">x 2</div>
<div class="t" style="left:1829.49px;top:619.00px;font-size:15px;line-height:15px;font-weight:400;color:#2a7bd0;letter-spacing:0.000px;-webkit-text-stroke:0.3px #2a7bd0">1054</div>
<div class="t" style="left:107.70px;top:650.00px;font-size:14.5px;line-height:14.5px;font-weight:400;color:#2c7fd2;letter-spacing:0.705px;">Carly Lygon (13)</div>
<div class="t" style="left:545.90px;top:650.00px;font-size:15px;line-height:15px;font-weight:400;color:#444749;letter-spacing:0.301px;">76.00</div>
<div class="t" style="left:670.80px;top:650.00px;font-size:15px;line-height:15px;font-weight:400;color:#444749;letter-spacing:-0.849px;">$3,471.16</div>
<div class="t" style="left:819.40px;top:650.00px;font-size:15px;line-height:15px;font-weight:400;color:#444749;letter-spacing:0.437px;">$832.00</div>
<div class="t" style="left:988.30px;top:650.00px;font-size:15px;line-height:15px;font-weight:400;color:#444749;letter-spacing:0.476px;">$5.00</div>
<div class="t" style="left:1104.30px;top:650.00px;font-size:15px;line-height:15px;font-weight:400;color:#444749;letter-spacing:-0.186px;">$2,634.16</div>
<div class="t" style="left:1254.60px;top:650.00px;font-size:15px;line-height:15px;font-weight:400;color:#444749;letter-spacing:-0.163px;">$381.83</div>
<div class="t" style="left:1343.90px;top:650.00px;font-size:15px;line-height:15px;font-weight:400;color:#444749;letter-spacing:0.501px;">4 Jun 2023</div>
<div class="t" style="left:1454.80px;top:650.00px;font-size:15px;line-height:15px;font-weight:400;color:#444749;letter-spacing:0.513px;">4 Jul 2023</div>
<div class="t" style="left:1708.70px;top:651.00px;font-size:15px;line-height:15px;font-weight:400;color:#1f7bd8;letter-spacing:-0.234px;-webkit-text-stroke:0.3px #1f7bd8">x 2</div>
<div class="t" style="left:1829.49px;top:651.00px;font-size:15px;line-height:15px;font-weight:400;color:#2a7bd0;letter-spacing:0.000px;-webkit-text-stroke:0.3px #2a7bd0">1245</div>
<div class="t" style="left:107.70px;top:682.00px;font-size:14.5px;line-height:14.5px;font-weight:400;color:#2c7fd2;letter-spacing:0.705px;">Carly Lygon (13)</div>
<div class="t" style="left:545.90px;top:682.00px;font-size:15px;line-height:15px;font-weight:400;color:#444749;letter-spacing:0.301px;">76.00</div>
<div class="t" style="left:670.80px;top:682.00px;font-size:15px;line-height:15px;font-weight:400;color:#444749;letter-spacing:-0.849px;">$3,471.16</div>
<div class="t" style="left:819.40px;top:682.00px;font-size:15px;line-height:15px;font-weight:400;color:#444749;letter-spacing:0.437px;">$832.00</div>
<div class="t" style="left:988.30px;top:682.00px;font-size:15px;line-height:15px;font-weight:400;color:#444749;letter-spacing:0.476px;">$5.00</div>
<div class="t" style="left:1104.30px;top:682.00px;font-size:15px;line-height:15px;font-weight:400;color:#444749;letter-spacing:-0.186px;">$2,634.16</div>
<div class="t" style="left:1254.60px;top:682.00px;font-size:15px;line-height:15px;font-weight:400;color:#444749;letter-spacing:-0.163px;">$381.83</div>
<div class="t" style="left:1337.10px;top:682.00px;font-size:15px;line-height:15px;font-weight:400;color:#444749;letter-spacing:0.297px;">18 Jun 2023</div>
<div class="t" style="left:1454.80px;top:682.00px;font-size:15px;line-height:15px;font-weight:400;color:#444749;letter-spacing:0.513px;">4 Jul 2023</div>
<div class="t" style="left:1708.70px;top:683.00px;font-size:15px;line-height:15px;font-weight:400;color:#1f7bd8;letter-spacing:-0.234px;-webkit-text-stroke:0.3px #1f7bd8">x 2</div>
<div class="t" style="left:1829.49px;top:683.00px;font-size:15px;line-height:15px;font-weight:400;color:#2a7bd0;letter-spacing:0.000px;-webkit-text-stroke:0.3px #2a7bd0">1272</div>
<div class="t" style="left:107.70px;top:714.00px;font-size:14.5px;line-height:14.5px;font-weight:400;color:#2c7fd2;letter-spacing:0.705px;">Carly Lygon (13)</div>
<div class="t" style="left:545.90px;top:714.00px;font-size:15px;line-height:15px;font-weight:400;color:#444749;letter-spacing:0.301px;">76.00</div>
<div class="t" style="left:670.80px;top:714.00px;font-size:15px;line-height:15px;font-weight:400;color:#444749;letter-spacing:-0.849px;">$3,471.16</div>
<div class="t" style="left:819.40px;top:714.00px;font-size:15px;line-height:15px;font-weight:400;color:#444749;letter-spacing:0.437px;">$832.00</div>
<div class="t" style="left:988.30px;top:714.00px;font-size:15px;line-height:15px;font-weight:400;color:#444749;letter-spacing:0.476px;">$5.00</div>
<div class="t" style="left:1104.30px;top:714.00px;font-size:15px;line-height:15px;font-weight:400;color:#444749;letter-spacing:-0.186px;">$2,634.16</div>
<div class="t" style="left:1254.60px;top:714.00px;font-size:15px;line-height:15px;font-weight:400;color:#444749;letter-spacing:-0.163px;">$381.83</div>
<div class="t" style="left:1349.60px;top:714.00px;font-size:15px;line-height:15px;font-weight:400;color:#444749;letter-spacing:0.425px;">2 Jul 2023</div>
<div class="t" style="left:1454.80px;top:714.00px;font-size:15px;line-height:15px;font-weight:400;color:#444749;letter-spacing:0.513px;">4 Jul 2023</div>
<div class="t" style="left:1708.70px;top:715.00px;font-size:15px;line-height:15px;font-weight:400;color:#1f7bd8;letter-spacing:-0.234px;-webkit-text-stroke:0.3px #1f7bd8">x 2</div>
<div class="t" style="left:1829.49px;top:715.00px;font-size:15px;line-height:15px;font-weight:400;color:#2a7bd0;letter-spacing:0.000px;-webkit-text-stroke:0.3px #2a7bd0">1316</div>
<div class="t" style="left:107.70px;top:746.00px;font-size:14.5px;line-height:14.5px;font-weight:400;color:#2c7fd2;letter-spacing:0.684px;">Carly Harkin (21)</div>
<div class="t" style="left:545.90px;top:746.00px;font-size:15px;line-height:15px;font-weight:400;color:#444749;letter-spacing:0.301px;">76.00</div>
<div class="t" style="left:662.60px;top:746.00px;font-size:15px;line-height:15px;font-weight:400;color:#444749;letter-spacing:0.176px;">$3,076.92</div>
<div class="t" style="left:817.80px;top:746.00px;font-size:15px;line-height:15px;font-weight:400;color:#444749;letter-spacing:0.704px;">$696.00</div>
<div class="t" style="left:988.30px;top:746.00px;font-size:15px;line-height:15px;font-weight:400;color:#b4b7ba;letter-spacing:0.476px;">$0.00</div>
<div class="t" style="left:1100.40px;top:746.00px;font-size:15px;line-height:15px;font-weight:400;color:#444749;letter-spacing:0.301px;">$2,380.92</div>
<div class="t" style="left:1250.40px;top:746.00px;font-size:15px;line-height:15px;font-weight:400;color:#444749;letter-spacing:0.537px;">$338.46</div>
<div class="t" style="left:1343.90px;top:746.00px;font-size:15px;line-height:15px;font-weight:400;color:#444749;letter-spacing:0.501px;">4 Jun 2023</div>
<div class="t" style="left:1454.80px;top:746.00px;font-size:15px;line-height:15px;font-weight:400;color:#444749;letter-spacing:0.513px;">4 Jul 2023</div>
<div class="t" style="left:1708.70px;top:747.00px;font-size:15px;line-height:15px;font-weight:400;color:#1f7bd8;letter-spacing:-0.234px;-webkit-text-stroke:0.3px #1f7bd8">x 2</div>
<div class="t" style="left:1829.49px;top:747.00px;font-size:15px;line-height:15px;font-weight:400;color:#2a7bd0;letter-spacing:0.000px;-webkit-text-stroke:0.3px #2a7bd0">1243</div>
<div class="t" style="left:107.70px;top:778.00px;font-size:14.5px;line-height:14.5px;font-weight:400;color:#2c7fd2;letter-spacing:0.684px;">Carly Harkin (21)</div>
<div class="t" style="left:545.90px;top:778.00px;font-size:15px;line-height:15px;font-weight:400;color:#444749;letter-spacing:0.301px;">76.00</div>
<div class="t" style="left:662.60px;top:778.00px;font-size:15px;line-height:15px;font-weight:400;color:#444749;letter-spacing:0.176px;">$3,076.92</div>
<div class="t" style="left:817.80px;top:778.00px;font-size:15px;line-height:15px;font-weight:400;color:#444749;letter-spacing:0.704px;">$696.00</div>
<div class="t" style="left:988.30px;top:778.00px;font-size:15px;line-height:15px;font-weight:400;color:#b4b7ba;letter-spacing:0.476px;">$0.00</div>
<div class="t" style="left:1100.40px;top:778.00px;font-size:15px;line-height:15px;font-weight:400;color:#444749;letter-spacing:0.301px;">$2,380.92</div>
<div class="t" style="left:1250.40px;top:778.00px;font-size:15px;line-height:15px;font-weight:400;color:#444749;letter-spacing:0.537px;">$338.46</div>
<div class="t" style="left:1337.10px;top:778.00px;font-size:15px;line-height:15px;font-weight:400;color:#444749;letter-spacing:0.297px;">18 Jun 2023</div>
<div class="t" style="left:1454.80px;top:778.00px;font-size:15px;line-height:15px;font-weight:400;color:#444749;letter-spacing:0.513px;">4 Jul 2023</div>
<div class="t" style="left:1708.70px;top:779.00px;font-size:15px;line-height:15px;font-weight:400;color:#1f7bd8;letter-spacing:-0.234px;-webkit-text-stroke:0.3px #1f7bd8">x 2</div>
<div class="t" style="left:1829.49px;top:779.00px;font-size:15px;line-height:15px;font-weight:400;color:#2a7bd0;letter-spacing:0.000px;-webkit-text-stroke:0.3px #2a7bd0">1277</div>
<div class="t" style="left:107.70px;top:810.00px;font-size:14.5px;line-height:14.5px;font-weight:400;color:#2c7fd2;letter-spacing:0.684px;">Carly Harkin (21)</div>
<div class="t" style="left:545.90px;top:810.00px;font-size:15px;line-height:15px;font-weight:400;color:#444749;letter-spacing:0.301px;">76.00</div>
<div class="t" style="left:665.60px;top:810.00px;font-size:15px;line-height:15px;font-weight:400;color:#444749;letter-spacing:-0.199px;">$3,184.62</div>
<div class="t" style="left:819.20px;top:810.00px;font-size:15px;line-height:15px;font-weight:400;color:#444749;letter-spacing:0.470px;">$734.00</div>
<div class="t" style="left:988.30px;top:810.00px;font-size:15px;line-height:15px;font-weight:400;color:#b4b7ba;letter-spacing:0.476px;">$0.00</div>
<div class="t" style="left:1100.00px;top:810.00px;font-size:15px;line-height:15px;font-weight:400;color:#444749;letter-spacing:0.351px;">$2,450.62</div>
<div class="t" style="left:1254.50px;top:810.00px;font-size:15px;line-height:15px;font-weight:400;color:#444749;letter-spacing:-0.146px;">$350.31</div>
<div class="t" style="left:1349.60px;top:810.00px;font-size:15px;line-height:15px;font-weight:400;color:#444749;letter-spacing:0.425px;">2 Jul 2023</div>
<div class="t" style="left:1454.80px;top:810.00px;font-size:15px;line-height:15px;font-weight:400;color:#444749;letter-spacing:0.513px;">4 Jul 2023</div>
<div class="t" style="left:1708.70px;top:811.00px;font-size:15px;line-height:15px;font-weight:400;color:#1f7bd8;letter-spacing:-0.234px;-webkit-text-stroke:0.3px #1f7bd8">x 2</div>
<div class="t" style="left:1829.49px;top:811.00px;font-size:15px;line-height:15px;font-weight:400;color:#2a7bd0;letter-spacing:0.000px;-webkit-text-stroke:0.3px #2a7bd0">1315</div>
<div class="t" style="left:107.70px;top:842.00px;font-size:14.5px;line-height:14.5px;font-weight:400;color:#2c7fd2;letter-spacing:0.705px;">Carly Lygon (13)</div>
<div class="t" style="left:545.90px;top:842.00px;font-size:15px;line-height:15px;font-weight:400;color:#444749;letter-spacing:0.301px;">76.00</div>
<div class="t" style="left:670.30px;top:842.00px;font-size:15px;line-height:15px;font-weight:400;color:#444749;letter-spacing:-0.786px;">$3,471.15</div>
<div class="t" style="left:819.40px;top:842.00px;font-size:15px;line-height:15px;font-weight:400;color:#444749;letter-spacing:0.437px;">$832.00</div>
<div class="t" style="left:988.30px;top:842.00px;font-size:15px;line-height:15px;font-weight:400;color:#444749;letter-spacing:0.476px;">$5.00</div>
<div class="t" style="left:1103.20px;top:842.00px;font-size:15px;line-height:15px;font-weight:400;color:#444749;letter-spacing:-0.049px;">$2,634.15</div>
<div class="t" style="left:1254.60px;top:842.00px;font-size:15px;line-height:15px;font-weight:400;color:#444749;letter-spacing:-0.163px;">$381.83</div>
<div class="t" style="left:1342.90px;top:842.00px;font-size:15px;line-height:15px;font-weight:400;color:#444749;letter-spacing:0.218px;">16 Jul 2023</div>
<div class="t" style="left:1449.00px;top:842.00px;font-size:15px;line-height:15px;font-weight:400;color:#444749;letter-spacing:0.208px;">18 Jul 2023</div>
<div class="t" style="left:1708.70px;top:843.00px;font-size:15px;line-height:15px;font-weight:400;color:#1f7bd8;letter-spacing:-0.234px;-webkit-text-stroke:0.3px #1f7bd8">x 2</div>
<div class="t" style="left:1829.49px;top:843.00px;font-size:15px;line-height:15px;font-weight:400;color:#2a7bd0;letter-spacing:0.000px;-webkit-text-stroke:0.3px #2a7bd0">1352</div>
<div class="t" style="left:107.70px;top:874.00px;font-size:14.5px;line-height:14.5px;font-weight:400;color:#2c7fd2;letter-spacing:0.684px;">Carly Harkin (21)</div>
<div class="t" style="left:545.90px;top:874.00px;font-size:15px;line-height:15px;font-weight:400;color:#444749;letter-spacing:0.301px;">76.00</div>
<div class="t" style="left:662.60px;top:874.00px;font-size:15px;line-height:15px;font-weight:400;color:#444749;letter-spacing:0.176px;">$3,076.92</div>
<div class="t" style="left:817.80px;top:874.00px;font-size:15px;line-height:15px;font-weight:400;color:#444749;letter-spacing:0.704px;">$696.00</div>
<div class="t" style="left:988.30px;top:874.00px;font-size:15px;line-height:15px;font-weight:400;color:#b4b7ba;letter-spacing:0.476px;">$0.00</div>
<div class="t" style="left:1100.40px;top:874.00px;font-size:15px;line-height:15px;font-weight:400;color:#444749;letter-spacing:0.301px;">$2,380.92</div>
<div class="t" style="left:1250.40px;top:874.00px;font-size:15px;line-height:15px;font-weight:400;color:#444749;letter-spacing:0.537px;">$338.46</div>
<div class="t" style="left:1342.90px;top:874.00px;font-size:15px;line-height:15px;font-weight:400;color:#444749;letter-spacing:0.218px;">16 Jul 2023</div>
<div class="t" style="left:1449.00px;top:874.00px;font-size:15px;line-height:15px;font-weight:400;color:#444749;letter-spacing:0.208px;">18 Jul 2023</div>
<div class="t" style="left:1708.70px;top:875.00px;font-size:15px;line-height:15px;font-weight:400;color:#1f7bd8;letter-spacing:-0.234px;-webkit-text-stroke:0.3px #1f7bd8">x 2</div>
<div class="t" style="left:1829.49px;top:875.00px;font-size:15px;line-height:15px;font-weight:400;color:#2a7bd0;letter-spacing:0.000px;-webkit-text-stroke:0.3px #2a7bd0">1337</div>
<div class="t" style="left:522.40px;top:907.00px;font-size:15px;line-height:15px;font-weight:700;color:#606467;letter-spacing:1.237px;">3688.00</div>
<div class="t" style="left:643.70px;top:907.00px;font-size:15px;line-height:15px;font-weight:700;color:#606467;letter-spacing:0.363px;">$157,905.81</div>
<div class="t" style="left:789.90px;top:907.00px;font-size:15px;line-height:15px;font-weight:700;color:#606467;letter-spacing:1.263px;">$35,838.00</div>
<div class="t" style="left:972.40px;top:907.00px;font-size:15px;line-height:15px;font-weight:700;color:#606467;letter-spacing:0.275px;">$110.00</div>
<div class="t" style="left:1086.70px;top:907.00px;font-size:15px;line-height:15px;font-weight:700;color:#606467;letter-spacing:-0.057px;">$121,957.81</div>
<div class="t" style="left:1228.30px;top:907.00px;font-size:15px;line-height:15px;font-weight:700;color:#606467;letter-spacing:0.419px;">$17,372.45</div>
<div class="t" style="left:13.70px;top:948.00px;font-size:14.5px;line-height:14.5px;font-weight:400;color:#666a6e;letter-spacing:1.012px;">Showing 1 to 20 of 50 entries</div>
<div class="t" style="left:906.00px;top:948.00px;font-size:14px;line-height:14px;font-weight:700;color:#fff;letter-spacing:0.000px;">1</div>
<div class="t" style="left:954.00px;top:948.00px;font-size:14px;line-height:14px;font-weight:700;color:#2a7fd4;letter-spacing:0.000px;">2</div>
<div class="t" style="left:1002.00px;top:948.00px;font-size:14px;line-height:14px;font-weight:700;color:#2a7fd4;letter-spacing:0.000px;">3</div>
<div class="t" style="left:1723.00px;top:947.00px;font-size:15px;line-height:15px;font-weight:400;color:#606468;letter-spacing:1.003px;">Display</div>
<div class="t" style="left:1789.30px;top:947.00px;font-size:15px;line-height:15px;font-weight:700;color:#2a7fd4;letter-spacing:-0.342px;">20</div>
<div class="t" style="left:1833.40px;top:947.00px;font-size:15px;line-height:15px;font-weight:400;color:#606468;letter-spacing:1.375px;">per page</div>
</div>
</body></html>
